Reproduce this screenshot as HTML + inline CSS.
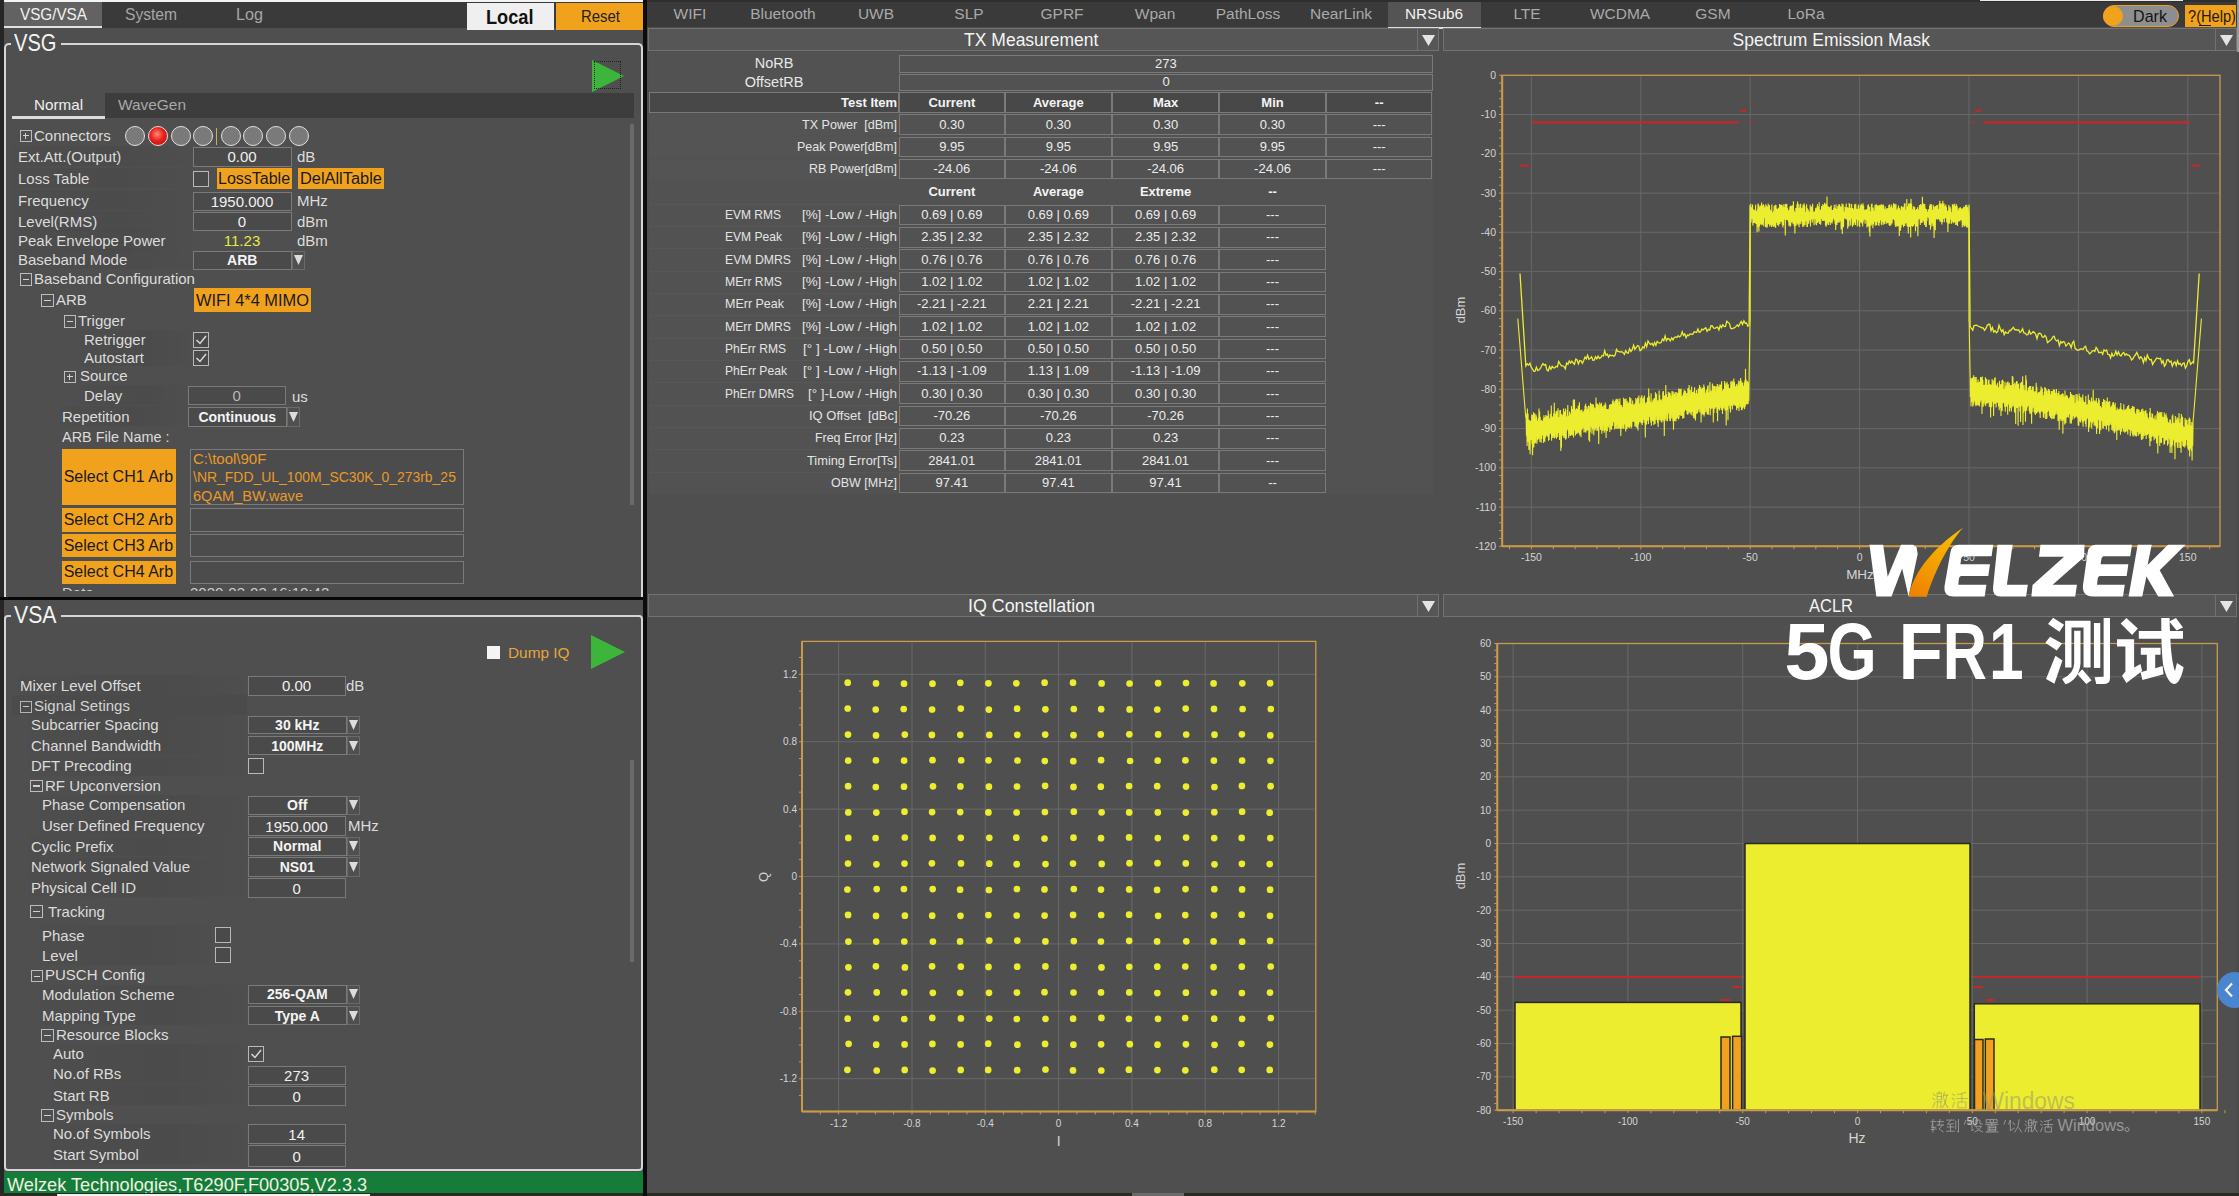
<!DOCTYPE html><html><head><meta charset="utf-8"><style>
html,body{margin:0;padding:0;}
body{width:2239px;height:1196px;position:relative;overflow:hidden;background:#4f4f4f;font-family:"Liberation Sans",sans-serif;}
div,span,svg{position:absolute;}
span{white-space:pre;}
</style></head><body>
<div style="left:0px;top:0px;width:2239px;height:1196px;background:#4f4f4f"></div>
<div style="left:0px;top:0px;width:4px;height:1196px;background:#262626"></div>
<div style="left:4px;top:0px;width:639px;height:1.5px;background:#f4f4f4"></div>
<div style="left:4px;top:1.5px;width:639px;height:26px;background:#393a39"></div>
<div style="left:4px;top:1.5px;width:98px;height:24px;background:#626262"></div>
<div style="left:4px;top:25.5px;width:98px;height:2.5px;background:#e2e2e2"></div>
<span style="left:20.0px;top:3.3px;font-size:17px;line-height:24px;color:#f2f2f2;transform:scaleX(0.897);transform-origin:0 0;">VSG/VSA</span>
<span style="left:125.0px;top:3.3px;font-size:17px;line-height:24px;color:#a6a6a6;transform:scaleX(0.918);transform-origin:0 0;">System</span>
<span style="left:235.5px;top:3.3px;font-size:17px;line-height:24px;color:#a6a6a6;transform:scaleX(0.952);transform-origin:0 0;">Log</span>
<div style="left:467px;top:2.5px;width:87px;height:27.5px;background:#efefef"></div>
<span style="left:486.2px;top:2.5px;font-size:20px;line-height:28px;color:#111;font-weight:bold;transform:scaleX(0.909);transform-origin:0 0;">Local</span>
<div style="left:556px;top:2.5px;width:86.5px;height:27.5px;background:#f0a21c"></div>
<span style="left:580.5px;top:4.5px;font-size:17px;line-height:24px;color:#222;transform:scaleX(0.878);transform-origin:0 0;">Reset</span>
<div style="left:4px;top:43px;width:638.5px;height:554px;border:2px solid #d6d6d6;border-radius:4px;box-sizing:border-box;border-bottom:none;border-radius:5px 5px 0 0;"></div>
<div style="left:11px;top:42px;width:50px;height:5px;background:#4f4f4f"></div>
<span style="left:14.0px;top:26.0px;font-size:24px;line-height:34px;color:#f4f4f4;transform:scaleX(0.838);transform-origin:0 0;">VSG</span>
<div style="left:596px;top:0px;width:0px;height:0px;"></div>
<div style="left:0px;top:596.5px;width:643.5px;height:3.5px;background:#080808"></div>
<div style="left:4px;top:615px;width:638.5px;height:556px;border:2px solid #d6d6d6;border-radius:4px;box-sizing:border-box;"></div>
<div style="left:11px;top:614px;width:50px;height:5px;background:#4f4f4f"></div>
<span style="left:14.0px;top:598.0px;font-size:24px;line-height:34px;color:#f4f4f4;transform:scaleX(0.885);transform-origin:0 0;">VSA</span>
<svg style="left:592px;top:59.5px" width="32" height="32"><polygon points="0,0 32,16.0 0,32" fill="#3db53a"/></svg>
<div style="left:594px;top:61px;width:27px;height:28px;border:1px dotted #222;box-sizing:border-box"></div>
<svg style="left:591px;top:635px" width="34" height="34"><polygon points="0,0 34,17.0 0,34" fill="#3db53a"/></svg>
<div style="left:12px;top:92.5px;width:622px;height:25.5px;background:#3d3d3d"></div>
<div style="left:12px;top:92.5px;width:93px;height:25.5px;background:#4f4f4f"></div>
<div style="left:12px;top:116px;width:93px;height:2.5px;background:#dcdcdc"></div>
<span style="left:34.0px;top:93.5px;font-size:15px;line-height:21px;color:#f0f0f0;transform:scaleX(1.014);transform-origin:0 0;">Normal</span>
<span style="left:118.0px;top:93.5px;font-size:15px;line-height:21px;color:#a8a8a8;transform:scaleX(1.028);transform-origin:0 0;">WaveGen</span>
<div style="left:630px;top:124px;width:4px;height:381px;background:#6a6a6a"></div>
<div style="left:630px;top:760px;width:4px;height:202px;background:#6a6a6a"></div>
<div style="left:19.6px;top:129.5px;width:12.5px;height:12.5px;border:1px solid #bdbdbd;box-sizing:border-box"></div>
<div style="left:22.6px;top:135.15px;width:6.5px;height:1.2px;background:#d0d0d0"></div>
<div style="left:25.25px;top:132.5px;width:1.2px;height:6.5px;background:#d0d0d0"></div>
<span style="left:34.0px;top:124.5px;font-size:15px;line-height:21px;color:#dcdcdc;">Connectors</span>
<div style="left:124.6px;top:126px;width:20px;height:20px;border-radius:50%;border:1.5px solid #e0e0e0;box-sizing:border-box;background:#7a7a7a"></div>
<div style="left:147.7px;top:126px;width:20px;height:20px;border-radius:50%;border:1.5px solid #e0e0e0;box-sizing:border-box;background:radial-gradient(circle at 45% 40%,#ff8a7a,#e8201a 45%,#b01010)"></div>
<div style="left:170.5px;top:126px;width:20px;height:20px;border-radius:50%;border:1.5px solid #e0e0e0;box-sizing:border-box;background:#7a7a7a"></div>
<div style="left:193.4px;top:126px;width:20px;height:20px;border-radius:50%;border:1.5px solid #e0e0e0;box-sizing:border-box;background:#7a7a7a"></div>
<div style="left:220.6px;top:126px;width:20px;height:20px;border-radius:50%;border:1.5px solid #e0e0e0;box-sizing:border-box;background:#7a7a7a"></div>
<div style="left:243px;top:126px;width:20px;height:20px;border-radius:50%;border:1.5px solid #e0e0e0;box-sizing:border-box;background:#7a7a7a"></div>
<div style="left:266px;top:126px;width:20px;height:20px;border-radius:50%;border:1.5px solid #e0e0e0;box-sizing:border-box;background:#7a7a7a"></div>
<div style="left:289px;top:126px;width:20px;height:20px;border-radius:50%;border:1.5px solid #e0e0e0;box-sizing:border-box;background:#7a7a7a"></div>
<div style="left:215.5px;top:128px;width:1.2px;height:17px;background:#c8b060"></div>
<div style="left:12px;top:146.0px;width:180px;height:20px;background:linear-gradient(90deg,rgba(0,0,0,0.02),rgba(0,0,0,0.05) 60%,rgba(0,0,0,0.01))"></div>
<span style="left:18.0px;top:145.5px;font-size:15px;line-height:21px;color:#dcdcdc;">Ext.Att.(Output)</span>
<div style="left:12px;top:168.0px;width:180px;height:20px;background:linear-gradient(90deg,rgba(0,0,0,0.02),rgba(0,0,0,0.05) 60%,rgba(0,0,0,0.01))"></div>
<span style="left:18.0px;top:167.5px;font-size:15px;line-height:21px;color:#dcdcdc;">Loss Table</span>
<div style="left:12px;top:190.0px;width:180px;height:20px;background:linear-gradient(90deg,rgba(0,0,0,0.02),rgba(0,0,0,0.05) 60%,rgba(0,0,0,0.01))"></div>
<span style="left:18.0px;top:189.5px;font-size:15px;line-height:21px;color:#dcdcdc;">Frequency</span>
<div style="left:12px;top:211.0px;width:180px;height:20px;background:linear-gradient(90deg,rgba(0,0,0,0.02),rgba(0,0,0,0.05) 60%,rgba(0,0,0,0.01))"></div>
<span style="left:18.0px;top:210.5px;font-size:15px;line-height:21px;color:#dcdcdc;">Level(RMS)</span>
<div style="left:12px;top:230.0px;width:180px;height:20px;background:linear-gradient(90deg,rgba(0,0,0,0.02),rgba(0,0,0,0.05) 60%,rgba(0,0,0,0.01))"></div>
<span style="left:18.0px;top:229.5px;font-size:15px;line-height:21px;color:#dcdcdc;">Peak Envelope Power</span>
<div style="left:12px;top:249.0px;width:180px;height:20px;background:linear-gradient(90deg,rgba(0,0,0,0.02),rgba(0,0,0,0.05) 60%,rgba(0,0,0,0.01))"></div>
<span style="left:18.0px;top:248.5px;font-size:15px;line-height:21px;color:#dcdcdc;">Baseband Mode</span>
<div style="left:192.5px;top:147px;width:99px;height:19.5px;border:1px solid #7a7a7a;background:#4a4a4a;box-sizing:border-box"></div>
<span style="left:227.4px;top:146.2px;font-size:15px;line-height:21px;color:#f0f0f0;">0.00</span>
<span style="left:297.0px;top:145.5px;font-size:15px;line-height:21px;color:#dcdcdc;">dB</span>
<div style="left:193px;top:171px;width:16px;height:16px;border:1.5px solid #b8b8b8;box-sizing:border-box;background:#4a4a4a"></div>
<div style="left:216.5px;top:168px;width:75px;height:21px;background:#f0a21c"></div>
<span style="left:218.0px;top:167.5px;font-size:16px;line-height:22px;color:#1a1a1a;">LossTable</span>
<div style="left:298px;top:168px;width:86px;height:21px;background:#f0a21c"></div>
<span style="left:300.0px;top:167.5px;font-size:16px;line-height:22px;color:#1a1a1a;transform:scaleX(1.023);transform-origin:0 0;">DelAllTable</span>
<div style="left:192.5px;top:191.5px;width:99px;height:19.5px;border:1px solid #7a7a7a;background:#4a4a4a;box-sizing:border-box"></div>
<span style="left:210.7px;top:190.8px;font-size:15px;line-height:21px;color:#f0f0f0;">1950.000</span>
<span style="left:297.0px;top:189.5px;font-size:15px;line-height:21px;color:#dcdcdc;">MHz</span>
<div style="left:192.5px;top:211.5px;width:99px;height:19.5px;border:1px solid #7a7a7a;background:#4a4a4a;box-sizing:border-box"></div>
<span style="left:237.8px;top:210.8px;font-size:15px;line-height:21px;color:#f0f0f0;">0</span>
<span style="left:297.0px;top:210.5px;font-size:15px;line-height:21px;color:#dcdcdc;">dBm</span>
<span style="left:223.8px;top:230.0px;font-size:15px;line-height:21px;color:#e8e840;">11.23</span>
<span style="left:297.0px;top:230.0px;font-size:15px;line-height:21px;color:#dcdcdc;">dBm</span>
<div style="left:192.5px;top:250.5px;width:99.5px;height:19px;border:1px solid #7a7a7a;background:#4a4a4a;box-sizing:border-box"></div>
<div style="left:292.0px;top:250.5px;width:13px;height:19px;border:1px solid #6a6a6a;background:#505050;box-sizing:border-box"></div>
<svg style="left:294.0px;top:254.0px" width="9" height="12"><polygon points="0,1 9,1 4.5,11" fill="#dcdcdc"/></svg>
<span style="left:227.1px;top:250.0px;font-size:14px;line-height:20px;color:#f4f4f4;font-weight:bold;">ARB</span>
<div style="left:19.6px;top:273px;width:12.5px;height:12.5px;border:1px solid #bdbdbd;box-sizing:border-box"></div>
<div style="left:22.6px;top:278.65px;width:6.5px;height:1.2px;background:#d0d0d0"></div>
<span style="left:34.0px;top:267.5px;font-size:15px;line-height:21px;color:#dcdcdc;">Baseband Configuration</span>
<div style="left:41px;top:294px;width:12.5px;height:12.5px;border:1px solid #bdbdbd;box-sizing:border-box"></div>
<div style="left:44px;top:299.65px;width:6.5px;height:1.2px;background:#d0d0d0"></div>
<span style="left:56.0px;top:288.5px;font-size:15px;line-height:21px;color:#dcdcdc;">ARB</span>
<div style="left:194px;top:288px;width:117px;height:24px;background:#f0a21c"></div>
<span style="left:196.0px;top:288.5px;font-size:17px;line-height:24px;color:#1a1a1a;transform:scaleX(0.965);transform-origin:0 0;">WIFI 4*4 MIMO</span>
<div style="left:63.5px;top:315.3px;width:12.5px;height:12.5px;border:1px solid #bdbdbd;box-sizing:border-box"></div>
<div style="left:66.5px;top:320.95px;width:6.5px;height:1.2px;background:#d0d0d0"></div>
<span style="left:78.0px;top:309.5px;font-size:15px;line-height:21px;color:#dcdcdc;">Trigger</span>
<div style="left:80px;top:330.0px;width:110px;height:18px;background:linear-gradient(90deg,rgba(0,0,0,0.02),rgba(0,0,0,0.05) 60%,rgba(0,0,0,0.01))"></div>
<span style="left:84.0px;top:328.5px;font-size:15px;line-height:21px;color:#dcdcdc;">Retrigger</span>
<div style="left:193px;top:332px;width:16px;height:16px;border:1.5px solid #b8b8b8;box-sizing:border-box;background:#4a4a4a"></div>
<svg style="left:193px;top:332px" width="16" height="16"><polyline points="3.5,8 7,11.5 13,4" fill="none" stroke="#d8d8d8" stroke-width="1.5"/></svg>
<div style="left:80px;top:348.0px;width:110px;height:18px;background:linear-gradient(90deg,rgba(0,0,0,0.02),rgba(0,0,0,0.05) 60%,rgba(0,0,0,0.01))"></div>
<span style="left:84.0px;top:346.5px;font-size:15px;line-height:21px;color:#dcdcdc;">Autostart</span>
<div style="left:193px;top:350px;width:16px;height:16px;border:1.5px solid #b8b8b8;box-sizing:border-box;background:#4a4a4a"></div>
<svg style="left:193px;top:350px" width="16" height="16"><polyline points="3.5,8 7,11.5 13,4" fill="none" stroke="#d8d8d8" stroke-width="1.5"/></svg>
<div style="left:63.5px;top:370.6px;width:12.5px;height:12.5px;border:1px solid #bdbdbd;box-sizing:border-box"></div>
<div style="left:66.5px;top:376.25px;width:6.5px;height:1.2px;background:#d0d0d0"></div>
<div style="left:69.15px;top:373.6px;width:1.2px;height:6.5px;background:#d0d0d0"></div>
<span style="left:80.0px;top:364.5px;font-size:15px;line-height:21px;color:#dcdcdc;">Source</span>
<div style="left:80px;top:385.0px;width:107px;height:20px;background:linear-gradient(90deg,rgba(0,0,0,0.02),rgba(0,0,0,0.05) 60%,rgba(0,0,0,0.01))"></div>
<span style="left:84.0px;top:384.5px;font-size:15px;line-height:21px;color:#dcdcdc;">Delay</span>
<div style="left:187.5px;top:386px;width:98.5px;height:19px;border:1px solid #7a7a7a;background:#4a4a4a;box-sizing:border-box"></div>
<span style="left:232.6px;top:385.0px;font-size:15px;line-height:21px;color:#b8b8b8;">0</span>
<span style="left:292.0px;top:385.5px;font-size:15px;line-height:21px;color:#dcdcdc;">us</span>
<div style="left:60px;top:406.0px;width:127px;height:20px;background:linear-gradient(90deg,rgba(0,0,0,0.02),rgba(0,0,0,0.05) 60%,rgba(0,0,0,0.01))"></div>
<span style="left:62.0px;top:405.5px;font-size:15px;line-height:21px;color:#dcdcdc;">Repetition</span>
<div style="left:187.5px;top:406.5px;width:99.5px;height:20.5px;border:1px solid #7a7a7a;background:#4a4a4a;box-sizing:border-box"></div>
<div style="left:287.0px;top:406.5px;width:13px;height:20.5px;border:1px solid #6a6a6a;background:#505050;box-sizing:border-box"></div>
<svg style="left:289.0px;top:410.75px" width="9" height="12"><polygon points="0,1 9,1 4.5,11" fill="#dcdcdc"/></svg>
<span style="left:198.4px;top:406.8px;font-size:14px;line-height:20px;color:#f4f4f4;font-weight:bold;">Continuous</span>
<span style="left:62.0px;top:425.5px;font-size:15px;line-height:21px;color:#dcdcdc;transform:scaleX(0.963);transform-origin:0 0;">ARB File Name :</span>
<div style="left:62px;top:448.7px;width:113.5px;height:56.3px;background:#f0a21c"></div>
<span style="left:63.7px;top:466.0px;font-size:16px;line-height:22px;color:#1a1a1a;">Select CH1 Arb</span>
<div style="left:190px;top:448.7px;width:274px;height:56.3px;border:1px solid #7a7a7a;box-sizing:border-box;background:#4c4c4c"></div>
<span style="left:193.0px;top:447.5px;font-size:15px;line-height:21px;color:#e89a28;">C:\tool\90F</span>
<span style="left:193.0px;top:466.0px;font-size:15px;line-height:21px;color:#e89a28;transform:scaleX(0.930);transform-origin:0 0;">\NR_FDD_UL_100M_SC30K_0_273rb_25</span>
<span style="left:193.0px;top:484.5px;font-size:15px;line-height:21px;color:#e89a28;transform:scaleX(0.970);transform-origin:0 0;">6QAM_BW.wave</span>
<div style="left:62px;top:508.3px;width:113.5px;height:23.499999999999943px;background:#f0a21c"></div>
<span style="left:63.7px;top:509.0px;font-size:16px;line-height:22px;color:#1a1a1a;">Select CH2 Arb</span>
<div style="left:190px;top:508.3px;width:274px;height:23.499999999999943px;border:1px solid #7a7a7a;box-sizing:border-box;background:#4c4c4c"></div>
<div style="left:62px;top:534px;width:113.5px;height:23px;background:#f0a21c"></div>
<span style="left:63.7px;top:534.5px;font-size:16px;line-height:22px;color:#1a1a1a;">Select CH3 Arb</span>
<div style="left:190px;top:534px;width:274px;height:23px;border:1px solid #7a7a7a;box-sizing:border-box;background:#4c4c4c"></div>
<div style="left:62px;top:561px;width:113.5px;height:22.5px;background:#f0a21c"></div>
<span style="left:63.7px;top:561.2px;font-size:16px;line-height:22px;color:#1a1a1a;">Select CH4 Arb</span>
<div style="left:190px;top:561px;width:274px;height:22.5px;border:1px solid #7a7a7a;box-sizing:border-box;background:#4c4c4c"></div>
<div style="left:60px;top:585px;width:400px;height:6px;overflow:hidden"><span style="left:2px;top:-1px;font-size:15px;line-height:18px;color:#d0d0d0">Date</span><span style="left:130px;top:-1px;font-size:15px;line-height:18px;color:#d0d0d0">2020-03-03 16:10:42</span></div>
<span style="left:507.8px;top:641.5px;font-size:15px;line-height:21px;color:#e8a53a;transform:scaleX(1.024);transform-origin:0 0;">Dump IQ</span>
<div style="left:487px;top:645.5px;width:13px;height:13px;background:#f4f4f4"></div>
<div style="left:18px;top:675.4px;width:228px;height:20px;background:linear-gradient(90deg,rgba(0,0,0,0.02),rgba(0,0,0,0.05) 60%,rgba(0,0,0,0.01))"></div>
<span style="left:20.0px;top:674.9px;font-size:15px;line-height:21px;color:#dcdcdc;">Mixer Level Offset</span>
<div style="left:247.5px;top:675.6px;width:98.2px;height:20.4px;border:1px solid #7a7a7a;background:#4a4a4a;box-sizing:border-box"></div>
<span style="left:282.0px;top:675.3px;font-size:15px;line-height:21px;color:#f0f0f0;">0.00</span>
<span style="left:346.0px;top:675.0px;font-size:15px;line-height:21px;color:#dcdcdc;">dB</span>
<div style="left:19.6px;top:700.6px;width:12.5px;height:12.5px;border:1px solid #bdbdbd;box-sizing:border-box"></div>
<div style="left:22.6px;top:706.25px;width:6.5px;height:1.2px;background:#d0d0d0"></div>
<span style="left:34.0px;top:694.5px;font-size:15px;line-height:21px;color:#dcdcdc;">Signal Setings</span>
<div style="left:12px;top:695px;width:235px;height:20px;background:rgba(0,0,0,0.04)"></div>
<div style="left:29px;top:714.7px;width:217px;height:20px;background:linear-gradient(90deg,rgba(0,0,0,0.02),rgba(0,0,0,0.05) 60%,rgba(0,0,0,0.01))"></div>
<span style="left:31.0px;top:714.2px;font-size:15px;line-height:21px;color:#dcdcdc;">Subcarrier Spacing</span>
<div style="left:247.5px;top:715.8px;width:99.5px;height:18px;border:1px solid #7a7a7a;background:#4a4a4a;box-sizing:border-box"></div>
<div style="left:347.0px;top:715.8px;width:13px;height:18px;border:1px solid #6a6a6a;background:#505050;box-sizing:border-box"></div>
<svg style="left:349.0px;top:718.8px" width="9" height="12"><polygon points="0,1 9,1 4.5,11" fill="#dcdcdc"/></svg>
<span style="left:275.1px;top:714.8px;font-size:14px;line-height:20px;color:#f4f4f4;font-weight:bold;">30 kHz</span>
<div style="left:29px;top:735.0px;width:217px;height:20px;background:linear-gradient(90deg,rgba(0,0,0,0.02),rgba(0,0,0,0.05) 60%,rgba(0,0,0,0.01))"></div>
<span style="left:31.0px;top:734.5px;font-size:15px;line-height:21px;color:#dcdcdc;">Channel Bandwidth</span>
<div style="left:247.5px;top:736px;width:99.5px;height:19px;border:1px solid #7a7a7a;background:#4a4a4a;box-sizing:border-box"></div>
<div style="left:347.0px;top:736px;width:13px;height:19px;border:1px solid #6a6a6a;background:#505050;box-sizing:border-box"></div>
<svg style="left:349.0px;top:739.5px" width="9" height="12"><polygon points="0,1 9,1 4.5,11" fill="#dcdcdc"/></svg>
<span style="left:271.2px;top:735.5px;font-size:14px;line-height:20px;color:#f4f4f4;font-weight:bold;">100MHz</span>
<div style="left:29px;top:755.7px;width:217px;height:20px;background:linear-gradient(90deg,rgba(0,0,0,0.02),rgba(0,0,0,0.05) 60%,rgba(0,0,0,0.01))"></div>
<span style="left:31.0px;top:755.2px;font-size:15px;line-height:21px;color:#dcdcdc;">DFT Precoding</span>
<div style="left:247.5px;top:758px;width:16px;height:16px;border:1.5px solid #b8b8b8;box-sizing:border-box;background:#4a4a4a"></div>
<div style="left:30.4px;top:779.8px;width:12.5px;height:12.5px;border:1px solid #bdbdbd;box-sizing:border-box"></div>
<div style="left:33.4px;top:785.4499999999999px;width:6.5px;height:1.2px;background:#d0d0d0"></div>
<span style="left:45.0px;top:774.5px;font-size:15px;line-height:21px;color:#dcdcdc;">RF Upconversion</span>
<div style="left:40px;top:794.8px;width:206px;height:20px;background:linear-gradient(90deg,rgba(0,0,0,0.02),rgba(0,0,0,0.05) 60%,rgba(0,0,0,0.01))"></div>
<span style="left:42.0px;top:794.3px;font-size:15px;line-height:21px;color:#dcdcdc;">Phase Compensation</span>
<div style="left:247.5px;top:796px;width:99.5px;height:18.7px;border:1px solid #7a7a7a;background:#4a4a4a;box-sizing:border-box"></div>
<div style="left:347.0px;top:796px;width:13px;height:18.7px;border:1px solid #6a6a6a;background:#505050;box-sizing:border-box"></div>
<svg style="left:349.0px;top:799.35px" width="9" height="12"><polygon points="0,1 9,1 4.5,11" fill="#dcdcdc"/></svg>
<span style="left:287.1px;top:795.4px;font-size:14px;line-height:20px;color:#f4f4f4;font-weight:bold;">Off</span>
<div style="left:40px;top:815.4px;width:206px;height:20px;background:linear-gradient(90deg,rgba(0,0,0,0.02),rgba(0,0,0,0.05) 60%,rgba(0,0,0,0.01))"></div>
<span style="left:42.0px;top:814.9px;font-size:15px;line-height:21px;color:#dcdcdc;">User Defined Frequency</span>
<div style="left:247.5px;top:816px;width:98.2px;height:20px;border:1px solid #7a7a7a;background:#4a4a4a;box-sizing:border-box"></div>
<span style="left:265.3px;top:815.5px;font-size:15px;line-height:21px;color:#f0f0f0;">1950.000</span>
<span style="left:348.0px;top:815.0px;font-size:15px;line-height:21px;color:#dcdcdc;">MHz</span>
<div style="left:29px;top:836.0px;width:217px;height:20px;background:linear-gradient(90deg,rgba(0,0,0,0.02),rgba(0,0,0,0.05) 60%,rgba(0,0,0,0.01))"></div>
<span style="left:31.0px;top:835.5px;font-size:15px;line-height:21px;color:#dcdcdc;">Cyclic Prefix</span>
<div style="left:247.5px;top:837px;width:99.5px;height:18.5px;border:1px solid #7a7a7a;background:#4a4a4a;box-sizing:border-box"></div>
<div style="left:347.0px;top:837px;width:13px;height:18.5px;border:1px solid #6a6a6a;background:#505050;box-sizing:border-box"></div>
<svg style="left:349.0px;top:840.25px" width="9" height="12"><polygon points="0,1 9,1 4.5,11" fill="#dcdcdc"/></svg>
<span style="left:273.1px;top:836.2px;font-size:14px;line-height:20px;color:#f4f4f4;font-weight:bold;">Normal</span>
<div style="left:29px;top:856.5px;width:217px;height:20px;background:linear-gradient(90deg,rgba(0,0,0,0.02),rgba(0,0,0,0.05) 60%,rgba(0,0,0,0.01))"></div>
<span style="left:31.0px;top:856.0px;font-size:15px;line-height:21px;color:#dcdcdc;">Network Signaled Value</span>
<div style="left:247.5px;top:857px;width:99.5px;height:20px;border:1px solid #7a7a7a;background:#4a4a4a;box-sizing:border-box"></div>
<div style="left:347.0px;top:857px;width:13px;height:20px;border:1px solid #6a6a6a;background:#505050;box-sizing:border-box"></div>
<svg style="left:349.0px;top:861.0px" width="9" height="12"><polygon points="0,1 9,1 4.5,11" fill="#dcdcdc"/></svg>
<span style="left:279.7px;top:857.0px;font-size:14px;line-height:20px;color:#f4f4f4;font-weight:bold;">NS01</span>
<div style="left:29px;top:877.0px;width:217px;height:20px;background:linear-gradient(90deg,rgba(0,0,0,0.02),rgba(0,0,0,0.05) 60%,rgba(0,0,0,0.01))"></div>
<span style="left:31.0px;top:876.5px;font-size:15px;line-height:21px;color:#dcdcdc;">Physical Cell ID</span>
<div style="left:247.5px;top:878px;width:98.2px;height:20px;border:1px solid #7a7a7a;background:#4a4a4a;box-sizing:border-box"></div>
<span style="left:292.4px;top:877.5px;font-size:15px;line-height:21px;color:#f0f0f0;">0</span>
<div style="left:30.4px;top:905px;width:12.5px;height:12.5px;border:1px solid #bdbdbd;box-sizing:border-box"></div>
<div style="left:33.4px;top:910.65px;width:6.5px;height:1.2px;background:#d0d0d0"></div>
<span style="left:48.0px;top:900.5px;font-size:15px;line-height:21px;color:#dcdcdc;">Tracking</span>
<div style="left:40px;top:925.0px;width:172px;height:20px;background:linear-gradient(90deg,rgba(0,0,0,0.02),rgba(0,0,0,0.05) 60%,rgba(0,0,0,0.01))"></div>
<span style="left:42.0px;top:924.5px;font-size:15px;line-height:21px;color:#dcdcdc;">Phase</span>
<div style="left:215px;top:927px;width:16px;height:16px;border:1.5px solid #b8b8b8;box-sizing:border-box;background:#4a4a4a"></div>
<div style="left:40px;top:945.0px;width:172px;height:20px;background:linear-gradient(90deg,rgba(0,0,0,0.02),rgba(0,0,0,0.05) 60%,rgba(0,0,0,0.01))"></div>
<span style="left:42.0px;top:944.5px;font-size:15px;line-height:21px;color:#dcdcdc;">Level</span>
<div style="left:215px;top:947px;width:16px;height:16px;border:1.5px solid #b8b8b8;box-sizing:border-box;background:#4a4a4a"></div>
<div style="left:30.6px;top:969.9px;width:12.5px;height:12.5px;border:1px solid #bdbdbd;box-sizing:border-box"></div>
<div style="left:33.6px;top:975.55px;width:6.5px;height:1.2px;background:#d0d0d0"></div>
<span style="left:45.0px;top:964.3px;font-size:15px;line-height:21px;color:#dcdcdc;">PUSCH Config</span>
<div style="left:40px;top:984.5px;width:206px;height:20px;background:linear-gradient(90deg,rgba(0,0,0,0.02),rgba(0,0,0,0.05) 60%,rgba(0,0,0,0.01))"></div>
<span style="left:42.0px;top:984.0px;font-size:15px;line-height:21px;color:#dcdcdc;">Modulation Scheme</span>
<div style="left:247.5px;top:985px;width:99.5px;height:18.8px;border:1px solid #7a7a7a;background:#4a4a4a;box-sizing:border-box"></div>
<div style="left:347.0px;top:985px;width:13px;height:18.8px;border:1px solid #6a6a6a;background:#505050;box-sizing:border-box"></div>
<svg style="left:349.0px;top:988.4px" width="9" height="12"><polygon points="0,1 9,1 4.5,11" fill="#dcdcdc"/></svg>
<span style="left:266.9px;top:984.4px;font-size:14px;line-height:20px;color:#f4f4f4;font-weight:bold;">256-QAM</span>
<div style="left:40px;top:1005.0px;width:206px;height:20px;background:linear-gradient(90deg,rgba(0,0,0,0.02),rgba(0,0,0,0.05) 60%,rgba(0,0,0,0.01))"></div>
<span style="left:42.0px;top:1004.5px;font-size:15px;line-height:21px;color:#dcdcdc;">Mapping Type</span>
<div style="left:247.5px;top:1006px;width:99.5px;height:19px;border:1px solid #7a7a7a;background:#4a4a4a;box-sizing:border-box"></div>
<div style="left:347.0px;top:1006px;width:13px;height:19px;border:1px solid #6a6a6a;background:#505050;box-sizing:border-box"></div>
<svg style="left:349.0px;top:1009.5px" width="9" height="12"><polygon points="0,1 9,1 4.5,11" fill="#dcdcdc"/></svg>
<span style="left:274.7px;top:1005.5px;font-size:14px;line-height:20px;color:#f4f4f4;font-weight:bold;">Type A</span>
<div style="left:41.4px;top:1029px;width:12.5px;height:12.5px;border:1px solid #bdbdbd;box-sizing:border-box"></div>
<div style="left:44.4px;top:1034.65px;width:6.5px;height:1.2px;background:#d0d0d0"></div>
<span style="left:56.0px;top:1023.5px;font-size:15px;line-height:21px;color:#dcdcdc;">Resource Blocks</span>
<div style="left:51px;top:1043.7px;width:195px;height:20px;background:linear-gradient(90deg,rgba(0,0,0,0.02),rgba(0,0,0,0.05) 60%,rgba(0,0,0,0.01))"></div>
<span style="left:53.0px;top:1043.2px;font-size:15px;line-height:21px;color:#dcdcdc;">Auto</span>
<div style="left:248px;top:1045.8px;width:16px;height:16px;border:1.5px solid #b8b8b8;box-sizing:border-box;background:#4a4a4a"></div>
<svg style="left:248px;top:1045.8px" width="16" height="16"><polyline points="3.5,8 7,11.5 13,4" fill="none" stroke="#d8d8d8" stroke-width="1.5"/></svg>
<div style="left:51px;top:1063.5px;width:195px;height:20px;background:linear-gradient(90deg,rgba(0,0,0,0.02),rgba(0,0,0,0.05) 60%,rgba(0,0,0,0.01))"></div>
<span style="left:53.0px;top:1063.0px;font-size:15px;line-height:21px;color:#dcdcdc;">No.of RBs</span>
<div style="left:247.5px;top:1065.6px;width:98.2px;height:19.7px;border:1px solid #7a7a7a;background:#4a4a4a;box-sizing:border-box"></div>
<span style="left:284.1px;top:1064.9px;font-size:15px;line-height:21px;color:#f0f0f0;">273</span>
<div style="left:51px;top:1085.0px;width:195px;height:20px;background:linear-gradient(90deg,rgba(0,0,0,0.02),rgba(0,0,0,0.05) 60%,rgba(0,0,0,0.01))"></div>
<span style="left:53.0px;top:1084.5px;font-size:15px;line-height:21px;color:#dcdcdc;">Start RB</span>
<div style="left:247.5px;top:1086px;width:98.2px;height:20px;border:1px solid #7a7a7a;background:#4a4a4a;box-sizing:border-box"></div>
<span style="left:292.4px;top:1085.5px;font-size:15px;line-height:21px;color:#f0f0f0;">0</span>
<div style="left:41.4px;top:1109px;width:12.5px;height:12.5px;border:1px solid #bdbdbd;box-sizing:border-box"></div>
<div style="left:44.4px;top:1114.65px;width:6.5px;height:1.2px;background:#d0d0d0"></div>
<span style="left:56.0px;top:1103.5px;font-size:15px;line-height:21px;color:#dcdcdc;">Symbols</span>
<div style="left:51px;top:1123.6px;width:195px;height:20px;background:linear-gradient(90deg,rgba(0,0,0,0.02),rgba(0,0,0,0.05) 60%,rgba(0,0,0,0.01))"></div>
<span style="left:53.0px;top:1123.1px;font-size:15px;line-height:21px;color:#dcdcdc;">No.of Symbols</span>
<div style="left:247.5px;top:1123.8px;width:98.2px;height:20.7px;border:1px solid #7a7a7a;background:#4a4a4a;box-sizing:border-box"></div>
<span style="left:288.3px;top:1123.6px;font-size:15px;line-height:21px;color:#f0f0f0;">14</span>
<div style="left:51px;top:1144.4px;width:195px;height:20px;background:linear-gradient(90deg,rgba(0,0,0,0.02),rgba(0,0,0,0.05) 60%,rgba(0,0,0,0.01))"></div>
<span style="left:53.0px;top:1143.9px;font-size:15px;line-height:21px;color:#dcdcdc;">Start Symbol</span>
<div style="left:247.5px;top:1145px;width:98.2px;height:22px;border:1px solid #7a7a7a;background:#4a4a4a;box-sizing:border-box"></div>
<span style="left:292.4px;top:1145.5px;font-size:15px;line-height:21px;color:#f0f0f0;">0</span>
<div style="left:4px;top:1171.8px;width:638.5px;height:21.5px;background:#157d3a"></div>
<span style="left:7.0px;top:1170.5px;font-size:19px;line-height:27px;color:#f0f0e0;transform:scaleX(0.957);transform-origin:0 0;">Welzek Technologies,T6290F,F00305,V2.3.3</span>
<div style="left:0px;top:1193px;width:2239px;height:3px;background:#2a2a24"></div>
<div style="left:57px;top:1193.5px;width:313px;height:2.5px;background:#f0f0f0"></div>
<div style="left:643.4px;top:0px;width:3.5px;height:1196px;background:#0c0c0c"></div>

<div style="left:647px;top:0px;width:1592px;height:1.5px;background:#2e2e2e"></div>
<div style="left:647px;top:1.5px;width:1592px;height:25px;background:#393a39"></div>
<span style="left:673.6px;top:3.0px;font-size:15.5px;line-height:22px;color:#a9a9a9;">WIFI</span>
<span style="left:750.2px;top:3.0px;font-size:15.5px;line-height:22px;color:#a9a9a9;">Bluetooth</span>
<span style="left:857.9px;top:3.0px;font-size:15.5px;line-height:22px;color:#a9a9a9;">UWB</span>
<span style="left:954.3px;top:3.0px;font-size:15.5px;line-height:22px;color:#a9a9a9;">SLP</span>
<span style="left:1040.5px;top:3.0px;font-size:15.5px;line-height:22px;color:#a9a9a9;">GPRF</span>
<span style="left:1134.8px;top:3.0px;font-size:15.5px;line-height:22px;color:#a9a9a9;">Wpan</span>
<span style="left:1215.7px;top:3.0px;font-size:15.5px;line-height:22px;color:#a9a9a9;">PathLoss</span>
<span style="left:1310.0px;top:3.0px;font-size:15.5px;line-height:22px;color:#a9a9a9;">NearLink</span>
<div style="left:1387.5px;top:1.5px;width:93px;height:25px;background:#545454"></div>
<div style="left:1387.5px;top:26.5px;width:93px;height:2px;background:#dedede"></div>
<span style="left:1405.0px;top:3.0px;font-size:15.5px;line-height:22px;color:#f2f2f2;transform:scaleX(0.990);transform-origin:0 0;">NRSub6</span>
<span style="left:1513.4px;top:3.0px;font-size:15.5px;line-height:22px;color:#a9a9a9;">LTE</span>
<span style="left:1589.9px;top:3.0px;font-size:15.5px;line-height:22px;color:#a9a9a9;">WCDMA</span>
<span style="left:1695.3px;top:3.0px;font-size:15.5px;line-height:22px;color:#a9a9a9;">GSM</span>
<span style="left:1787.5px;top:3.0px;font-size:15.5px;line-height:22px;color:#a9a9a9;">LoRa</span>
<div style="left:2102.5px;top:4.8px;width:76.5px;height:22px;border-radius:11px;border:1.5px solid #e8a020;background:#8e8e8e;box-sizing:border-box"></div>
<div style="left:2103px;top:6px;width:20px;height:20px;border-radius:50%;background:#f0a21c"></div>
<span style="left:2133.0px;top:4.5px;font-size:17px;line-height:24px;color:#151515;transform:scaleX(0.947);transform-origin:0 0;">Dark</span>
<div style="left:2184.7px;top:4.8px;width:51.5px;height:22.4px;background:#f0a21c"></div>
<span style="left:2188.0px;top:4.5px;font-size:17px;line-height:24px;color:#221a10;transform:scaleX(0.861);transform-origin:0 0;">?(Help)</span>
<div style="left:2199px;top:24.5px;width:12px;height:1.2px;background:#221a10"></div>
<div style="left:1980px;top:0px;width:203px;height:1px;background:#e8e8e8"></div>
<div style="left:1132px;top:1193px;width:52px;height:3px;background:#6a6a6a"></div>
<div style="left:2236.5px;top:0px;width:2.5px;height:52px;background:#9a9a9a"></div>
<div style="left:2236.5px;top:52px;width:2.5px;height:1141px;background:#4a4a4a"></div>
<div style="left:648px;top:28px;width:790.5px;height:23px;border:1.5px solid #727272;background:#555655;box-sizing:border-box"></div>
<div style="left:1416.5px;top:29px;width:1px;height:21px;background:#717171"></div>
<svg style="left:1421.5px;top:34px" width="13" height="12"><polygon points="0,1 13,1 6.5,12" fill="#e4e4e4"/></svg>
<span style="left:964.1px;top:27.5px;font-size:17.5px;line-height:24px;color:#f4f4f4;">TX Measurement</span>
<div style="left:1443px;top:28px;width:794px;height:23px;border:1.5px solid #727272;background:#555655;box-sizing:border-box"></div>
<div style="left:2215px;top:29px;width:1px;height:21px;background:#717171"></div>
<svg style="left:2220px;top:34px" width="13" height="12"><polygon points="0,1 13,1 6.5,12" fill="#e4e4e4"/></svg>
<span style="left:1732.5px;top:27.5px;font-size:17.5px;line-height:24px;color:#f4f4f4;">Spectrum Emission Mask</span>
<div style="left:648px;top:594.3px;width:790.5px;height:22.700000000000045px;border:1.5px solid #727272;background:#555655;box-sizing:border-box"></div>
<div style="left:1416.5px;top:595.3px;width:1px;height:20.700000000000045px;background:#717171"></div>
<svg style="left:1421.5px;top:600.3px" width="13" height="12"><polygon points="0,1 13,1 6.5,12" fill="#e4e4e4"/></svg>
<span style="left:967.5px;top:593.6px;font-size:17.5px;line-height:24px;color:#f4f4f4;transform:scaleX(1.020);transform-origin:0 0;">IQ Constellation</span>
<div style="left:1443px;top:594.3px;width:794px;height:22.700000000000045px;border:1.5px solid #727272;background:#555655;box-sizing:border-box"></div>
<div style="left:2215px;top:595.3px;width:1px;height:20.700000000000045px;background:#717171"></div>
<svg style="left:2220px;top:600.3px" width="13" height="12"><polygon points="0,1 13,1 6.5,12" fill="#e4e4e4"/></svg>
<span style="left:1808.5px;top:593.6px;font-size:17.5px;line-height:24px;color:#f4f4f4;transform:scaleX(0.942);transform-origin:0 0;">ACLR</span>
<div style="left:649px;top:52px;width:784px;height:442px;background:#525252"></div>
<span style="left:754.8px;top:53.0px;font-size:14.5px;line-height:20px;color:#e8e8e8;">NoRB</span>
<span style="left:744.8px;top:71.5px;font-size:14.5px;line-height:20px;color:#e8e8e8;">OffsetRB</span>
<div style="left:899px;top:55px;width:533.5px;height:17.5px;border:1.3px solid #7a7a7a;box-sizing:border-box"></div>
<div style="left:899px;top:73.5px;width:533.5px;height:17.5px;border:1.3px solid #7a7a7a;box-sizing:border-box"></div>
<span style="left:1155.1px;top:54.5px;font-size:13px;line-height:18px;color:#ececec;">273</span>
<span style="left:1162.4px;top:73.0px;font-size:13px;line-height:18px;color:#ececec;">0</span>
<div style="left:649px;top:92.4px;width:250px;height:20.599999999999994px;border:1.3px solid #7a7a7a;background:#484848;box-sizing:border-box"></div>
<span style="left:841.0px;top:94.0px;font-size:13px;line-height:18px;color:#f4f4f4;font-weight:bold;">Test Item</span>
<div style="left:899px;top:92.4px;width:105.70000000000005px;height:20.599999999999994px;border:1.3px solid #7a7a7a;background:#484848;box-sizing:border-box"></div>
<span style="left:928.4px;top:93.6px;font-size:13px;line-height:18px;color:#f4f4f4;font-weight:bold;">Current</span>
<div style="left:1004.7px;top:92.4px;width:107.29999999999995px;height:20.599999999999994px;border:1.3px solid #7a7a7a;background:#484848;box-sizing:border-box"></div>
<span style="left:1032.9px;top:93.6px;font-size:13px;line-height:18px;color:#f4f4f4;font-weight:bold;">Average</span>
<div style="left:1112px;top:92.4px;width:107.20000000000005px;height:20.599999999999994px;border:1.3px solid #7a7a7a;background:#484848;box-sizing:border-box"></div>
<span style="left:1153.0px;top:93.6px;font-size:13px;line-height:18px;color:#f4f4f4;font-weight:bold;">Max</span>
<div style="left:1219.2px;top:92.4px;width:106.59999999999991px;height:20.599999999999994px;border:1.3px solid #7a7a7a;background:#484848;box-sizing:border-box"></div>
<span style="left:1261.3px;top:93.6px;font-size:13px;line-height:18px;color:#f4f4f4;font-weight:bold;">Min</span>
<div style="left:1325.8px;top:92.4px;width:106.70000000000005px;height:20.599999999999994px;border:1.3px solid #7a7a7a;background:#484848;box-sizing:border-box"></div>
<span style="left:1374.8px;top:93.6px;font-size:13px;line-height:18px;color:#f4f4f4;font-weight:bold;">--</span>
<div style="left:650px;top:114px;width:249px;height:21px;background:rgba(255,255,255,0.015)"></div>
<span style="left:802.0px;top:115.5px;font-size:13px;line-height:18px;color:#e4e4e4;transform:scaleX(0.967);transform-origin:0 0;">TX Power  [dBm]</span>
<div style="left:899px;top:114px;width:105.70000000000005px;height:21px;border:1.3px solid #7a7a7a;box-sizing:border-box"></div>
<span style="left:939.2px;top:115.5px;font-size:13px;line-height:18px;color:#ececec;">0.30</span>
<div style="left:1004.7px;top:114px;width:107.29999999999995px;height:21px;border:1.3px solid #7a7a7a;box-sizing:border-box"></div>
<span style="left:1045.7px;top:115.5px;font-size:13px;line-height:18px;color:#ececec;">0.30</span>
<div style="left:1112px;top:114px;width:107.20000000000005px;height:21px;border:1.3px solid #7a7a7a;box-sizing:border-box"></div>
<span style="left:1152.9px;top:115.5px;font-size:13px;line-height:18px;color:#ececec;">0.30</span>
<div style="left:1219.2px;top:114px;width:106.59999999999991px;height:21px;border:1.3px solid #7a7a7a;box-sizing:border-box"></div>
<span style="left:1259.8px;top:115.5px;font-size:13px;line-height:18px;color:#ececec;">0.30</span>
<div style="left:1325.8px;top:114px;width:106.70000000000005px;height:21px;border:1.3px solid #7a7a7a;box-sizing:border-box"></div>
<span style="left:1372.7px;top:115.5px;font-size:13px;line-height:18px;color:#ececec;">---</span>
<div style="left:650px;top:136.5px;width:249px;height:20.5px;background:rgba(255,255,255,0.015)"></div>
<span style="left:797.0px;top:137.8px;font-size:13px;line-height:18px;color:#e4e4e4;transform:scaleX(0.961);transform-origin:0 0;">Peak Power[dBm]</span>
<div style="left:899px;top:136.5px;width:105.70000000000005px;height:20.5px;border:1.3px solid #7a7a7a;box-sizing:border-box"></div>
<span style="left:939.2px;top:137.8px;font-size:13px;line-height:18px;color:#ececec;">9.95</span>
<div style="left:1004.7px;top:136.5px;width:107.29999999999995px;height:20.5px;border:1.3px solid #7a7a7a;box-sizing:border-box"></div>
<span style="left:1045.7px;top:137.8px;font-size:13px;line-height:18px;color:#ececec;">9.95</span>
<div style="left:1112px;top:136.5px;width:107.20000000000005px;height:20.5px;border:1.3px solid #7a7a7a;box-sizing:border-box"></div>
<span style="left:1152.9px;top:137.8px;font-size:13px;line-height:18px;color:#ececec;">9.95</span>
<div style="left:1219.2px;top:136.5px;width:106.59999999999991px;height:20.5px;border:1.3px solid #7a7a7a;box-sizing:border-box"></div>
<span style="left:1259.8px;top:137.8px;font-size:13px;line-height:18px;color:#ececec;">9.95</span>
<div style="left:1325.8px;top:136.5px;width:106.70000000000005px;height:20.5px;border:1.3px solid #7a7a7a;box-sizing:border-box"></div>
<span style="left:1372.7px;top:137.8px;font-size:13px;line-height:18px;color:#ececec;">---</span>
<div style="left:650px;top:158.6px;width:249px;height:20.400000000000006px;background:rgba(255,255,255,0.015)"></div>
<span style="left:809.0px;top:159.8px;font-size:13px;line-height:18px;color:#e4e4e4;transform:scaleX(0.952);transform-origin:0 0;">RB Power[dBm]</span>
<div style="left:899px;top:158.6px;width:105.70000000000005px;height:20.400000000000006px;border:1.3px solid #7a7a7a;box-sizing:border-box"></div>
<span style="left:933.4px;top:159.8px;font-size:13px;line-height:18px;color:#ececec;">-24.06</span>
<div style="left:1004.7px;top:158.6px;width:107.29999999999995px;height:20.400000000000006px;border:1.3px solid #7a7a7a;box-sizing:border-box"></div>
<span style="left:1039.9px;top:159.8px;font-size:13px;line-height:18px;color:#ececec;">-24.06</span>
<div style="left:1112px;top:158.6px;width:107.20000000000005px;height:20.400000000000006px;border:1.3px solid #7a7a7a;box-sizing:border-box"></div>
<span style="left:1147.2px;top:159.8px;font-size:13px;line-height:18px;color:#ececec;">-24.06</span>
<div style="left:1219.2px;top:158.6px;width:106.59999999999991px;height:20.400000000000006px;border:1.3px solid #7a7a7a;box-sizing:border-box"></div>
<span style="left:1254.1px;top:159.8px;font-size:13px;line-height:18px;color:#ececec;">-24.06</span>
<div style="left:1325.8px;top:158.6px;width:106.70000000000005px;height:20.400000000000006px;border:1.3px solid #7a7a7a;box-sizing:border-box"></div>
<span style="left:1372.7px;top:159.8px;font-size:13px;line-height:18px;color:#ececec;">---</span>
<span style="left:928.4px;top:182.5px;font-size:13px;line-height:18px;color:#f4f4f4;font-weight:bold;">Current</span>
<span style="left:1032.9px;top:182.5px;font-size:13px;line-height:18px;color:#f4f4f4;font-weight:bold;">Average</span>
<span style="left:1139.9px;top:182.5px;font-size:13px;line-height:18px;color:#f4f4f4;font-weight:bold;">Extreme</span>
<span style="left:1268.2px;top:182.5px;font-size:13px;line-height:18px;color:#f4f4f4;font-weight:bold;">--</span>
<div style="left:650px;top:203.7px;width:249px;height:1px;background:rgba(255,255,255,0.03)"></div>
<span style="left:725.0px;top:205.9px;font-size:13px;line-height:18px;color:#e4e4e4;transform:scaleX(0.923);transform-origin:0 0;">EVM RMS</span>
<span style="left:802.0px;top:205.9px;font-size:13px;line-height:18px;color:#e4e4e4;transform:scaleX(1.027);transform-origin:0 0;">[%] -Low / -High</span>
<div style="left:899px;top:204.7px;width:105.70000000000005px;height:20.5px;border:1.3px solid #7a7a7a;box-sizing:border-box"></div>
<span style="left:921.2px;top:205.9px;font-size:13px;line-height:18px;color:#ececec;">0.69 | 0.69</span>
<div style="left:1004.7px;top:204.7px;width:107.29999999999995px;height:20.5px;border:1.3px solid #7a7a7a;box-sizing:border-box"></div>
<span style="left:1027.7px;top:205.9px;font-size:13px;line-height:18px;color:#ececec;">0.69 | 0.69</span>
<div style="left:1112px;top:204.7px;width:107.20000000000005px;height:20.5px;border:1.3px solid #7a7a7a;box-sizing:border-box"></div>
<span style="left:1135.0px;top:205.9px;font-size:13px;line-height:18px;color:#ececec;">0.69 | 0.69</span>
<div style="left:1219.2px;top:204.7px;width:106.59999999999991px;height:20.5px;border:1.3px solid #7a7a7a;box-sizing:border-box"></div>
<span style="left:1266.0px;top:205.9px;font-size:13px;line-height:18px;color:#ececec;">---</span>
<div style="left:650px;top:226.04px;width:249px;height:1px;background:rgba(255,255,255,0.03)"></div>
<span style="left:725.0px;top:228.3px;font-size:13px;line-height:18px;color:#e4e4e4;transform:scaleX(0.928);transform-origin:0 0;">EVM Peak</span>
<span style="left:802.0px;top:228.3px;font-size:13px;line-height:18px;color:#e4e4e4;transform:scaleX(1.027);transform-origin:0 0;">[%] -Low / -High</span>
<div style="left:899px;top:227.04px;width:105.70000000000005px;height:20.5px;border:1.3px solid #7a7a7a;box-sizing:border-box"></div>
<span style="left:921.2px;top:228.3px;font-size:13px;line-height:18px;color:#ececec;">2.35 | 2.32</span>
<div style="left:1004.7px;top:227.04px;width:107.29999999999995px;height:20.5px;border:1.3px solid #7a7a7a;box-sizing:border-box"></div>
<span style="left:1027.7px;top:228.3px;font-size:13px;line-height:18px;color:#ececec;">2.35 | 2.32</span>
<div style="left:1112px;top:227.04px;width:107.20000000000005px;height:20.5px;border:1.3px solid #7a7a7a;box-sizing:border-box"></div>
<span style="left:1135.0px;top:228.3px;font-size:13px;line-height:18px;color:#ececec;">2.35 | 2.32</span>
<div style="left:1219.2px;top:227.04px;width:106.59999999999991px;height:20.5px;border:1.3px solid #7a7a7a;box-sizing:border-box"></div>
<span style="left:1266.0px;top:228.3px;font-size:13px;line-height:18px;color:#ececec;">---</span>
<div style="left:650px;top:248.38px;width:249px;height:1px;background:rgba(255,255,255,0.03)"></div>
<span style="left:725.0px;top:250.6px;font-size:13px;line-height:18px;color:#e4e4e4;transform:scaleX(0.942);transform-origin:0 0;">EVM DMRS</span>
<span style="left:802.0px;top:250.6px;font-size:13px;line-height:18px;color:#e4e4e4;transform:scaleX(1.027);transform-origin:0 0;">[%] -Low / -High</span>
<div style="left:899px;top:249.38px;width:105.70000000000005px;height:20.5px;border:1.3px solid #7a7a7a;box-sizing:border-box"></div>
<span style="left:921.2px;top:250.6px;font-size:13px;line-height:18px;color:#ececec;">0.76 | 0.76</span>
<div style="left:1004.7px;top:249.38px;width:107.29999999999995px;height:20.5px;border:1.3px solid #7a7a7a;box-sizing:border-box"></div>
<span style="left:1027.7px;top:250.6px;font-size:13px;line-height:18px;color:#ececec;">0.76 | 0.76</span>
<div style="left:1112px;top:249.38px;width:107.20000000000005px;height:20.5px;border:1.3px solid #7a7a7a;box-sizing:border-box"></div>
<span style="left:1135.0px;top:250.6px;font-size:13px;line-height:18px;color:#ececec;">0.76 | 0.76</span>
<div style="left:1219.2px;top:249.38px;width:106.59999999999991px;height:20.5px;border:1.3px solid #7a7a7a;box-sizing:border-box"></div>
<span style="left:1266.0px;top:250.6px;font-size:13px;line-height:18px;color:#ececec;">---</span>
<div style="left:650px;top:270.71999999999997px;width:249px;height:1px;background:rgba(255,255,255,0.03)"></div>
<span style="left:725.0px;top:273.0px;font-size:13px;line-height:18px;color:#e4e4e4;transform:scaleX(0.940);transform-origin:0 0;">MErr RMS</span>
<span style="left:802.0px;top:273.0px;font-size:13px;line-height:18px;color:#e4e4e4;transform:scaleX(1.027);transform-origin:0 0;">[%] -Low / -High</span>
<div style="left:899px;top:271.71999999999997px;width:105.70000000000005px;height:20.5px;border:1.3px solid #7a7a7a;box-sizing:border-box"></div>
<span style="left:921.2px;top:273.0px;font-size:13px;line-height:18px;color:#ececec;">1.02 | 1.02</span>
<div style="left:1004.7px;top:271.71999999999997px;width:107.29999999999995px;height:20.5px;border:1.3px solid #7a7a7a;box-sizing:border-box"></div>
<span style="left:1027.7px;top:273.0px;font-size:13px;line-height:18px;color:#ececec;">1.02 | 1.02</span>
<div style="left:1112px;top:271.71999999999997px;width:107.20000000000005px;height:20.5px;border:1.3px solid #7a7a7a;box-sizing:border-box"></div>
<span style="left:1135.0px;top:273.0px;font-size:13px;line-height:18px;color:#ececec;">1.02 | 1.02</span>
<div style="left:1219.2px;top:271.71999999999997px;width:106.59999999999991px;height:20.5px;border:1.3px solid #7a7a7a;box-sizing:border-box"></div>
<span style="left:1266.0px;top:273.0px;font-size:13px;line-height:18px;color:#ececec;">---</span>
<div style="left:650px;top:293.06px;width:249px;height:1px;background:rgba(255,255,255,0.03)"></div>
<span style="left:725.0px;top:295.3px;font-size:13px;line-height:18px;color:#e4e4e4;transform:scaleX(0.961);transform-origin:0 0;">MErr Peak</span>
<span style="left:802.0px;top:295.3px;font-size:13px;line-height:18px;color:#e4e4e4;transform:scaleX(1.027);transform-origin:0 0;">[%] -Low / -High</span>
<div style="left:899px;top:294.06px;width:105.70000000000005px;height:20.5px;border:1.3px solid #7a7a7a;box-sizing:border-box"></div>
<span style="left:916.9px;top:295.3px;font-size:13px;line-height:18px;color:#ececec;">-2.21 | -2.21</span>
<div style="left:1004.7px;top:294.06px;width:107.29999999999995px;height:20.5px;border:1.3px solid #7a7a7a;box-sizing:border-box"></div>
<span style="left:1027.7px;top:295.3px;font-size:13px;line-height:18px;color:#ececec;">2.21 | 2.21</span>
<div style="left:1112px;top:294.06px;width:107.20000000000005px;height:20.5px;border:1.3px solid #7a7a7a;box-sizing:border-box"></div>
<span style="left:1130.7px;top:295.3px;font-size:13px;line-height:18px;color:#ececec;">-2.21 | -2.21</span>
<div style="left:1219.2px;top:294.06px;width:106.59999999999991px;height:20.5px;border:1.3px solid #7a7a7a;box-sizing:border-box"></div>
<span style="left:1266.0px;top:295.3px;font-size:13px;line-height:18px;color:#ececec;">---</span>
<div style="left:650px;top:315.4px;width:249px;height:1px;background:rgba(255,255,255,0.03)"></div>
<span style="left:725.0px;top:317.6px;font-size:13px;line-height:18px;color:#e4e4e4;transform:scaleX(0.942);transform-origin:0 0;">MErr DMRS</span>
<span style="left:802.0px;top:317.6px;font-size:13px;line-height:18px;color:#e4e4e4;transform:scaleX(1.027);transform-origin:0 0;">[%] -Low / -High</span>
<div style="left:899px;top:316.4px;width:105.70000000000005px;height:20.5px;border:1.3px solid #7a7a7a;box-sizing:border-box"></div>
<span style="left:921.2px;top:317.6px;font-size:13px;line-height:18px;color:#ececec;">1.02 | 1.02</span>
<div style="left:1004.7px;top:316.4px;width:107.29999999999995px;height:20.5px;border:1.3px solid #7a7a7a;box-sizing:border-box"></div>
<span style="left:1027.7px;top:317.6px;font-size:13px;line-height:18px;color:#ececec;">1.02 | 1.02</span>
<div style="left:1112px;top:316.4px;width:107.20000000000005px;height:20.5px;border:1.3px solid #7a7a7a;box-sizing:border-box"></div>
<span style="left:1135.0px;top:317.6px;font-size:13px;line-height:18px;color:#ececec;">1.02 | 1.02</span>
<div style="left:1219.2px;top:316.4px;width:106.59999999999991px;height:20.5px;border:1.3px solid #7a7a7a;box-sizing:border-box"></div>
<span style="left:1266.0px;top:317.6px;font-size:13px;line-height:18px;color:#ececec;">---</span>
<div style="left:650px;top:337.74px;width:249px;height:1px;background:rgba(255,255,255,0.03)"></div>
<span style="left:725.0px;top:340.0px;font-size:13px;line-height:18px;color:#e4e4e4;transform:scaleX(0.928);transform-origin:0 0;">PhErr RMS</span>
<span style="left:803.0px;top:340.0px;font-size:13px;line-height:18px;color:#e4e4e4;transform:scaleX(1.048);transform-origin:0 0;">[° ] -Low / -High</span>
<div style="left:899px;top:338.74px;width:105.70000000000005px;height:20.5px;border:1.3px solid #7a7a7a;box-sizing:border-box"></div>
<span style="left:921.2px;top:340.0px;font-size:13px;line-height:18px;color:#ececec;">0.50 | 0.50</span>
<div style="left:1004.7px;top:338.74px;width:107.29999999999995px;height:20.5px;border:1.3px solid #7a7a7a;box-sizing:border-box"></div>
<span style="left:1027.7px;top:340.0px;font-size:13px;line-height:18px;color:#ececec;">0.50 | 0.50</span>
<div style="left:1112px;top:338.74px;width:107.20000000000005px;height:20.5px;border:1.3px solid #7a7a7a;box-sizing:border-box"></div>
<span style="left:1135.0px;top:340.0px;font-size:13px;line-height:18px;color:#ececec;">0.50 | 0.50</span>
<div style="left:1219.2px;top:338.74px;width:106.59999999999991px;height:20.5px;border:1.3px solid #7a7a7a;box-sizing:border-box"></div>
<span style="left:1266.0px;top:340.0px;font-size:13px;line-height:18px;color:#ececec;">---</span>
<div style="left:650px;top:360.08px;width:249px;height:1px;background:rgba(255,255,255,0.03)"></div>
<span style="left:725.0px;top:362.3px;font-size:13px;line-height:18px;color:#e4e4e4;transform:scaleX(0.933);transform-origin:0 0;">PhErr Peak</span>
<span style="left:803.0px;top:362.3px;font-size:13px;line-height:18px;color:#e4e4e4;transform:scaleX(1.048);transform-origin:0 0;">[° ] -Low / -High</span>
<div style="left:899px;top:361.08px;width:105.70000000000005px;height:20.5px;border:1.3px solid #7a7a7a;box-sizing:border-box"></div>
<span style="left:916.9px;top:362.3px;font-size:13px;line-height:18px;color:#ececec;">-1.13 | -1.09</span>
<div style="left:1004.7px;top:361.08px;width:107.29999999999995px;height:20.5px;border:1.3px solid #7a7a7a;box-sizing:border-box"></div>
<span style="left:1027.7px;top:362.3px;font-size:13px;line-height:18px;color:#ececec;">1.13 | 1.09</span>
<div style="left:1112px;top:361.08px;width:107.20000000000005px;height:20.5px;border:1.3px solid #7a7a7a;box-sizing:border-box"></div>
<span style="left:1130.7px;top:362.3px;font-size:13px;line-height:18px;color:#ececec;">-1.13 | -1.09</span>
<div style="left:1219.2px;top:361.08px;width:106.59999999999991px;height:20.5px;border:1.3px solid #7a7a7a;box-sizing:border-box"></div>
<span style="left:1266.0px;top:362.3px;font-size:13px;line-height:18px;color:#ececec;">---</span>
<div style="left:650px;top:382.41999999999996px;width:249px;height:1px;background:rgba(255,255,255,0.03)"></div>
<span style="left:725.0px;top:384.7px;font-size:13px;line-height:18px;color:#e4e4e4;transform:scaleX(0.918);transform-origin:0 0;">PhErr DMRS</span>
<span style="left:808.0px;top:384.7px;font-size:13px;line-height:18px;color:#e4e4e4;transform:scaleX(1.033);transform-origin:0 0;">[° ]-Low / -High</span>
<div style="left:899px;top:383.41999999999996px;width:105.70000000000005px;height:20.5px;border:1.3px solid #7a7a7a;box-sizing:border-box"></div>
<span style="left:921.2px;top:384.7px;font-size:13px;line-height:18px;color:#ececec;">0.30 | 0.30</span>
<div style="left:1004.7px;top:383.41999999999996px;width:107.29999999999995px;height:20.5px;border:1.3px solid #7a7a7a;box-sizing:border-box"></div>
<span style="left:1027.7px;top:384.7px;font-size:13px;line-height:18px;color:#ececec;">0.30 | 0.30</span>
<div style="left:1112px;top:383.41999999999996px;width:107.20000000000005px;height:20.5px;border:1.3px solid #7a7a7a;box-sizing:border-box"></div>
<span style="left:1135.0px;top:384.7px;font-size:13px;line-height:18px;color:#ececec;">0.30 | 0.30</span>
<div style="left:1219.2px;top:383.41999999999996px;width:106.59999999999991px;height:20.5px;border:1.3px solid #7a7a7a;box-sizing:border-box"></div>
<span style="left:1266.0px;top:384.7px;font-size:13px;line-height:18px;color:#ececec;">---</span>
<div style="left:650px;top:404.76px;width:249px;height:1px;background:rgba(255,255,255,0.03)"></div>
<span style="left:809.0px;top:407.0px;font-size:13px;line-height:18px;color:#e4e4e4;">IQ Offset  [dBc]</span>
<div style="left:899px;top:405.76px;width:105.70000000000005px;height:20.5px;border:1.3px solid #7a7a7a;box-sizing:border-box"></div>
<span style="left:933.4px;top:407.0px;font-size:13px;line-height:18px;color:#ececec;">-70.26</span>
<div style="left:1004.7px;top:405.76px;width:107.29999999999995px;height:20.5px;border:1.3px solid #7a7a7a;box-sizing:border-box"></div>
<span style="left:1039.9px;top:407.0px;font-size:13px;line-height:18px;color:#ececec;">-70.26</span>
<div style="left:1112px;top:405.76px;width:107.20000000000005px;height:20.5px;border:1.3px solid #7a7a7a;box-sizing:border-box"></div>
<span style="left:1147.2px;top:407.0px;font-size:13px;line-height:18px;color:#ececec;">-70.26</span>
<div style="left:1219.2px;top:405.76px;width:106.59999999999991px;height:20.5px;border:1.3px solid #7a7a7a;box-sizing:border-box"></div>
<span style="left:1266.0px;top:407.0px;font-size:13px;line-height:18px;color:#ececec;">---</span>
<div style="left:650px;top:427.1px;width:249px;height:1px;background:rgba(255,255,255,0.03)"></div>
<span style="left:815.0px;top:429.4px;font-size:13px;line-height:18px;color:#e4e4e4;transform:scaleX(0.954);transform-origin:0 0;">Freq Error [Hz]</span>
<div style="left:899px;top:428.1px;width:105.70000000000005px;height:20.5px;border:1.3px solid #7a7a7a;box-sizing:border-box"></div>
<span style="left:939.2px;top:429.4px;font-size:13px;line-height:18px;color:#ececec;">0.23</span>
<div style="left:1004.7px;top:428.1px;width:107.29999999999995px;height:20.5px;border:1.3px solid #7a7a7a;box-sizing:border-box"></div>
<span style="left:1045.7px;top:429.4px;font-size:13px;line-height:18px;color:#ececec;">0.23</span>
<div style="left:1112px;top:428.1px;width:107.20000000000005px;height:20.5px;border:1.3px solid #7a7a7a;box-sizing:border-box"></div>
<span style="left:1152.9px;top:429.4px;font-size:13px;line-height:18px;color:#ececec;">0.23</span>
<div style="left:1219.2px;top:428.1px;width:106.59999999999991px;height:20.5px;border:1.3px solid #7a7a7a;box-sizing:border-box"></div>
<span style="left:1266.0px;top:429.4px;font-size:13px;line-height:18px;color:#ececec;">---</span>
<div style="left:650px;top:449.44px;width:249px;height:1px;background:rgba(255,255,255,0.03)"></div>
<span style="left:807.0px;top:451.7px;font-size:13px;line-height:18px;color:#e4e4e4;transform:scaleX(0.986);transform-origin:0 0;">Timing Error[Ts]</span>
<div style="left:899px;top:450.44px;width:105.70000000000005px;height:20.5px;border:1.3px solid #7a7a7a;box-sizing:border-box"></div>
<span style="left:928.3px;top:451.7px;font-size:13px;line-height:18px;color:#ececec;">2841.01</span>
<div style="left:1004.7px;top:450.44px;width:107.29999999999995px;height:20.5px;border:1.3px solid #7a7a7a;box-sizing:border-box"></div>
<span style="left:1034.8px;top:451.7px;font-size:13px;line-height:18px;color:#ececec;">2841.01</span>
<div style="left:1112px;top:450.44px;width:107.20000000000005px;height:20.5px;border:1.3px solid #7a7a7a;box-sizing:border-box"></div>
<span style="left:1142.1px;top:451.7px;font-size:13px;line-height:18px;color:#ececec;">2841.01</span>
<div style="left:1219.2px;top:450.44px;width:106.59999999999991px;height:20.5px;border:1.3px solid #7a7a7a;box-sizing:border-box"></div>
<span style="left:1266.0px;top:451.7px;font-size:13px;line-height:18px;color:#ececec;">---</span>
<div style="left:650px;top:471.78px;width:249px;height:1px;background:rgba(255,255,255,0.03)"></div>
<span style="left:831.0px;top:474.0px;font-size:13px;line-height:18px;color:#e4e4e4;transform:scaleX(0.962);transform-origin:0 0;">OBW [MHz]</span>
<div style="left:899px;top:472.78px;width:105.70000000000005px;height:20.5px;border:1.3px solid #7a7a7a;box-sizing:border-box"></div>
<span style="left:935.6px;top:474.0px;font-size:13px;line-height:18px;color:#ececec;">97.41</span>
<div style="left:1004.7px;top:472.78px;width:107.29999999999995px;height:20.5px;border:1.3px solid #7a7a7a;box-sizing:border-box"></div>
<span style="left:1042.1px;top:474.0px;font-size:13px;line-height:18px;color:#ececec;">97.41</span>
<div style="left:1112px;top:472.78px;width:107.20000000000005px;height:20.5px;border:1.3px solid #7a7a7a;box-sizing:border-box"></div>
<span style="left:1149.3px;top:474.0px;font-size:13px;line-height:18px;color:#ececec;">97.41</span>
<div style="left:1219.2px;top:472.78px;width:106.59999999999991px;height:20.5px;border:1.3px solid #7a7a7a;box-sizing:border-box"></div>
<span style="left:1268.2px;top:474.0px;font-size:13px;line-height:18px;color:#ececec;">--</span>
<svg style="left:0;top:0" width="2239" height="1196">
<line x1="1502.2" y1="507.1" x2="2220.0" y2="507.1" stroke="#686868" stroke-width="1" />
<line x1="1502.2" y1="467.8" x2="2220.0" y2="467.8" stroke="#686868" stroke-width="1" />
<line x1="1502.2" y1="428.6" x2="2220.0" y2="428.6" stroke="#686868" stroke-width="1" />
<line x1="1502.2" y1="389.3" x2="2220.0" y2="389.3" stroke="#686868" stroke-width="1" />
<line x1="1502.2" y1="350.1" x2="2220.0" y2="350.1" stroke="#686868" stroke-width="1" />
<line x1="1502.2" y1="310.8" x2="2220.0" y2="310.8" stroke="#686868" stroke-width="1" />
<line x1="1502.2" y1="271.6" x2="2220.0" y2="271.6" stroke="#686868" stroke-width="1" />
<line x1="1502.2" y1="232.3" x2="2220.0" y2="232.3" stroke="#686868" stroke-width="1" />
<line x1="1502.2" y1="193.1" x2="2220.0" y2="193.1" stroke="#686868" stroke-width="1" />
<line x1="1502.2" y1="153.8" x2="2220.0" y2="153.8" stroke="#686868" stroke-width="1" />
<line x1="1502.2" y1="114.5" x2="2220.0" y2="114.5" stroke="#686868" stroke-width="1" />
<line x1="1531.4" y1="75.3" x2="1531.4" y2="546.3" stroke="#686868" stroke-width="1" />
<line x1="1640.8" y1="75.3" x2="1640.8" y2="546.3" stroke="#686868" stroke-width="1" />
<line x1="1750.2" y1="75.3" x2="1750.2" y2="546.3" stroke="#686868" stroke-width="1" />
<line x1="1859.6" y1="75.3" x2="1859.6" y2="546.3" stroke="#686868" stroke-width="1" />
<line x1="1969.0" y1="75.3" x2="1969.0" y2="546.3" stroke="#686868" stroke-width="1" />
<line x1="2078.4" y1="75.3" x2="2078.4" y2="546.3" stroke="#686868" stroke-width="1" />
<line x1="2187.8" y1="75.3" x2="2187.8" y2="546.3" stroke="#686868" stroke-width="1" />
<rect x="1502.2" y="75.3" width="717.8" height="470.99999999999994" fill="none" stroke="#c99a4a" stroke-width="1.3"/>
<line x1="1502.2" y1="75.3" x2="1502.2" y2="546.3" stroke="#c99a4a" stroke-width="2"/>
<line x1="1502.2" y1="546.3" x2="2220" y2="546.3" stroke="#c99a4a" stroke-width="2"/>
<line x1="1499.2" y1="75.3" x2="1502.2" y2="75.3" stroke="#c99a4a" stroke-width="1" />
<line x1="1499.2" y1="83.1" x2="1502.2" y2="83.1" stroke="#c99a4a" stroke-width="1" />
<line x1="1499.2" y1="91.0" x2="1502.2" y2="91.0" stroke="#c99a4a" stroke-width="1" />
<line x1="1499.2" y1="98.8" x2="1502.2" y2="98.8" stroke="#c99a4a" stroke-width="1" />
<line x1="1499.2" y1="106.7" x2="1502.2" y2="106.7" stroke="#c99a4a" stroke-width="1" />
<line x1="1499.2" y1="114.5" x2="1502.2" y2="114.5" stroke="#c99a4a" stroke-width="1" />
<line x1="1499.2" y1="122.4" x2="1502.2" y2="122.4" stroke="#c99a4a" stroke-width="1" />
<line x1="1499.2" y1="130.2" x2="1502.2" y2="130.2" stroke="#c99a4a" stroke-width="1" />
<line x1="1499.2" y1="138.1" x2="1502.2" y2="138.1" stroke="#c99a4a" stroke-width="1" />
<line x1="1499.2" y1="145.9" x2="1502.2" y2="145.9" stroke="#c99a4a" stroke-width="1" />
<line x1="1499.2" y1="153.8" x2="1502.2" y2="153.8" stroke="#c99a4a" stroke-width="1" />
<line x1="1499.2" y1="161.6" x2="1502.2" y2="161.6" stroke="#c99a4a" stroke-width="1" />
<line x1="1499.2" y1="169.5" x2="1502.2" y2="169.5" stroke="#c99a4a" stroke-width="1" />
<line x1="1499.2" y1="177.3" x2="1502.2" y2="177.3" stroke="#c99a4a" stroke-width="1" />
<line x1="1499.2" y1="185.2" x2="1502.2" y2="185.2" stroke="#c99a4a" stroke-width="1" />
<line x1="1499.2" y1="193.1" x2="1502.2" y2="193.1" stroke="#c99a4a" stroke-width="1" />
<line x1="1499.2" y1="200.9" x2="1502.2" y2="200.9" stroke="#c99a4a" stroke-width="1" />
<line x1="1499.2" y1="208.8" x2="1502.2" y2="208.8" stroke="#c99a4a" stroke-width="1" />
<line x1="1499.2" y1="216.6" x2="1502.2" y2="216.6" stroke="#c99a4a" stroke-width="1" />
<line x1="1499.2" y1="224.4" x2="1502.2" y2="224.4" stroke="#c99a4a" stroke-width="1" />
<line x1="1499.2" y1="232.3" x2="1502.2" y2="232.3" stroke="#c99a4a" stroke-width="1" />
<line x1="1499.2" y1="240.1" x2="1502.2" y2="240.1" stroke="#c99a4a" stroke-width="1" />
<line x1="1499.2" y1="248.0" x2="1502.2" y2="248.0" stroke="#c99a4a" stroke-width="1" />
<line x1="1499.2" y1="255.8" x2="1502.2" y2="255.8" stroke="#c99a4a" stroke-width="1" />
<line x1="1499.2" y1="263.7" x2="1502.2" y2="263.7" stroke="#c99a4a" stroke-width="1" />
<line x1="1499.2" y1="271.6" x2="1502.2" y2="271.6" stroke="#c99a4a" stroke-width="1" />
<line x1="1499.2" y1="279.4" x2="1502.2" y2="279.4" stroke="#c99a4a" stroke-width="1" />
<line x1="1499.2" y1="287.2" x2="1502.2" y2="287.2" stroke="#c99a4a" stroke-width="1" />
<line x1="1499.2" y1="295.1" x2="1502.2" y2="295.1" stroke="#c99a4a" stroke-width="1" />
<line x1="1499.2" y1="302.9" x2="1502.2" y2="302.9" stroke="#c99a4a" stroke-width="1" />
<line x1="1499.2" y1="310.8" x2="1502.2" y2="310.8" stroke="#c99a4a" stroke-width="1" />
<line x1="1499.2" y1="318.6" x2="1502.2" y2="318.6" stroke="#c99a4a" stroke-width="1" />
<line x1="1499.2" y1="326.5" x2="1502.2" y2="326.5" stroke="#c99a4a" stroke-width="1" />
<line x1="1499.2" y1="334.4" x2="1502.2" y2="334.4" stroke="#c99a4a" stroke-width="1" />
<line x1="1499.2" y1="342.2" x2="1502.2" y2="342.2" stroke="#c99a4a" stroke-width="1" />
<line x1="1499.2" y1="350.1" x2="1502.2" y2="350.1" stroke="#c99a4a" stroke-width="1" />
<line x1="1499.2" y1="357.9" x2="1502.2" y2="357.9" stroke="#c99a4a" stroke-width="1" />
<line x1="1499.2" y1="365.8" x2="1502.2" y2="365.8" stroke="#c99a4a" stroke-width="1" />
<line x1="1499.2" y1="373.6" x2="1502.2" y2="373.6" stroke="#c99a4a" stroke-width="1" />
<line x1="1499.2" y1="381.4" x2="1502.2" y2="381.4" stroke="#c99a4a" stroke-width="1" />
<line x1="1499.2" y1="389.3" x2="1502.2" y2="389.3" stroke="#c99a4a" stroke-width="1" />
<line x1="1499.2" y1="397.1" x2="1502.2" y2="397.1" stroke="#c99a4a" stroke-width="1" />
<line x1="1499.2" y1="405.0" x2="1502.2" y2="405.0" stroke="#c99a4a" stroke-width="1" />
<line x1="1499.2" y1="412.9" x2="1502.2" y2="412.9" stroke="#c99a4a" stroke-width="1" />
<line x1="1499.2" y1="420.7" x2="1502.2" y2="420.7" stroke="#c99a4a" stroke-width="1" />
<line x1="1499.2" y1="428.6" x2="1502.2" y2="428.6" stroke="#c99a4a" stroke-width="1" />
<line x1="1499.2" y1="436.4" x2="1502.2" y2="436.4" stroke="#c99a4a" stroke-width="1" />
<line x1="1499.2" y1="444.2" x2="1502.2" y2="444.2" stroke="#c99a4a" stroke-width="1" />
<line x1="1499.2" y1="452.1" x2="1502.2" y2="452.1" stroke="#c99a4a" stroke-width="1" />
<line x1="1499.2" y1="459.9" x2="1502.2" y2="459.9" stroke="#c99a4a" stroke-width="1" />
<line x1="1499.2" y1="467.8" x2="1502.2" y2="467.8" stroke="#c99a4a" stroke-width="1" />
<line x1="1499.2" y1="475.6" x2="1502.2" y2="475.6" stroke="#c99a4a" stroke-width="1" />
<line x1="1499.2" y1="483.5" x2="1502.2" y2="483.5" stroke="#c99a4a" stroke-width="1" />
<line x1="1499.2" y1="491.3" x2="1502.2" y2="491.3" stroke="#c99a4a" stroke-width="1" />
<line x1="1499.2" y1="499.2" x2="1502.2" y2="499.2" stroke="#c99a4a" stroke-width="1" />
<line x1="1499.2" y1="507.1" x2="1502.2" y2="507.1" stroke="#c99a4a" stroke-width="1" />
<line x1="1499.2" y1="514.9" x2="1502.2" y2="514.9" stroke="#c99a4a" stroke-width="1" />
<line x1="1499.2" y1="522.8" x2="1502.2" y2="522.8" stroke="#c99a4a" stroke-width="1" />
<line x1="1499.2" y1="530.6" x2="1502.2" y2="530.6" stroke="#c99a4a" stroke-width="1" />
<line x1="1499.2" y1="538.4" x2="1502.2" y2="538.4" stroke="#c99a4a" stroke-width="1" />
<line x1="1499.2" y1="546.3" x2="1502.2" y2="546.3" stroke="#c99a4a" stroke-width="1" />
<line x1="1509.5" y1="546.3" x2="1509.5" y2="549.3" stroke="#c99a4a" stroke-width="1" />
<line x1="1531.4" y1="546.3" x2="1531.4" y2="549.3" stroke="#c99a4a" stroke-width="1" />
<line x1="1553.3" y1="546.3" x2="1553.3" y2="549.3" stroke="#c99a4a" stroke-width="1" />
<line x1="1575.2" y1="546.3" x2="1575.2" y2="549.3" stroke="#c99a4a" stroke-width="1" />
<line x1="1597.0" y1="546.3" x2="1597.0" y2="549.3" stroke="#c99a4a" stroke-width="1" />
<line x1="1618.9" y1="546.3" x2="1618.9" y2="549.3" stroke="#c99a4a" stroke-width="1" />
<line x1="1640.8" y1="546.3" x2="1640.8" y2="549.3" stroke="#c99a4a" stroke-width="1" />
<line x1="1662.7" y1="546.3" x2="1662.7" y2="549.3" stroke="#c99a4a" stroke-width="1" />
<line x1="1684.6" y1="546.3" x2="1684.6" y2="549.3" stroke="#c99a4a" stroke-width="1" />
<line x1="1706.4" y1="546.3" x2="1706.4" y2="549.3" stroke="#c99a4a" stroke-width="1" />
<line x1="1728.3" y1="546.3" x2="1728.3" y2="549.3" stroke="#c99a4a" stroke-width="1" />
<line x1="1750.2" y1="546.3" x2="1750.2" y2="549.3" stroke="#c99a4a" stroke-width="1" />
<line x1="1772.1" y1="546.3" x2="1772.1" y2="549.3" stroke="#c99a4a" stroke-width="1" />
<line x1="1794.0" y1="546.3" x2="1794.0" y2="549.3" stroke="#c99a4a" stroke-width="1" />
<line x1="1815.8" y1="546.3" x2="1815.8" y2="549.3" stroke="#c99a4a" stroke-width="1" />
<line x1="1837.7" y1="546.3" x2="1837.7" y2="549.3" stroke="#c99a4a" stroke-width="1" />
<line x1="1859.6" y1="546.3" x2="1859.6" y2="549.3" stroke="#c99a4a" stroke-width="1" />
<line x1="1881.5" y1="546.3" x2="1881.5" y2="549.3" stroke="#c99a4a" stroke-width="1" />
<line x1="1903.4" y1="546.3" x2="1903.4" y2="549.3" stroke="#c99a4a" stroke-width="1" />
<line x1="1925.2" y1="546.3" x2="1925.2" y2="549.3" stroke="#c99a4a" stroke-width="1" />
<line x1="1947.1" y1="546.3" x2="1947.1" y2="549.3" stroke="#c99a4a" stroke-width="1" />
<line x1="1969.0" y1="546.3" x2="1969.0" y2="549.3" stroke="#c99a4a" stroke-width="1" />
<line x1="1990.9" y1="546.3" x2="1990.9" y2="549.3" stroke="#c99a4a" stroke-width="1" />
<line x1="2012.8" y1="546.3" x2="2012.8" y2="549.3" stroke="#c99a4a" stroke-width="1" />
<line x1="2034.6" y1="546.3" x2="2034.6" y2="549.3" stroke="#c99a4a" stroke-width="1" />
<line x1="2056.5" y1="546.3" x2="2056.5" y2="549.3" stroke="#c99a4a" stroke-width="1" />
<line x1="2078.4" y1="546.3" x2="2078.4" y2="549.3" stroke="#c99a4a" stroke-width="1" />
<line x1="2100.3" y1="546.3" x2="2100.3" y2="549.3" stroke="#c99a4a" stroke-width="1" />
<line x1="2122.2" y1="546.3" x2="2122.2" y2="549.3" stroke="#c99a4a" stroke-width="1" />
<line x1="2144.0" y1="546.3" x2="2144.0" y2="549.3" stroke="#c99a4a" stroke-width="1" />
<line x1="2165.9" y1="546.3" x2="2165.9" y2="549.3" stroke="#c99a4a" stroke-width="1" />
<line x1="2187.8" y1="546.3" x2="2187.8" y2="549.3" stroke="#c99a4a" stroke-width="1" />
<line x1="2209.7" y1="546.3" x2="2209.7" y2="549.3" stroke="#c99a4a" stroke-width="1" />
<text x="1496.0" y="78.8" font-size="10.5" fill="#d4d4d4" text-anchor="end" >0</text>
<text x="1496.0" y="118.0" font-size="10.5" fill="#d4d4d4" text-anchor="end" >-10</text>
<text x="1496.0" y="157.3" font-size="10.5" fill="#d4d4d4" text-anchor="end" >-20</text>
<text x="1496.0" y="196.6" font-size="10.5" fill="#d4d4d4" text-anchor="end" >-30</text>
<text x="1496.0" y="235.8" font-size="10.5" fill="#d4d4d4" text-anchor="end" >-40</text>
<text x="1496.0" y="275.1" font-size="10.5" fill="#d4d4d4" text-anchor="end" >-50</text>
<text x="1496.0" y="314.3" font-size="10.5" fill="#d4d4d4" text-anchor="end" >-60</text>
<text x="1496.0" y="353.6" font-size="10.5" fill="#d4d4d4" text-anchor="end" >-70</text>
<text x="1496.0" y="392.8" font-size="10.5" fill="#d4d4d4" text-anchor="end" >-80</text>
<text x="1496.0" y="432.1" font-size="10.5" fill="#d4d4d4" text-anchor="end" >-90</text>
<text x="1496.0" y="471.3" font-size="10.5" fill="#d4d4d4" text-anchor="end" >-100</text>
<text x="1496.0" y="510.6" font-size="10.5" fill="#d4d4d4" text-anchor="end" >-110</text>
<text x="1496.0" y="549.8" font-size="10.5" fill="#d4d4d4" text-anchor="end" >-120</text>
<text x="1531.4" y="561.0" font-size="10.5" fill="#d4d4d4" text-anchor="middle" >-150</text>
<text x="1640.8" y="561.0" font-size="10.5" fill="#d4d4d4" text-anchor="middle" >-100</text>
<text x="1750.2" y="561.0" font-size="10.5" fill="#d4d4d4" text-anchor="middle" >-50</text>
<text x="1859.6" y="561.0" font-size="10.5" fill="#d4d4d4" text-anchor="middle" >0</text>
<text x="1969.0" y="561.0" font-size="10.5" fill="#d4d4d4" text-anchor="middle" >50</text>
<text x="2078.4" y="561.0" font-size="10.5" fill="#d4d4d4" text-anchor="middle" >100</text>
<text x="2187.8" y="561.0" font-size="10.5" fill="#d4d4d4" text-anchor="middle" >150</text>
<text x="1860.0" y="579.0" font-size="13.5" fill="#d4d4d4" text-anchor="middle" >MHz</text>
<text x="0" y="0" font-size="13" fill="#d4d4d4" text-anchor="middle" transform="translate(1465,310) rotate(-90)">dBm</text>
<line x1="1531.4" y1="122.4" x2="1738.2" y2="122.4" stroke="#c42828" stroke-width="2.2" />
<line x1="1740.4" y1="110.6" x2="1746.3" y2="110.6" stroke="#c42828" stroke-width="2.2" />
<line x1="1749.5" y1="122.4" x2="1751.3" y2="122.4" stroke="#c42828" stroke-width="2.2" />
<line x1="1519.8" y1="165.6" x2="1529.2" y2="165.6" stroke="#c42828" stroke-width="2.2" />
<line x1="1972.3" y1="122.4" x2="1974.5" y2="122.4" stroke="#c42828" stroke-width="2.2" />
<line x1="1975.1" y1="110.6" x2="1981.0" y2="110.6" stroke="#c42828" stroke-width="2.2" />
<line x1="1983.2" y1="122.4" x2="2190.0" y2="122.4" stroke="#c42828" stroke-width="2.2" />
<line x1="2191.1" y1="165.6" x2="2199.8" y2="165.6" stroke="#c42828" stroke-width="2.2" />
<path d="M1750.2,322.6 L1750.2,206.3 L1750.5,217.4 L1750.8,203.8 L1751.1,222.4 L1751.4,207.3 L1751.7,219.1 L1752.0,208.7 L1752.3,217.1 L1752.6,204.6 L1752.9,225.6 L1753.2,209.3 L1753.5,219.7 L1753.8,209.7 L1754.1,223.0 L1754.4,210.7 L1754.7,222.9 L1755.0,210.1 L1755.3,217.9 L1755.6,204.7 L1755.9,223.9 L1756.2,211.5 L1756.5,223.1 L1756.8,211.2 L1757.1,232.2 L1757.4,209.4 L1757.7,219.7 L1758.0,203.5 L1758.3,226.9 L1758.6,204.5 L1758.9,231.5 L1759.2,208.4 L1759.5,226.1 L1759.8,206.6 L1760.1,218.3 L1760.4,205.5 L1760.7,224.4 L1761.0,206.7 L1761.3,224.2 L1761.6,202.6 L1761.9,225.2 L1762.2,207.0 L1762.5,224.4 L1762.8,205.2 L1763.1,219.0 L1763.4,204.2 L1763.7,226.2 L1764.0,205.6 L1764.3,218.0 L1764.6,207.6 L1764.9,217.7 L1765.2,211.1 L1765.5,227.1 L1765.8,204.2 L1766.1,227.4 L1766.4,205.7 L1766.7,225.1 L1767.0,206.4 L1767.3,227.4 L1767.6,211.0 L1767.9,222.3 L1768.2,203.5 L1768.5,224.2 L1768.8,212.1 L1769.1,220.6 L1769.4,205.1 L1769.7,226.5 L1770.0,209.4 L1770.3,223.9 L1770.6,210.3 L1770.9,225.3 L1771.2,212.4 L1771.5,227.0 L1771.8,204.5 L1772.1,225.5 L1772.4,212.5 L1772.7,222.6 L1773.0,212.4 L1773.3,226.9 L1773.6,211.0 L1773.9,219.8 L1774.2,205.7 L1774.5,226.6 L1774.8,208.8 L1775.1,226.7 L1775.4,204.7 L1775.7,228.0 L1776.0,204.9 L1776.3,222.7 L1776.6,208.5 L1776.9,222.8 L1777.2,210.5 L1777.5,225.0 L1777.8,209.0 L1778.1,224.2 L1778.4,207.8 L1778.7,226.2 L1779.0,208.5 L1779.3,218.1 L1779.6,203.9 L1779.9,224.0 L1780.2,204.7 L1780.5,218.2 L1780.8,205.3 L1781.1,222.0 L1781.4,204.8 L1781.7,220.3 L1782.0,205.7 L1782.3,225.3 L1782.6,209.1 L1782.9,227.4 L1783.2,204.2 L1783.5,225.2 L1783.8,207.2 L1784.1,219.4 L1784.4,208.6 L1784.7,217.2 L1785.0,203.9 L1785.3,235.5 L1785.6,203.9 L1785.9,220.3 L1786.2,205.8 L1786.5,219.2 L1786.8,203.7 L1787.1,220.0 L1787.4,208.0 L1787.7,216.8 L1788.0,210.2 L1788.3,221.8 L1788.6,211.0 L1788.9,225.8 L1789.2,209.7 L1789.5,225.7 L1789.8,207.1 L1790.1,226.8 L1790.4,205.7 L1790.7,225.8 L1791.0,205.9 L1791.3,221.6 L1791.6,205.7 L1791.9,222.6 L1792.2,206.2 L1792.5,220.8 L1792.8,205.1 L1793.1,224.2 L1793.4,201.3 L1793.7,219.2 L1794.0,210.3 L1794.3,226.3 L1794.6,212.5 L1794.9,233.5 L1795.2,211.7 L1795.5,225.5 L1795.8,208.0 L1796.1,225.7 L1796.4,209.7 L1796.7,216.9 L1797.0,204.2 L1797.3,223.5 L1797.6,201.6 L1797.9,224.8 L1798.2,203.7 L1798.5,222.5 L1798.8,210.1 L1799.1,227.3 L1799.4,207.8 L1799.7,223.4 L1800.0,204.6 L1800.3,219.9 L1800.6,203.8 L1800.9,224.2 L1801.2,208.1 L1801.5,217.9 L1801.8,212.5 L1802.1,221.6 L1802.4,207.5 L1802.7,227.0 L1803.0,204.6 L1803.3,218.1 L1803.6,211.6 L1803.9,226.5 L1804.2,203.3 L1804.5,219.9 L1804.8,206.2 L1805.1,224.9 L1805.4,212.0 L1805.7,219.8 L1806.0,212.7 L1806.3,221.3 L1806.6,204.2 L1806.9,226.9 L1807.2,208.1 L1807.5,227.1 L1807.8,209.2 L1808.1,222.6 L1808.4,210.2 L1808.7,223.7 L1809.0,212.0 L1809.3,220.4 L1809.6,212.5 L1809.9,219.9 L1810.2,204.8 L1810.5,226.6 L1810.8,211.8 L1811.1,218.1 L1811.4,206.5 L1811.7,219.4 L1812.0,210.3 L1812.3,222.4 L1812.6,203.8 L1812.9,218.0 L1813.2,211.4 L1813.5,219.3 L1813.8,212.2 L1814.1,225.2 L1814.4,211.7 L1814.7,216.6 L1815.0,211.0 L1815.3,219.3 L1815.6,208.2 L1815.9,224.5 L1816.2,207.6 L1816.5,225.2 L1816.8,209.3 L1817.1,219.4 L1817.4,204.3 L1817.7,223.0 L1818.0,206.6 L1818.3,221.7 L1818.6,211.6 L1818.9,219.3 L1819.2,202.2 L1819.5,224.0 L1819.8,209.5 L1820.1,217.0 L1820.4,209.7 L1820.7,224.7 L1821.0,212.4 L1821.3,219.1 L1821.6,206.0 L1821.9,218.7 L1822.2,209.5 L1822.5,220.9 L1822.8,204.1 L1823.1,220.9 L1823.4,210.2 L1823.7,220.2 L1824.0,205.1 L1824.3,220.8 L1824.6,202.7 L1824.9,220.5 L1825.2,212.3 L1825.5,225.6 L1825.8,203.7 L1826.1,226.7 L1826.4,208.5 L1826.7,225.5 L1827.0,196.4 L1827.3,219.4 L1827.6,206.4 L1827.9,223.4 L1828.2,206.2 L1828.5,224.9 L1828.8,210.3 L1829.1,221.8 L1829.4,206.9 L1829.7,222.0 L1830.0,210.8 L1830.3,225.1 L1830.6,206.3 L1830.9,217.5 L1831.2,205.3 L1831.5,222.7 L1831.8,211.6 L1832.1,223.4 L1832.4,209.9 L1832.7,221.2 L1833.0,210.3 L1833.3,217.9 L1833.6,208.6 L1833.9,218.8 L1834.2,204.7 L1834.5,220.2 L1834.8,208.0 L1835.1,223.8 L1835.4,207.7 L1835.7,230.1 L1836.0,204.4 L1836.3,223.0 L1836.6,211.4 L1836.9,225.1 L1837.2,208.9 L1837.5,220.7 L1837.8,205.7 L1838.1,222.7 L1838.4,209.6 L1838.7,218.8 L1839.0,203.9 L1839.3,222.6 L1839.6,204.8 L1839.9,219.7 L1840.2,206.2 L1840.5,221.2 L1840.8,206.7 L1841.1,229.5 L1841.4,207.2 L1841.7,226.3 L1842.0,203.4 L1842.3,233.9 L1842.6,206.7 L1842.9,219.7 L1843.2,204.3 L1843.5,227.2 L1843.8,212.1 L1844.1,217.2 L1844.4,211.8 L1844.7,218.4 L1845.0,207.1 L1845.3,218.6 L1845.6,208.1 L1845.9,219.3 L1846.2,203.6 L1846.5,217.0 L1846.8,208.9 L1847.1,220.0 L1847.4,207.3 L1847.7,228.7 L1848.0,207.9 L1848.3,225.2 L1848.6,207.7 L1848.9,226.5 L1849.2,203.1 L1849.5,217.5 L1849.8,204.1 L1850.1,220.8 L1850.4,211.3 L1850.7,225.6 L1851.0,207.9 L1851.3,218.4 L1851.6,203.9 L1851.9,218.3 L1852.2,210.9 L1852.5,226.7 L1852.8,208.0 L1853.1,218.6 L1853.4,209.7 L1853.7,225.2 L1854.0,209.2 L1854.3,222.7 L1854.6,204.2 L1854.9,220.9 L1855.2,212.6 L1855.5,225.0 L1855.8,203.8 L1856.1,219.4 L1856.4,208.8 L1856.7,218.4 L1857.0,209.1 L1857.3,226.4 L1857.6,209.4 L1857.9,220.5 L1858.2,205.4 L1858.5,218.8 L1858.8,204.5 L1859.1,225.8 L1859.4,211.5 L1859.7,227.1 L1860.0,208.6 L1860.3,221.5 L1860.6,205.6 L1860.9,222.4 L1861.2,203.8 L1861.5,222.7 L1861.8,205.1 L1862.1,223.7 L1862.4,206.2 L1862.7,226.4 L1863.0,203.3 L1863.3,221.7 L1863.6,205.4 L1863.9,217.0 L1864.2,209.8 L1864.5,219.5 L1864.8,210.7 L1865.1,223.7 L1865.4,209.5 L1865.7,219.2 L1866.0,210.3 L1866.3,220.2 L1866.6,209.2 L1866.9,227.4 L1867.2,209.8 L1867.5,224.6 L1867.8,205.3 L1868.1,226.6 L1868.4,204.3 L1868.7,218.6 L1869.0,209.8 L1869.3,231.7 L1869.6,206.7 L1869.9,236.6 L1870.2,211.9 L1870.5,218.9 L1870.8,211.2 L1871.1,225.7 L1871.4,204.2 L1871.7,218.9 L1872.0,203.5 L1872.3,224.5 L1872.6,212.3 L1872.9,228.3 L1873.2,207.4 L1873.5,224.3 L1873.8,211.4 L1874.1,220.9 L1874.4,210.4 L1874.7,222.0 L1875.0,205.0 L1875.3,225.7 L1875.6,205.9 L1875.9,222.1 L1876.2,204.0 L1876.5,225.2 L1876.8,207.0 L1877.1,217.5 L1877.4,205.2 L1877.7,222.1 L1878.0,205.5 L1878.3,224.9 L1878.6,206.5 L1878.9,225.9 L1879.2,204.9 L1879.5,223.0 L1879.8,211.6 L1880.1,219.9 L1880.4,204.7 L1880.7,220.2 L1881.0,206.3 L1881.3,224.6 L1881.6,204.2 L1881.9,225.3 L1882.2,205.1 L1882.5,218.9 L1882.8,207.0 L1883.1,222.1 L1883.4,204.6 L1883.7,224.7 L1884.0,208.7 L1884.3,219.1 L1884.6,210.5 L1884.9,224.1 L1885.2,206.2 L1885.5,221.2 L1885.8,209.2 L1886.1,221.6 L1886.4,209.6 L1886.7,223.8 L1887.0,207.9 L1887.3,222.6 L1887.6,212.1 L1887.9,222.9 L1888.2,208.1 L1888.5,222.3 L1888.8,205.2 L1889.1,225.0 L1889.4,204.4 L1889.7,225.9 L1890.0,207.2 L1890.3,219.5 L1890.6,212.1 L1890.9,225.4 L1891.2,204.5 L1891.5,223.6 L1891.8,205.4 L1892.1,223.6 L1892.4,207.7 L1892.7,218.0 L1893.0,211.3 L1893.3,219.4 L1893.6,203.3 L1893.9,219.3 L1894.2,207.3 L1894.5,220.6 L1894.8,203.8 L1895.1,225.2 L1895.4,209.1 L1895.7,227.1 L1896.0,204.2 L1896.3,225.1 L1896.6,211.8 L1896.9,226.4 L1897.2,209.6 L1897.5,225.8 L1897.8,208.3 L1898.1,226.3 L1898.4,205.5 L1898.7,217.2 L1899.0,207.9 L1899.3,236.0 L1899.6,207.7 L1899.9,225.8 L1900.2,212.3 L1900.5,230.8 L1900.8,209.7 L1901.1,227.4 L1901.4,206.1 L1901.7,223.5 L1902.0,206.7 L1902.3,225.1 L1902.6,207.2 L1902.9,219.8 L1903.2,208.0 L1903.5,227.3 L1903.8,206.4 L1904.1,223.0 L1904.4,203.6 L1904.7,226.1 L1905.0,203.3 L1905.3,223.3 L1905.6,211.8 L1905.9,223.5 L1906.2,209.7 L1906.5,221.6 L1906.8,198.9 L1907.1,226.6 L1907.4,211.0 L1907.7,219.4 L1908.0,206.3 L1908.3,233.5 L1908.6,203.6 L1908.9,222.9 L1909.2,203.4 L1909.5,226.9 L1909.8,207.1 L1910.1,218.9 L1910.4,203.3 L1910.7,237.5 L1911.0,198.8 L1911.3,219.3 L1911.6,203.7 L1911.9,226.0 L1912.2,209.2 L1912.5,226.8 L1912.8,209.9 L1913.1,223.8 L1913.4,206.2 L1913.7,226.1 L1914.0,206.7 L1914.3,224.0 L1914.6,206.7 L1914.9,221.2 L1915.2,212.2 L1915.5,231.3 L1915.8,209.9 L1916.1,223.3 L1916.4,208.9 L1916.7,226.4 L1917.0,208.9 L1917.3,222.8 L1917.6,207.2 L1917.9,236.2 L1918.2,210.9 L1918.5,219.6 L1918.8,209.7 L1919.1,217.5 L1919.4,205.1 L1919.7,219.2 L1920.0,207.6 L1920.3,224.9 L1920.6,204.1 L1920.9,219.2 L1921.2,211.6 L1921.5,223.1 L1921.8,205.0 L1922.1,222.8 L1922.4,196.8 L1922.7,220.7 L1923.0,210.7 L1923.3,220.4 L1923.6,203.6 L1923.9,221.9 L1924.2,210.6 L1924.5,225.0 L1924.8,204.1 L1925.1,219.2 L1925.4,208.5 L1925.7,227.0 L1926.0,208.9 L1926.3,227.1 L1926.6,209.3 L1926.9,220.9 L1927.2,212.4 L1927.5,217.0 L1927.8,211.8 L1928.1,217.1 L1928.4,209.3 L1928.7,218.2 L1929.0,209.6 L1929.3,224.9 L1929.6,205.7 L1929.9,218.5 L1930.2,204.0 L1930.5,229.7 L1930.8,205.3 L1931.1,226.4 L1931.4,204.2 L1931.7,223.5 L1932.0,211.0 L1932.3,218.2 L1932.6,210.0 L1932.9,226.2 L1933.2,204.7 L1933.5,220.3 L1933.8,206.3 L1934.1,237.9 L1934.4,209.6 L1934.7,219.7 L1935.0,206.7 L1935.3,230.2 L1935.6,206.0 L1935.9,219.8 L1936.2,210.9 L1936.5,216.6 L1936.8,205.0 L1937.1,219.0 L1937.4,205.0 L1937.7,219.8 L1938.0,209.0 L1938.3,218.9 L1938.6,210.9 L1938.9,217.3 L1939.2,203.7 L1939.5,220.3 L1939.8,200.8 L1940.1,221.8 L1940.4,205.0 L1940.7,218.4 L1941.0,203.3 L1941.3,222.3 L1941.6,210.9 L1941.9,224.4 L1942.2,203.8 L1942.5,222.0 L1942.8,200.7 L1943.1,219.1 L1943.4,205.6 L1943.7,217.7 L1944.0,203.4 L1944.3,222.3 L1944.6,211.4 L1944.9,218.0 L1945.2,205.9 L1945.5,218.1 L1945.8,204.6 L1946.1,218.4 L1946.4,206.9 L1946.7,222.4 L1947.0,210.6 L1947.3,220.3 L1947.6,210.8 L1947.9,232.0 L1948.2,212.3 L1948.5,221.2 L1948.8,204.9 L1949.1,223.8 L1949.4,212.4 L1949.7,223.6 L1950.0,206.6 L1950.3,219.5 L1950.6,208.4 L1950.9,219.4 L1951.2,212.2 L1951.5,223.7 L1951.8,212.3 L1952.1,221.7 L1952.4,204.4 L1952.7,221.1 L1953.0,204.1 L1953.3,223.3 L1953.6,205.2 L1953.9,222.6 L1954.2,206.2 L1954.5,222.2 L1954.8,203.4 L1955.1,219.2 L1955.4,205.9 L1955.7,225.1 L1956.0,211.5 L1956.3,220.9 L1956.6,204.3 L1956.9,224.7 L1957.2,206.6 L1957.5,225.9 L1957.8,210.2 L1958.1,221.8 L1958.4,211.9 L1958.7,216.6 L1959.0,207.9 L1959.3,221.2 L1959.6,209.0 L1959.9,221.6 L1960.2,206.9 L1960.5,220.1 L1960.8,208.0 L1961.1,219.9 L1961.4,208.7 L1961.7,220.2 L1962.0,212.3 L1962.3,227.2 L1962.6,208.6 L1962.9,225.1 L1963.2,208.1 L1963.5,220.9 L1963.8,206.6 L1964.1,226.8 L1964.4,207.0 L1964.7,226.3 L1965.0,207.4 L1965.3,220.4 L1965.6,204.9 L1965.9,225.7 L1966.2,211.7 L1966.5,227.5 L1966.8,204.7 L1967.1,222.1 L1967.4,209.2 L1967.7,227.5 L1968.0,207.1 L1968.3,227.8 L1968.6,211.2 L1968.9,218.8 L1969.0,322.6" fill="none" stroke="#eded30" stroke-width="1.1"/>
<path d="M1520.0,273.5 L1525.7,363.8 L1525.9,365.9 L1527.2,363.7 L1528.6,365.1 L1529.9,363.2 L1531.2,367.2 L1532.5,369.0 L1533.8,371.3 L1535.1,371.2 L1536.4,367.1 L1537.7,370.5 L1539.1,369.7 L1540.4,368.4 L1541.7,365.6 L1543.0,363.5 L1544.3,365.1 L1545.6,364.5 L1546.9,369.9 L1548.2,370.9 L1549.6,366.5 L1550.9,369.3 L1552.2,366.4 L1553.5,367.8 L1554.8,367.9 L1556.1,366.3 L1557.4,366.8 L1558.7,361.5 L1560.1,363.8 L1561.4,365.8 L1562.7,365.8 L1564.0,366.6 L1565.3,368.7 L1566.6,363.1 L1567.9,364.3 L1569.3,360.9 L1570.6,363.1 L1571.9,361.1 L1573.2,363.0 L1574.5,364.2 L1575.8,359.0 L1577.1,360.0 L1578.4,363.8 L1579.8,360.4 L1581.1,360.7 L1582.4,363.3 L1583.7,360.4 L1585.0,357.0 L1586.3,358.8 L1587.6,355.2 L1588.9,359.2 L1590.3,358.3 L1591.6,356.7 L1592.9,360.3 L1594.2,360.1 L1595.5,356.7 L1596.8,358.8 L1598.1,356.1 L1599.4,358.4 L1600.8,357.7 L1602.1,355.5 L1603.4,355.9 L1604.7,350.8 L1606.0,355.2 L1607.3,354.0 L1608.6,357.3 L1609.9,355.0 L1611.3,355.8 L1612.6,355.2 L1613.9,356.4 L1615.2,354.9 L1616.5,349.4 L1617.8,351.4 L1619.1,351.6 L1620.5,352.0 L1621.8,351.7 L1623.1,352.6 L1624.4,354.4 L1625.7,350.7 L1627.0,352.6 L1628.3,353.1 L1629.6,348.7 L1631.0,351.5 L1632.3,349.4 L1633.6,345.1 L1634.9,349.3 L1636.2,347.5 L1637.5,345.5 L1638.8,346.2 L1640.1,350.7 L1641.5,349.6 L1642.8,346.8 L1644.1,348.1 L1645.4,343.2 L1646.7,346.7 L1648.0,341.0 L1649.3,343.1 L1650.6,344.6 L1652.0,343.3 L1653.3,345.7 L1654.6,342.5 L1655.9,345.5 L1657.2,341.4 L1658.5,342.7 L1659.8,343.1 L1661.1,342.6 L1662.5,339.1 L1663.8,340.7 L1665.1,336.0 L1666.4,340.7 L1667.7,338.5 L1669.0,338.8 L1670.3,340.9 L1671.7,337.8 L1673.0,339.9 L1674.3,337.5 L1675.6,337.0 L1676.9,337.4 L1678.2,335.7 L1679.5,336.9 L1680.8,335.9 L1682.2,331.8 L1683.5,335.5 L1684.8,333.8 L1686.1,337.7 L1687.4,334.9 L1688.7,335.7 L1690.0,334.0 L1691.3,334.2 L1692.7,334.5 L1694.0,332.0 L1695.3,332.0 L1696.6,332.5 L1697.9,329.1 L1699.2,332.3 L1700.5,332.0 L1701.8,329.1 L1703.2,329.9 L1704.5,328.6 L1705.8,327.8 L1707.1,331.3 L1708.4,329.3 L1709.7,330.1 L1711.0,325.7 L1712.3,325.8 L1713.7,328.2 L1715.0,328.4 L1716.3,327.4 L1717.6,327.3 L1718.9,329.9 L1720.2,325.5 L1721.5,327.6 L1722.8,324.7 L1724.2,326.6 L1725.5,326.4 L1726.8,321.2 L1728.1,322.5 L1729.4,323.3 L1730.7,328.2 L1732.0,328.8 L1733.4,328.2 L1734.7,327.7 L1736.0,326.4 L1737.3,325.0 L1738.6,326.3 L1739.9,323.8 L1741.2,321.5 L1742.5,324.5 L1743.9,320.8 L1745.2,323.2 L1746.5,323.0 L1747.8,326.3 L1749.1,325.3 L1750.2,204.8" fill="none" stroke="#eded30" stroke-width="1.3"/>
<path d="M2199.2,273.5 L2193.5,363.8 L2193.3,361.2 L2192.0,362.6 L2190.6,364.4 L2189.3,359.7 L2188.0,361.4 L2186.7,365.7 L2185.4,368.0 L2184.1,362.8 L2182.8,363.4 L2181.5,365.7 L2180.1,363.5 L2178.8,364.3 L2177.5,360.8 L2176.2,365.6 L2174.9,361.9 L2173.6,362.9 L2172.3,366.2 L2171.0,361.1 L2169.6,362.0 L2168.3,359.7 L2167.0,359.9 L2165.7,364.5 L2164.4,366.3 L2163.1,360.8 L2161.8,363.0 L2160.5,358.4 L2159.1,358.8 L2157.8,358.2 L2156.5,358.1 L2155.2,360.3 L2153.9,362.1 L2152.6,364.5 L2151.3,359.5 L2149.9,359.8 L2148.6,358.1 L2147.3,355.1 L2146.0,360.6 L2144.7,357.6 L2143.4,362.7 L2142.1,358.4 L2140.8,356.8 L2139.4,358.7 L2138.1,355.6 L2136.8,352.4 L2135.5,354.8 L2134.2,356.3 L2132.9,358.8 L2131.6,359.9 L2130.3,357.0 L2128.9,355.1 L2127.6,355.1 L2126.3,353.9 L2125.0,355.3 L2123.7,352.5 L2122.4,353.5 L2121.1,356.1 L2119.8,355.1 L2118.4,351.9 L2117.1,354.9 L2115.8,351.2 L2114.5,355.2 L2113.2,356.3 L2111.9,353.4 L2110.6,358.0 L2109.3,354.5 L2107.9,354.4 L2106.6,350.0 L2105.3,351.0 L2104.0,349.9 L2102.7,354.4 L2101.4,352.0 L2100.1,352.5 L2098.7,352.6 L2097.4,349.3 L2096.1,347.5 L2094.8,351.4 L2093.5,350.5 L2092.2,351.0 L2090.9,352.8 L2089.6,353.8 L2088.2,351.7 L2086.9,350.9 L2085.6,346.3 L2084.3,347.2 L2083.0,349.5 L2081.7,349.0 L2080.4,349.0 L2079.1,349.9 L2077.7,350.3 L2076.4,349.4 L2075.1,348.3 L2073.8,341.2 L2072.5,342.8 L2071.2,347.6 L2069.9,344.4 L2068.6,342.9 L2067.2,344.7 L2065.9,346.1 L2064.6,342.1 L2063.3,341.5 L2062.0,343.0 L2060.7,341.5 L2059.4,345.6 L2058.1,340.0 L2056.7,341.0 L2055.4,339.7 L2054.1,336.2 L2052.8,337.0 L2051.5,339.5 L2050.2,340.2 L2048.9,341.6 L2047.5,342.6 L2046.2,337.2 L2044.9,335.4 L2043.6,337.3 L2042.3,337.0 L2041.0,334.0 L2039.7,333.3 L2038.4,333.6 L2037.0,338.7 L2035.7,334.2 L2034.4,332.5 L2033.1,331.6 L2031.8,333.2 L2030.5,334.0 L2029.2,330.7 L2027.9,334.7 L2026.5,334.8 L2025.2,333.2 L2023.9,333.0 L2022.6,328.7 L2021.3,331.4 L2020.0,332.5 L2018.7,329.8 L2017.4,330.3 L2016.0,329.5 L2014.7,329.8 L2013.4,327.3 L2012.1,328.7 L2010.8,330.5 L2009.5,330.4 L2008.2,333.2 L2006.9,333.2 L2005.5,331.9 L2004.2,334.7 L2002.9,329.8 L2001.6,331.6 L2000.3,328.8 L1999.0,325.3 L1997.7,331.4 L1996.4,332.7 L1995.0,330.7 L1993.7,332.0 L1992.4,327.5 L1991.1,330.6 L1989.8,324.4 L1988.5,324.2 L1987.2,325.4 L1985.8,328.7 L1984.5,330.4 L1983.2,327.9 L1981.9,327.9 L1980.6,327.2 L1979.3,326.7 L1978.0,326.0 L1976.7,325.2 L1975.3,325.3 L1974.0,325.6 L1972.7,330.2 L1971.4,328.5 L1970.1,326.4 L1969.0,204.8" fill="none" stroke="#eded30" stroke-width="1.3"/>
<path d="M1517.8,318.6 L1525.7,416.8 L1526.1,418.1 L1526.5,436.2 L1526.8,413.5 L1527.1,445.9 L1527.4,408.6 L1527.7,441.7 L1528.0,413.5 L1528.3,438.2 L1528.6,423.6 L1528.9,450.1 L1529.2,419.7 L1529.5,440.6 L1529.8,422.5 L1530.1,454.2 L1530.4,420.8 L1530.7,437.3 L1531.0,421.0 L1531.4,440.1 L1531.7,414.6 L1532.0,443.8 L1532.3,415.0 L1532.6,455.2 L1532.9,418.9 L1533.2,440.3 L1533.5,412.2 L1533.8,447.5 L1534.1,420.7 L1534.4,438.6 L1534.7,413.3 L1535.0,443.4 L1535.3,419.0 L1535.6,442.8 L1536.0,414.6 L1536.3,434.1 L1536.6,416.6 L1536.9,443.7 L1537.2,420.4 L1537.5,440.2 L1537.8,421.2 L1538.1,439.4 L1538.4,418.1 L1538.7,439.1 L1539.0,408.4 L1539.3,434.8 L1539.6,411.5 L1539.9,442.0 L1540.2,416.8 L1540.5,437.3 L1540.9,421.1 L1541.2,442.7 L1541.5,419.9 L1541.8,439.1 L1542.1,421.6 L1542.4,432.9 L1542.7,421.1 L1543.0,435.5 L1543.3,418.6 L1543.6,442.9 L1543.9,415.2 L1544.2,440.8 L1544.5,417.3 L1544.8,441.8 L1545.1,417.8 L1545.4,437.7 L1545.8,415.0 L1546.1,435.7 L1546.4,415.7 L1546.7,434.5 L1547.0,420.8 L1547.3,436.7 L1547.6,416.0 L1547.9,435.1 L1548.2,410.4 L1548.5,440.8 L1548.8,414.2 L1549.1,440.0 L1549.4,419.7 L1549.7,434.4 L1550.0,418.6 L1550.3,433.7 L1550.7,413.6 L1551.0,433.4 L1551.3,405.6 L1551.6,440.7 L1551.9,418.0 L1552.2,438.0 L1552.5,416.4 L1552.8,435.4 L1553.1,419.2 L1553.4,437.7 L1553.7,413.2 L1554.0,430.9 L1554.3,402.8 L1554.6,438.6 L1554.9,417.8 L1555.2,431.5 L1555.6,413.5 L1555.9,437.6 L1556.2,411.2 L1556.5,438.7 L1556.8,410.8 L1557.1,433.3 L1557.4,413.0 L1557.7,437.3 L1558.0,408.2 L1558.3,433.1 L1558.6,418.3 L1558.9,431.9 L1559.2,417.2 L1559.5,439.9 L1559.8,410.2 L1560.2,435.2 L1560.5,409.9 L1560.8,451.0 L1561.1,417.8 L1561.4,447.8 L1561.7,413.9 L1562.0,436.3 L1562.3,415.5 L1562.6,431.5 L1562.9,415.0 L1563.2,435.4 L1563.5,408.6 L1563.8,438.1 L1564.1,412.7 L1564.4,436.5 L1564.7,411.6 L1565.1,438.6 L1565.4,408.4 L1565.7,439.7 L1566.0,416.5 L1566.3,438.7 L1566.6,416.6 L1566.9,429.6 L1567.2,409.7 L1567.5,428.8 L1567.8,404.9 L1568.1,430.9 L1568.4,417.1 L1568.7,437.9 L1569.0,415.7 L1569.3,435.7 L1569.6,411.6 L1570.0,433.5 L1570.3,414.7 L1570.6,436.0 L1570.9,413.6 L1571.2,433.5 L1571.5,406.1 L1571.8,434.9 L1572.1,409.1 L1572.4,435.6 L1572.7,412.0 L1573.0,431.8 L1573.3,399.6 L1573.6,437.6 L1573.9,412.3 L1574.2,428.6 L1574.5,399.5 L1574.9,430.8 L1575.2,412.8 L1575.5,435.4 L1575.8,409.6 L1576.1,434.0 L1576.4,408.2 L1576.7,433.7 L1577.0,409.0 L1577.3,433.6 L1577.6,410.6 L1577.9,432.0 L1578.2,405.5 L1578.5,432.5 L1578.8,413.7 L1579.1,433.6 L1579.4,402.2 L1579.8,435.6 L1580.1,413.7 L1580.4,430.3 L1580.7,410.3 L1581.0,437.2 L1581.3,410.0 L1581.6,427.8 L1581.9,409.4 L1582.2,429.8 L1582.5,412.8 L1582.8,427.9 L1583.1,411.4 L1583.4,426.9 L1583.7,412.6 L1584.0,432.5 L1584.3,409.8 L1584.7,428.9 L1585.0,405.7 L1585.3,431.9 L1585.6,403.8 L1585.9,432.8 L1586.2,406.1 L1586.5,430.8 L1586.8,414.0 L1587.1,430.3 L1587.4,409.0 L1587.7,430.5 L1588.0,406.7 L1588.3,425.5 L1588.6,405.5 L1588.9,440.2 L1589.3,412.8 L1589.6,441.7 L1589.9,406.0 L1590.2,432.3 L1590.5,402.7 L1590.8,426.2 L1591.1,413.5 L1591.4,427.4 L1591.7,404.1 L1592.0,433.8 L1592.3,403.9 L1592.6,427.2 L1592.9,407.4 L1593.2,429.6 L1593.5,404.4 L1593.8,435.2 L1594.2,407.2 L1594.5,427.6 L1594.8,409.8 L1595.1,430.4 L1595.4,408.0 L1595.7,428.6 L1596.0,397.5 L1596.3,425.7 L1596.6,403.9 L1596.9,431.0 L1597.2,403.4 L1597.5,427.3 L1597.8,403.9 L1598.1,430.7 L1598.4,404.8 L1598.7,444.1 L1599.1,409.1 L1599.4,426.7 L1599.7,402.2 L1600.0,424.8 L1600.3,404.0 L1600.6,430.1 L1600.9,411.0 L1601.2,427.6 L1601.5,402.8 L1601.8,433.8 L1602.1,408.6 L1602.4,428.2 L1602.7,406.3 L1603.0,430.8 L1603.3,408.6 L1603.6,425.0 L1604.0,404.9 L1604.3,432.8 L1604.6,407.7 L1604.9,430.5 L1605.2,402.5 L1605.5,423.3 L1605.8,404.6 L1606.1,437.9 L1606.4,409.6 L1606.7,426.1 L1607.0,409.1 L1607.3,431.2 L1607.6,409.2 L1607.9,423.1 L1608.2,409.5 L1608.5,427.6 L1608.9,408.5 L1609.2,423.0 L1609.5,405.0 L1609.8,431.9 L1610.1,404.2 L1610.4,429.6 L1610.7,410.0 L1611.0,424.5 L1611.3,403.9 L1611.6,429.8 L1611.9,407.5 L1612.2,421.6 L1612.5,401.1 L1612.8,426.1 L1613.1,399.6 L1613.4,421.9 L1613.8,402.4 L1614.1,422.3 L1614.4,406.1 L1614.7,429.4 L1615.0,401.1 L1615.3,427.6 L1615.6,400.3 L1615.9,428.4 L1616.2,398.8 L1616.5,421.9 L1616.8,399.4 L1617.1,429.1 L1617.4,400.2 L1617.7,423.5 L1618.0,398.8 L1618.4,428.7 L1618.7,406.5 L1619.0,422.6 L1619.3,401.4 L1619.6,428.5 L1619.9,398.5 L1620.2,420.7 L1620.5,405.0 L1620.8,436.1 L1621.1,408.5 L1621.4,424.2 L1621.7,404.9 L1622.0,428.8 L1622.3,407.5 L1622.6,424.2 L1622.9,407.0 L1623.3,428.3 L1623.6,397.7 L1623.9,429.0 L1624.2,403.8 L1624.5,424.6 L1624.8,398.9 L1625.1,419.0 L1625.4,402.9 L1625.7,431.4 L1626.0,398.4 L1626.3,429.0 L1626.6,406.9 L1626.9,429.2 L1627.2,400.7 L1627.5,426.0 L1627.8,403.5 L1628.2,427.6 L1628.5,402.5 L1628.8,426.4 L1629.1,403.8 L1629.4,428.1 L1629.7,397.0 L1630.0,426.4 L1630.3,398.7 L1630.6,422.7 L1630.9,398.2 L1631.2,428.5 L1631.5,403.9 L1631.8,426.9 L1632.1,405.3 L1632.4,419.5 L1632.7,400.4 L1633.1,421.9 L1633.4,404.6 L1633.7,419.7 L1634.0,405.3 L1634.3,421.7 L1634.6,404.2 L1634.9,426.6 L1635.2,402.9 L1635.5,422.4 L1635.8,397.9 L1636.1,427.2 L1636.4,399.2 L1636.7,417.5 L1637.0,402.1 L1637.3,428.2 L1637.6,397.6 L1638.0,430.5 L1638.3,398.7 L1638.6,424.4 L1638.9,395.4 L1639.2,421.0 L1639.5,403.6 L1639.8,422.3 L1640.1,404.0 L1640.4,421.0 L1640.7,398.1 L1641.0,422.7 L1641.3,396.6 L1641.6,423.6 L1641.9,395.3 L1642.2,425.2 L1642.6,403.7 L1642.9,422.8 L1643.2,398.4 L1643.5,418.3 L1643.8,397.5 L1644.1,419.8 L1644.4,395.6 L1644.7,422.7 L1645.0,404.0 L1645.3,437.5 L1645.6,403.4 L1645.9,419.3 L1646.2,402.1 L1646.5,424.7 L1646.8,404.1 L1647.1,420.9 L1647.5,397.4 L1647.8,419.6 L1648.1,401.7 L1648.4,424.0 L1648.7,388.6 L1649.0,416.5 L1649.3,396.2 L1649.6,417.0 L1649.9,401.8 L1650.2,419.7 L1650.5,401.6 L1650.8,422.4 L1651.1,393.3 L1651.4,425.8 L1651.7,403.4 L1652.0,421.5 L1652.4,401.7 L1652.7,420.5 L1653.0,399.5 L1653.3,421.0 L1653.6,401.6 L1653.9,425.1 L1654.2,397.9 L1654.5,415.3 L1654.8,400.8 L1655.1,424.0 L1655.4,392.2 L1655.7,418.1 L1656.0,399.3 L1656.3,420.3 L1656.6,393.7 L1656.9,414.2 L1657.3,401.9 L1657.6,423.3 L1657.9,400.3 L1658.2,427.0 L1658.5,401.1 L1658.8,419.8 L1659.1,390.4 L1659.4,413.9 L1659.7,394.9 L1660.0,420.4 L1660.3,400.6 L1660.6,413.8 L1660.9,399.6 L1661.2,422.1 L1661.5,401.5 L1661.8,422.5 L1662.2,399.2 L1662.5,420.2 L1662.8,391.7 L1663.1,412.9 L1663.4,391.0 L1663.7,421.5 L1664.0,400.4 L1664.3,435.9 L1664.6,395.4 L1664.9,419.2 L1665.2,395.2 L1665.5,415.5 L1665.8,384.9 L1666.1,421.1 L1666.4,394.0 L1666.7,413.3 L1667.1,397.2 L1667.4,421.3 L1667.7,396.9 L1668.0,413.5 L1668.3,391.7 L1668.6,413.0 L1668.9,395.0 L1669.2,418.4 L1669.5,392.6 L1669.8,420.8 L1670.1,393.1 L1670.4,421.1 L1670.7,395.6 L1671.0,414.7 L1671.3,399.3 L1671.7,418.5 L1672.0,391.1 L1672.3,414.2 L1672.6,399.9 L1672.9,421.2 L1673.2,391.5 L1673.5,429.8 L1673.8,396.5 L1674.1,416.8 L1674.4,394.0 L1674.7,421.1 L1675.0,392.2 L1675.3,413.0 L1675.6,399.5 L1675.9,421.5 L1676.2,392.0 L1676.6,418.8 L1676.9,399.1 L1677.2,413.2 L1677.5,392.8 L1677.8,417.9 L1678.1,395.0 L1678.4,419.5 L1678.7,388.5 L1679.0,418.5 L1679.3,395.7 L1679.6,414.9 L1679.9,388.7 L1680.2,410.2 L1680.5,389.4 L1680.8,415.8 L1681.1,388.8 L1681.5,416.1 L1681.8,397.1 L1682.1,413.8 L1682.4,395.9 L1682.7,418.8 L1683.0,394.4 L1683.3,418.0 L1683.6,392.6 L1683.9,418.0 L1684.2,389.8 L1684.5,411.6 L1684.8,391.1 L1685.1,409.6 L1685.4,391.1 L1685.7,410.2 L1686.0,396.9 L1686.4,410.8 L1686.7,393.0 L1687.0,413.9 L1687.3,396.9 L1687.6,414.8 L1687.9,388.2 L1688.2,414.3 L1688.5,388.0 L1688.8,411.4 L1689.1,384.9 L1689.4,411.9 L1689.7,393.3 L1690.0,413.6 L1690.3,390.0 L1690.6,413.3 L1690.9,394.5 L1691.3,415.2 L1691.6,386.6 L1691.9,412.0 L1692.2,394.4 L1692.5,408.8 L1692.8,392.0 L1693.1,416.0 L1693.4,392.3 L1693.7,418.1 L1694.0,391.0 L1694.3,418.5 L1694.6,387.3 L1694.9,412.5 L1695.2,392.9 L1695.5,420.6 L1695.9,394.5 L1696.2,413.9 L1696.5,390.0 L1696.8,409.8 L1697.1,394.5 L1697.4,413.4 L1697.7,393.4 L1698.0,411.9 L1698.3,388.6 L1698.6,409.8 L1698.9,395.2 L1699.2,406.9 L1699.5,385.1 L1699.8,412.5 L1700.1,388.4 L1700.4,409.2 L1700.8,386.7 L1701.1,422.6 L1701.4,389.1 L1701.7,409.1 L1702.0,389.5 L1702.3,414.4 L1702.6,387.8 L1702.9,411.4 L1703.2,388.0 L1703.5,414.7 L1703.8,384.5 L1704.1,416.5 L1704.4,386.8 L1704.7,414.3 L1705.0,392.4 L1705.3,407.2 L1705.7,393.8 L1706.0,412.0 L1706.3,389.8 L1706.6,405.7 L1706.9,390.4 L1707.2,414.6 L1707.5,386.6 L1707.8,413.7 L1708.1,385.3 L1708.4,414.8 L1708.7,394.0 L1709.0,408.2 L1709.3,392.2 L1709.6,407.5 L1709.9,382.0 L1710.2,415.2 L1710.6,390.2 L1710.9,409.4 L1711.2,393.2 L1711.5,405.7 L1711.8,390.8 L1712.1,408.4 L1712.4,383.4 L1712.7,406.2 L1713.0,385.6 L1713.3,422.4 L1713.6,391.3 L1713.9,413.0 L1714.2,386.0 L1714.5,406.3 L1714.8,386.2 L1715.1,408.8 L1715.5,392.7 L1715.8,407.2 L1716.1,386.2 L1716.4,407.3 L1716.7,391.1 L1717.0,412.9 L1717.3,384.0 L1717.6,421.2 L1717.9,386.6 L1718.2,405.3 L1718.5,387.5 L1718.8,409.1 L1719.1,384.6 L1719.4,410.6 L1719.7,387.1 L1720.0,405.7 L1720.4,384.4 L1720.7,408.1 L1721.0,385.4 L1721.3,410.1 L1721.6,381.3 L1721.9,408.1 L1722.2,391.2 L1722.5,413.9 L1722.8,390.8 L1723.1,406.0 L1723.4,389.0 L1723.7,408.5 L1724.0,389.7 L1724.3,406.3 L1724.6,380.9 L1725.0,410.6 L1725.3,386.3 L1725.6,405.6 L1725.9,383.3 L1726.2,425.6 L1726.5,387.5 L1726.8,407.3 L1727.1,381.8 L1727.4,410.3 L1727.7,386.5 L1728.0,420.3 L1728.3,384.3 L1728.6,405.5 L1728.9,387.9 L1729.2,405.7 L1729.5,388.2 L1729.9,408.7 L1730.2,388.0 L1730.5,412.5 L1730.8,381.6 L1731.1,405.7 L1731.4,384.5 L1731.7,405.2 L1732.0,380.7 L1732.3,409.5 L1732.6,389.7 L1732.9,406.2 L1733.2,381.5 L1733.5,404.8 L1733.8,378.6 L1734.1,404.5 L1734.4,381.8 L1734.8,405.3 L1735.1,386.4 L1735.4,405.9 L1735.7,386.3 L1736.0,401.8 L1736.3,383.9 L1736.6,410.2 L1736.9,385.6 L1737.2,408.1 L1737.5,389.0 L1737.8,408.3 L1738.1,383.6 L1738.4,404.2 L1738.7,380.4 L1739.0,411.1 L1739.3,381.3 L1739.7,403.4 L1740.0,387.0 L1740.3,407.3 L1740.6,377.9 L1740.9,401.9 L1741.2,380.5 L1741.5,409.9 L1741.8,383.2 L1742.1,410.2 L1742.4,382.5 L1742.7,408.4 L1743.0,385.7 L1743.3,405.1 L1743.6,388.4 L1743.9,407.6 L1744.2,382.6 L1744.6,409.2 L1744.9,380.3 L1745.2,407.0 L1745.5,368.7 L1745.8,405.0 L1746.1,379.3 L1746.4,404.0 L1746.7,384.2 L1747.0,401.0 L1747.3,381.0 L1747.6,404.2 L1747.9,384.2 L1748.2,403.9 L1748.5,382.3 L1748.8,400.7 L1749.1,378.8 L1750.0,322.6" fill="none" stroke="#eded30" stroke-width="1.1"/>
<path d="M2201.4,318.6 L2193.5,416.8 L2193.1,419.6 L2192.7,445.8 L2192.4,425.8 L2192.1,460.6 L2191.8,421.9 L2191.5,451.0 L2191.2,426.5 L2190.9,448.8 L2190.6,425.6 L2190.3,447.0 L2190.0,419.1 L2189.7,456.5 L2189.4,417.4 L2189.1,445.5 L2188.8,419.3 L2188.5,450.3 L2188.2,425.4 L2187.8,448.6 L2187.5,424.6 L2187.2,445.7 L2186.9,419.7 L2186.6,439.9 L2186.3,419.7 L2186.0,440.1 L2185.7,420.5 L2185.4,445.4 L2185.1,418.1 L2184.8,447.4 L2184.5,427.1 L2184.2,445.6 L2183.9,427.4 L2183.6,446.7 L2183.2,426.1 L2182.9,446.1 L2182.6,416.9 L2182.3,441.4 L2182.0,416.6 L2181.7,440.4 L2181.4,414.1 L2181.1,452.7 L2180.8,418.6 L2180.5,447.8 L2180.2,422.7 L2179.9,448.1 L2179.6,425.0 L2179.3,437.9 L2179.0,413.3 L2178.7,442.3 L2178.3,418.6 L2178.0,448.1 L2177.7,423.0 L2177.4,447.4 L2177.1,417.3 L2176.8,440.8 L2176.5,419.5 L2176.2,442.5 L2175.9,425.2 L2175.6,438.6 L2175.3,415.9 L2175.0,459.3 L2174.7,424.6 L2174.4,446.3 L2174.1,422.8 L2173.8,437.6 L2173.4,423.1 L2173.1,440.5 L2172.8,414.4 L2172.5,445.1 L2172.2,415.7 L2171.9,453.1 L2171.6,423.4 L2171.3,446.8 L2171.0,423.4 L2170.7,438.5 L2170.4,419.5 L2170.1,452.8 L2169.8,419.4 L2169.5,439.3 L2169.2,422.9 L2168.9,437.4 L2168.5,422.5 L2168.2,443.9 L2167.9,421.7 L2167.6,445.7 L2167.3,418.2 L2167.0,436.0 L2166.7,416.4 L2166.4,439.9 L2166.1,413.6 L2165.8,440.7 L2165.5,422.1 L2165.2,437.4 L2164.9,415.1 L2164.6,444.1 L2164.3,412.5 L2164.0,444.8 L2163.6,417.7 L2163.3,435.4 L2163.0,416.8 L2162.7,437.9 L2162.4,416.9 L2162.1,437.7 L2161.8,412.0 L2161.5,443.0 L2161.2,420.3 L2160.9,442.7 L2160.6,412.2 L2160.3,441.9 L2160.0,417.6 L2159.7,446.0 L2159.4,412.2 L2159.0,433.2 L2158.7,412.8 L2158.4,435.8 L2158.1,418.3 L2157.8,453.4 L2157.5,410.9 L2157.2,435.6 L2156.9,414.3 L2156.6,443.4 L2156.3,419.6 L2156.0,436.3 L2155.7,419.7 L2155.4,438.6 L2155.1,415.6 L2154.8,436.6 L2154.5,420.3 L2154.1,440.2 L2153.8,418.2 L2153.5,436.0 L2153.2,418.2 L2152.9,436.6 L2152.6,413.9 L2152.3,432.3 L2152.0,413.3 L2151.7,436.9 L2151.4,418.5 L2151.1,441.2 L2150.8,417.1 L2150.5,440.3 L2150.2,408.1 L2149.9,446.2 L2149.6,411.9 L2149.2,438.1 L2148.9,418.7 L2148.6,433.0 L2148.3,418.6 L2148.0,434.1 L2147.7,416.9 L2147.4,435.0 L2147.1,413.3 L2146.8,431.3 L2146.5,417.0 L2146.2,438.9 L2145.9,410.0 L2145.6,435.2 L2145.3,411.1 L2145.0,430.2 L2144.7,417.4 L2144.3,436.0 L2144.0,410.9 L2143.7,432.5 L2143.4,418.3 L2143.1,438.8 L2142.8,408.7 L2142.5,433.3 L2142.2,417.6 L2141.9,440.0 L2141.6,409.3 L2141.3,439.5 L2141.0,411.6 L2140.7,434.0 L2140.4,412.1 L2140.1,431.6 L2139.8,412.9 L2139.4,434.3 L2139.1,409.7 L2138.8,431.0 L2138.5,413.1 L2138.2,436.0 L2137.9,409.1 L2137.6,432.0 L2137.3,408.7 L2137.0,430.5 L2136.7,409.4 L2136.4,436.4 L2136.1,416.3 L2135.8,435.0 L2135.5,414.0 L2135.2,436.2 L2134.9,412.3 L2134.5,435.1 L2134.2,406.7 L2133.9,430.6 L2133.6,414.4 L2133.3,436.4 L2133.0,406.2 L2132.7,435.4 L2132.4,405.9 L2132.1,433.3 L2131.8,411.4 L2131.5,430.7 L2131.2,408.1 L2130.9,426.7 L2130.6,412.2 L2130.3,436.3 L2129.9,409.0 L2129.6,429.8 L2129.3,409.5 L2129.0,429.5 L2128.7,405.1 L2128.4,428.6 L2128.1,408.4 L2127.8,434.5 L2127.5,406.2 L2127.2,426.2 L2126.9,407.7 L2126.6,431.5 L2126.3,413.3 L2126.0,430.2 L2125.7,409.2 L2125.4,432.0 L2125.0,409.4 L2124.7,432.8 L2124.4,412.2 L2124.1,429.0 L2123.8,404.2 L2123.5,431.6 L2123.2,412.8 L2122.9,425.9 L2122.6,410.0 L2122.3,428.2 L2122.0,409.5 L2121.7,431.7 L2121.4,408.9 L2121.1,429.3 L2120.8,403.0 L2120.5,434.7 L2120.1,407.6 L2119.8,425.9 L2119.5,410.1 L2119.2,430.6 L2118.9,409.3 L2118.6,429.0 L2118.3,409.2 L2118.0,430.3 L2117.7,410.0 L2117.4,429.6 L2117.1,407.4 L2116.8,440.1 L2116.5,411.9 L2116.2,431.1 L2115.9,410.1 L2115.6,423.2 L2115.2,402.8 L2114.9,432.3 L2114.6,404.8 L2114.3,433.2 L2114.0,410.3 L2113.7,425.7 L2113.4,402.0 L2113.1,431.2 L2112.8,402.5 L2112.5,423.3 L2112.2,404.5 L2111.9,429.9 L2111.6,406.1 L2111.3,425.1 L2111.0,408.3 L2110.7,424.4 L2110.3,406.8 L2110.0,422.1 L2109.7,401.1 L2109.4,425.4 L2109.1,406.1 L2108.8,431.6 L2108.5,401.8 L2108.2,425.2 L2107.9,407.3 L2107.6,425.4 L2107.3,397.5 L2107.0,423.9 L2106.7,403.4 L2106.4,429.5 L2106.1,401.2 L2105.8,425.6 L2105.4,407.7 L2105.1,426.3 L2104.8,400.1 L2104.5,422.6 L2104.2,404.3 L2103.9,425.9 L2103.6,399.1 L2103.3,428.7 L2103.0,406.8 L2102.7,428.1 L2102.4,402.0 L2102.1,420.7 L2101.8,407.3 L2101.5,421.0 L2101.2,408.3 L2100.8,430.2 L2100.5,405.9 L2100.2,423.7 L2099.9,407.3 L2099.6,434.0 L2099.3,399.8 L2099.0,419.7 L2098.7,398.0 L2098.4,420.0 L2098.1,403.3 L2097.8,428.2 L2097.5,403.5 L2097.2,426.2 L2096.9,401.6 L2096.6,434.1 L2096.3,398.1 L2095.9,425.5 L2095.6,402.4 L2095.3,426.4 L2095.0,400.4 L2094.7,418.6 L2094.4,400.8 L2094.1,425.6 L2093.8,403.8 L2093.5,419.4 L2093.2,389.7 L2092.9,422.0 L2092.6,401.4 L2092.3,423.6 L2092.0,402.6 L2091.7,428.4 L2091.4,397.5 L2091.0,421.3 L2090.7,401.6 L2090.4,422.3 L2090.1,404.7 L2089.8,427.6 L2089.5,400.1 L2089.2,422.1 L2088.9,399.7 L2088.6,432.0 L2088.3,394.5 L2088.0,418.3 L2087.7,404.2 L2087.4,417.8 L2087.1,404.2 L2086.8,419.4 L2086.5,405.1 L2086.1,426.9 L2085.8,396.0 L2085.5,424.0 L2085.2,402.3 L2084.9,421.1 L2084.6,401.9 L2084.3,417.1 L2084.0,402.6 L2083.7,421.5 L2083.4,400.4 L2083.1,426.7 L2082.8,394.5 L2082.5,422.5 L2082.2,397.6 L2081.9,416.5 L2081.6,401.7 L2081.2,420.6 L2080.9,397.2 L2080.6,422.5 L2080.3,402.2 L2080.0,419.9 L2079.7,396.0 L2079.4,421.4 L2079.1,393.6 L2078.8,425.9 L2078.5,401.3 L2078.2,425.2 L2077.9,400.8 L2077.6,418.1 L2077.3,394.4 L2077.0,416.5 L2076.6,401.2 L2076.3,416.2 L2076.0,394.1 L2075.7,417.6 L2075.4,403.1 L2075.1,414.3 L2074.8,403.1 L2074.5,418.4 L2074.2,395.2 L2073.9,416.6 L2073.6,398.8 L2073.3,415.2 L2073.0,394.9 L2072.7,419.7 L2072.4,396.7 L2072.1,415.7 L2071.7,393.9 L2071.4,423.6 L2071.1,398.8 L2070.8,414.4 L2070.5,392.0 L2070.2,423.5 L2069.9,397.0 L2069.6,414.2 L2069.3,399.3 L2069.0,414.3 L2068.7,398.2 L2068.4,417.7 L2068.1,399.8 L2067.8,413.5 L2067.5,396.3 L2067.2,417.1 L2066.8,395.0 L2066.5,417.8 L2066.2,395.8 L2065.9,423.2 L2065.6,401.1 L2065.3,416.8 L2065.0,390.5 L2064.7,424.4 L2064.4,398.1 L2064.1,417.9 L2063.8,396.4 L2063.5,420.6 L2063.2,394.1 L2062.9,433.8 L2062.6,393.3 L2062.3,420.6 L2061.9,394.1 L2061.6,419.8 L2061.3,394.4 L2061.0,421.3 L2060.7,399.9 L2060.4,419.1 L2060.1,394.8 L2059.8,418.8 L2059.5,396.4 L2059.2,429.8 L2058.9,391.0 L2058.6,413.3 L2058.3,393.1 L2058.0,421.1 L2057.7,396.9 L2057.4,414.3 L2057.0,393.3 L2056.7,410.6 L2056.4,389.1 L2056.1,414.6 L2055.8,398.5 L2055.5,411.6 L2055.2,392.7 L2054.9,415.6 L2054.6,390.0 L2054.3,418.8 L2054.0,389.3 L2053.7,418.2 L2053.4,389.6 L2053.1,418.8 L2052.8,391.1 L2052.5,415.8 L2052.1,392.5 L2051.8,419.2 L2051.5,391.0 L2051.2,417.7 L2050.9,395.1 L2050.6,418.1 L2050.3,394.3 L2050.0,409.8 L2049.7,390.7 L2049.4,416.2 L2049.1,389.6 L2048.8,411.5 L2048.5,389.1 L2048.2,410.1 L2047.9,394.5 L2047.5,412.1 L2047.2,390.5 L2046.9,418.6 L2046.6,391.2 L2046.3,419.0 L2046.0,388.8 L2045.7,419.1 L2045.4,387.9 L2045.1,409.4 L2044.8,386.9 L2044.5,413.6 L2044.2,391.8 L2043.9,418.0 L2043.6,395.3 L2043.3,417.3 L2043.0,396.4 L2042.6,411.7 L2042.3,388.3 L2042.0,409.6 L2041.7,395.4 L2041.4,411.5 L2041.1,386.5 L2040.8,412.3 L2040.5,390.5 L2040.2,417.9 L2039.9,391.5 L2039.6,413.5 L2039.3,393.2 L2039.0,411.8 L2038.7,392.0 L2038.4,410.6 L2038.1,393.1 L2037.7,412.5 L2037.4,394.9 L2037.1,410.7 L2036.8,386.7 L2036.5,413.6 L2036.2,382.8 L2035.9,413.2 L2035.6,392.7 L2035.3,415.1 L2035.0,391.3 L2034.7,413.2 L2034.4,392.9 L2034.1,411.8 L2033.8,391.2 L2033.5,406.0 L2033.2,386.2 L2032.8,408.2 L2032.5,386.7 L2032.2,411.9 L2031.9,390.4 L2031.6,423.7 L2031.3,390.1 L2031.0,407.6 L2030.7,386.0 L2030.4,413.7 L2030.1,394.2 L2029.8,413.5 L2029.5,386.0 L2029.2,410.9 L2028.9,391.8 L2028.6,405.9 L2028.3,387.5 L2027.9,406.1 L2027.6,392.7 L2027.3,407.6 L2027.0,390.5 L2026.7,410.7 L2026.4,379.7 L2026.1,408.0 L2025.8,375.3 L2025.5,421.8 L2025.2,390.3 L2024.9,411.1 L2024.6,390.4 L2024.3,407.4 L2024.0,385.1 L2023.7,412.7 L2023.3,389.3 L2023.0,425.1 L2022.7,376.2 L2022.4,406.4 L2022.1,388.9 L2021.8,405.8 L2021.5,381.8 L2021.2,404.0 L2020.9,390.8 L2020.6,421.9 L2020.3,382.9 L2020.0,411.7 L2019.7,388.5 L2019.4,407.0 L2019.1,389.9 L2018.8,404.4 L2018.4,383.8 L2018.1,425.8 L2017.8,384.0 L2017.5,407.4 L2017.2,381.6 L2016.9,407.9 L2016.6,380.9 L2016.3,403.5 L2016.0,386.9 L2015.7,424.1 L2015.4,383.5 L2015.1,412.6 L2014.8,382.4 L2014.5,412.5 L2014.2,389.8 L2013.9,404.5 L2013.5,383.9 L2013.2,406.6 L2012.9,376.7 L2012.6,403.1 L2012.3,376.1 L2012.0,407.3 L2011.7,385.2 L2011.4,411.4 L2011.1,388.1 L2010.8,407.9 L2010.5,385.0 L2010.2,401.7 L2009.9,389.2 L2009.6,411.6 L2009.3,382.7 L2009.0,404.7 L2008.6,384.2 L2008.3,403.1 L2008.0,381.4 L2007.7,414.8 L2007.4,381.9 L2007.1,406.7 L2006.8,382.9 L2006.5,406.4 L2006.2,388.5 L2005.9,405.6 L2005.6,385.5 L2005.3,411.7 L2005.0,381.7 L2004.7,407.1 L2004.4,389.4 L2004.1,403.6 L2003.7,388.8 L2003.4,403.1 L2003.1,380.6 L2002.8,402.9 L2002.5,379.8 L2002.2,411.0 L2001.9,380.4 L2001.6,400.8 L2001.3,383.9 L2001.0,416.0 L2000.7,384.3 L2000.4,407.9 L2000.1,385.1 L1999.8,404.6 L1999.5,380.8 L1999.2,410.2 L1998.8,387.4 L1998.5,406.6 L1998.2,387.2 L1997.9,402.9 L1997.6,382.8 L1997.3,402.4 L1997.0,385.5 L1996.7,401.1 L1996.4,385.9 L1996.1,407.5 L1995.8,383.8 L1995.5,403.8 L1995.2,377.3 L1994.9,403.2 L1994.6,378.2 L1994.2,404.0 L1993.9,385.9 L1993.6,415.9 L1993.3,380.5 L1993.0,401.0 L1992.7,384.1 L1992.4,401.7 L1992.1,378.9 L1991.8,406.4 L1991.5,385.7 L1991.2,407.5 L1990.9,384.7 L1990.6,417.5 L1990.3,384.5 L1990.0,405.4 L1989.7,383.9 L1989.3,407.0 L1989.0,379.6 L1988.7,399.0 L1988.4,380.3 L1988.1,402.8 L1987.8,385.1 L1987.5,403.5 L1987.2,385.6 L1986.9,403.4 L1986.6,378.8 L1986.3,398.1 L1986.0,383.2 L1985.7,406.2 L1985.4,377.2 L1985.1,405.1 L1984.8,384.8 L1984.4,398.9 L1984.1,385.0 L1983.8,403.4 L1983.5,385.3 L1983.2,406.7 L1982.9,380.3 L1982.6,398.5 L1982.3,376.5 L1982.0,414.1 L1981.7,377.3 L1981.4,400.5 L1981.1,378.3 L1980.8,398.6 L1980.5,377.0 L1980.2,402.5 L1979.9,381.9 L1979.5,406.2 L1979.2,381.7 L1978.9,405.5 L1978.6,383.5 L1978.3,405.5 L1978.0,379.6 L1977.7,397.5 L1977.4,384.0 L1977.1,405.3 L1976.8,382.5 L1976.5,404.9 L1976.2,376.9 L1975.9,406.2 L1975.6,380.0 L1975.3,404.8 L1975.0,377.1 L1974.6,400.1 L1974.3,380.2 L1974.0,401.9 L1973.7,375.2 L1973.4,405.3 L1973.1,377.1 L1972.8,406.8 L1972.5,378.0 L1972.2,399.4 L1971.9,384.0 L1971.6,401.9 L1971.3,378.2 L1971.0,406.2 L1970.7,383.9 L1970.4,397.1 L1970.1,375.5 L1969.2,322.6" fill="none" stroke="#eded30" stroke-width="1.1"/>
<line x1="838.6" y1="641.4" x2="838.6" y2="1111.5" stroke="#686868" stroke-width="1" />
<line x1="802.0" y1="1078.7" x2="1315.8" y2="1078.7" stroke="#686868" stroke-width="1" />
<line x1="912.0" y1="641.4" x2="912.0" y2="1111.5" stroke="#686868" stroke-width="1" />
<line x1="802.0" y1="1011.3" x2="1315.8" y2="1011.3" stroke="#686868" stroke-width="1" />
<line x1="985.3" y1="641.4" x2="985.3" y2="1111.5" stroke="#686868" stroke-width="1" />
<line x1="802.0" y1="943.9" x2="1315.8" y2="943.9" stroke="#686868" stroke-width="1" />
<line x1="1058.6" y1="641.4" x2="1058.6" y2="1111.5" stroke="#686868" stroke-width="1" />
<line x1="802.0" y1="876.5" x2="1315.8" y2="876.5" stroke="#686868" stroke-width="1" />
<line x1="1131.9" y1="641.4" x2="1131.9" y2="1111.5" stroke="#686868" stroke-width="1" />
<line x1="802.0" y1="809.1" x2="1315.8" y2="809.1" stroke="#686868" stroke-width="1" />
<line x1="1205.2" y1="641.4" x2="1205.2" y2="1111.5" stroke="#686868" stroke-width="1" />
<line x1="802.0" y1="741.7" x2="1315.8" y2="741.7" stroke="#686868" stroke-width="1" />
<line x1="1278.6" y1="641.4" x2="1278.6" y2="1111.5" stroke="#686868" stroke-width="1" />
<line x1="802.0" y1="674.3" x2="1315.8" y2="674.3" stroke="#686868" stroke-width="1" />
<rect x="802" y="641.4" width="513.8" height="470.1" fill="none" stroke="#c99a4a" stroke-width="1.3"/>
<line x1="802" y1="641.4" x2="802" y2="1111.5" stroke="#c99a4a" stroke-width="2"/>
<line x1="802" y1="1111.5" x2="1315.8" y2="1111.5" stroke="#c99a4a" stroke-width="2"/>
<line x1="799.0" y1="1095.5" x2="802.0" y2="1095.5" stroke="#c99a4a" stroke-width="1" />
<line x1="820.3" y1="1111.5" x2="820.3" y2="1114.5" stroke="#c99a4a" stroke-width="1" />
<line x1="799.0" y1="1078.7" x2="802.0" y2="1078.7" stroke="#c99a4a" stroke-width="1" />
<line x1="838.6" y1="1111.5" x2="838.6" y2="1114.5" stroke="#c99a4a" stroke-width="1" />
<line x1="799.0" y1="1061.8" x2="802.0" y2="1061.8" stroke="#c99a4a" stroke-width="1" />
<line x1="857.0" y1="1111.5" x2="857.0" y2="1114.5" stroke="#c99a4a" stroke-width="1" />
<line x1="799.0" y1="1045.0" x2="802.0" y2="1045.0" stroke="#c99a4a" stroke-width="1" />
<line x1="875.3" y1="1111.5" x2="875.3" y2="1114.5" stroke="#c99a4a" stroke-width="1" />
<line x1="799.0" y1="1028.2" x2="802.0" y2="1028.2" stroke="#c99a4a" stroke-width="1" />
<line x1="893.6" y1="1111.5" x2="893.6" y2="1114.5" stroke="#c99a4a" stroke-width="1" />
<line x1="799.0" y1="1011.3" x2="802.0" y2="1011.3" stroke="#c99a4a" stroke-width="1" />
<line x1="912.0" y1="1111.5" x2="912.0" y2="1114.5" stroke="#c99a4a" stroke-width="1" />
<line x1="799.0" y1="994.5" x2="802.0" y2="994.5" stroke="#c99a4a" stroke-width="1" />
<line x1="930.3" y1="1111.5" x2="930.3" y2="1114.5" stroke="#c99a4a" stroke-width="1" />
<line x1="799.0" y1="977.6" x2="802.0" y2="977.6" stroke="#c99a4a" stroke-width="1" />
<line x1="948.6" y1="1111.5" x2="948.6" y2="1114.5" stroke="#c99a4a" stroke-width="1" />
<line x1="799.0" y1="960.8" x2="802.0" y2="960.8" stroke="#c99a4a" stroke-width="1" />
<line x1="966.9" y1="1111.5" x2="966.9" y2="1114.5" stroke="#c99a4a" stroke-width="1" />
<line x1="799.0" y1="943.9" x2="802.0" y2="943.9" stroke="#c99a4a" stroke-width="1" />
<line x1="985.3" y1="1111.5" x2="985.3" y2="1114.5" stroke="#c99a4a" stroke-width="1" />
<line x1="799.0" y1="927.0" x2="802.0" y2="927.0" stroke="#c99a4a" stroke-width="1" />
<line x1="1003.6" y1="1111.5" x2="1003.6" y2="1114.5" stroke="#c99a4a" stroke-width="1" />
<line x1="799.0" y1="910.2" x2="802.0" y2="910.2" stroke="#c99a4a" stroke-width="1" />
<line x1="1021.9" y1="1111.5" x2="1021.9" y2="1114.5" stroke="#c99a4a" stroke-width="1" />
<line x1="799.0" y1="893.4" x2="802.0" y2="893.4" stroke="#c99a4a" stroke-width="1" />
<line x1="1040.3" y1="1111.5" x2="1040.3" y2="1114.5" stroke="#c99a4a" stroke-width="1" />
<line x1="799.0" y1="876.5" x2="802.0" y2="876.5" stroke="#c99a4a" stroke-width="1" />
<line x1="1058.6" y1="1111.5" x2="1058.6" y2="1114.5" stroke="#c99a4a" stroke-width="1" />
<line x1="799.0" y1="859.6" x2="802.0" y2="859.6" stroke="#c99a4a" stroke-width="1" />
<line x1="1076.9" y1="1111.5" x2="1076.9" y2="1114.5" stroke="#c99a4a" stroke-width="1" />
<line x1="799.0" y1="842.8" x2="802.0" y2="842.8" stroke="#c99a4a" stroke-width="1" />
<line x1="1095.3" y1="1111.5" x2="1095.3" y2="1114.5" stroke="#c99a4a" stroke-width="1" />
<line x1="799.0" y1="826.0" x2="802.0" y2="826.0" stroke="#c99a4a" stroke-width="1" />
<line x1="1113.6" y1="1111.5" x2="1113.6" y2="1114.5" stroke="#c99a4a" stroke-width="1" />
<line x1="799.0" y1="809.1" x2="802.0" y2="809.1" stroke="#c99a4a" stroke-width="1" />
<line x1="1131.9" y1="1111.5" x2="1131.9" y2="1114.5" stroke="#c99a4a" stroke-width="1" />
<line x1="799.0" y1="792.2" x2="802.0" y2="792.2" stroke="#c99a4a" stroke-width="1" />
<line x1="1150.2" y1="1111.5" x2="1150.2" y2="1114.5" stroke="#c99a4a" stroke-width="1" />
<line x1="799.0" y1="775.4" x2="802.0" y2="775.4" stroke="#c99a4a" stroke-width="1" />
<line x1="1168.6" y1="1111.5" x2="1168.6" y2="1114.5" stroke="#c99a4a" stroke-width="1" />
<line x1="799.0" y1="758.5" x2="802.0" y2="758.5" stroke="#c99a4a" stroke-width="1" />
<line x1="1186.9" y1="1111.5" x2="1186.9" y2="1114.5" stroke="#c99a4a" stroke-width="1" />
<line x1="799.0" y1="741.7" x2="802.0" y2="741.7" stroke="#c99a4a" stroke-width="1" />
<line x1="1205.2" y1="1111.5" x2="1205.2" y2="1114.5" stroke="#c99a4a" stroke-width="1" />
<line x1="799.0" y1="724.9" x2="802.0" y2="724.9" stroke="#c99a4a" stroke-width="1" />
<line x1="1223.6" y1="1111.5" x2="1223.6" y2="1114.5" stroke="#c99a4a" stroke-width="1" />
<line x1="799.0" y1="708.0" x2="802.0" y2="708.0" stroke="#c99a4a" stroke-width="1" />
<line x1="1241.9" y1="1111.5" x2="1241.9" y2="1114.5" stroke="#c99a4a" stroke-width="1" />
<line x1="799.0" y1="691.1" x2="802.0" y2="691.1" stroke="#c99a4a" stroke-width="1" />
<line x1="1260.2" y1="1111.5" x2="1260.2" y2="1114.5" stroke="#c99a4a" stroke-width="1" />
<line x1="799.0" y1="674.3" x2="802.0" y2="674.3" stroke="#c99a4a" stroke-width="1" />
<line x1="1278.6" y1="1111.5" x2="1278.6" y2="1114.5" stroke="#c99a4a" stroke-width="1" />
<line x1="799.0" y1="657.5" x2="802.0" y2="657.5" stroke="#c99a4a" stroke-width="1" />
<line x1="1296.9" y1="1111.5" x2="1296.9" y2="1114.5" stroke="#c99a4a" stroke-width="1" />
<line x1="1315.2" y1="1111.5" x2="1315.2" y2="1114.5" stroke="#c99a4a" stroke-width="1" />
<text x="797.0" y="1082.2" font-size="10" fill="#d4d4d4" text-anchor="end" >-1.2</text>
<text x="838.6" y="1127.0" font-size="10" fill="#d4d4d4" text-anchor="middle" >-1.2</text>
<text x="797.0" y="1014.8" font-size="10" fill="#d4d4d4" text-anchor="end" >-0.8</text>
<text x="912.0" y="1127.0" font-size="10" fill="#d4d4d4" text-anchor="middle" >-0.8</text>
<text x="797.0" y="947.4" font-size="10" fill="#d4d4d4" text-anchor="end" >-0.4</text>
<text x="985.3" y="1127.0" font-size="10" fill="#d4d4d4" text-anchor="middle" >-0.4</text>
<text x="797.0" y="880.0" font-size="10" fill="#d4d4d4" text-anchor="end" >0</text>
<text x="1058.6" y="1127.0" font-size="10" fill="#d4d4d4" text-anchor="middle" >0</text>
<text x="797.0" y="812.6" font-size="10" fill="#d4d4d4" text-anchor="end" >0.4</text>
<text x="1131.9" y="1127.0" font-size="10" fill="#d4d4d4" text-anchor="middle" >0.4</text>
<text x="797.0" y="745.2" font-size="10" fill="#d4d4d4" text-anchor="end" >0.8</text>
<text x="1205.2" y="1127.0" font-size="10" fill="#d4d4d4" text-anchor="middle" >0.8</text>
<text x="797.0" y="677.8" font-size="10" fill="#d4d4d4" text-anchor="end" >1.2</text>
<text x="1278.6" y="1127.0" font-size="10" fill="#d4d4d4" text-anchor="middle" >1.2</text>
<text x="1058.6" y="1146.0" font-size="14" fill="#d4d4d4" text-anchor="middle" >I</text>
<text x="0" y="0" font-size="13" fill="#d4d4d4" text-anchor="middle" transform="translate(768,877) rotate(-90)">Q</text>
<g fill="#eded30"><circle cx="847.7" cy="682.7" r="3.35"/><circle cx="847.7" cy="708.5" r="3.35"/><circle cx="848.0" cy="734.6" r="3.35"/><circle cx="848.2" cy="760.7" r="3.35"/><circle cx="848.1" cy="786.2" r="3.35"/><circle cx="848.3" cy="812.4" r="3.35"/><circle cx="848.3" cy="837.9" r="3.35"/><circle cx="848.0" cy="863.5" r="3.35"/><circle cx="847.4" cy="889.5" r="3.35"/><circle cx="848.1" cy="914.9" r="3.35"/><circle cx="848.4" cy="941.6" r="3.35"/><circle cx="848.4" cy="967.3" r="3.35"/><circle cx="848.0" cy="992.3" r="3.35"/><circle cx="847.7" cy="1018.7" r="3.35"/><circle cx="848.6" cy="1043.8" r="3.35"/><circle cx="847.4" cy="1069.8" r="3.35"/><circle cx="876.0" cy="683.4" r="3.35"/><circle cx="875.7" cy="709.5" r="3.35"/><circle cx="876.0" cy="735.4" r="3.35"/><circle cx="875.9" cy="760.4" r="3.35"/><circle cx="875.8" cy="787.0" r="3.35"/><circle cx="876.3" cy="812.6" r="3.35"/><circle cx="875.6" cy="838.0" r="3.35"/><circle cx="876.4" cy="864.3" r="3.35"/><circle cx="876.7" cy="889.1" r="3.35"/><circle cx="876.0" cy="915.9" r="3.35"/><circle cx="876.2" cy="941.6" r="3.35"/><circle cx="875.9" cy="966.3" r="3.35"/><circle cx="876.7" cy="992.4" r="3.35"/><circle cx="876.2" cy="1018.3" r="3.35"/><circle cx="876.2" cy="1044.7" r="3.35"/><circle cx="876.7" cy="1070.5" r="3.35"/><circle cx="904.0" cy="683.7" r="3.35"/><circle cx="903.7" cy="709.0" r="3.35"/><circle cx="904.8" cy="734.6" r="3.35"/><circle cx="904.1" cy="760.7" r="3.35"/><circle cx="904.0" cy="786.7" r="3.35"/><circle cx="904.5" cy="811.7" r="3.35"/><circle cx="904.8" cy="837.5" r="3.35"/><circle cx="904.5" cy="863.6" r="3.35"/><circle cx="903.9" cy="889.0" r="3.35"/><circle cx="904.9" cy="915.7" r="3.35"/><circle cx="904.3" cy="941.5" r="3.35"/><circle cx="904.9" cy="967.4" r="3.35"/><circle cx="904.3" cy="992.4" r="3.35"/><circle cx="904.3" cy="1019.0" r="3.35"/><circle cx="904.6" cy="1044.4" r="3.35"/><circle cx="904.7" cy="1069.9" r="3.35"/><circle cx="932.5" cy="683.7" r="3.35"/><circle cx="932.1" cy="709.5" r="3.35"/><circle cx="931.9" cy="734.9" r="3.35"/><circle cx="932.5" cy="760.2" r="3.35"/><circle cx="933.0" cy="786.3" r="3.35"/><circle cx="932.1" cy="812.1" r="3.35"/><circle cx="932.6" cy="837.9" r="3.35"/><circle cx="931.9" cy="863.3" r="3.35"/><circle cx="932.7" cy="889.1" r="3.35"/><circle cx="932.2" cy="915.7" r="3.35"/><circle cx="932.9" cy="941.6" r="3.35"/><circle cx="932.1" cy="966.3" r="3.35"/><circle cx="932.8" cy="992.8" r="3.35"/><circle cx="932.3" cy="1017.9" r="3.35"/><circle cx="932.4" cy="1043.9" r="3.35"/><circle cx="932.6" cy="1070.6" r="3.35"/><circle cx="960.3" cy="682.8" r="3.35"/><circle cx="960.8" cy="708.6" r="3.35"/><circle cx="960.3" cy="734.8" r="3.35"/><circle cx="961.2" cy="760.4" r="3.35"/><circle cx="960.4" cy="786.4" r="3.35"/><circle cx="960.2" cy="812.1" r="3.35"/><circle cx="960.8" cy="837.8" r="3.35"/><circle cx="961.0" cy="863.4" r="3.35"/><circle cx="960.1" cy="889.7" r="3.35"/><circle cx="960.5" cy="915.8" r="3.35"/><circle cx="960.1" cy="941.4" r="3.35"/><circle cx="960.8" cy="966.7" r="3.35"/><circle cx="960.2" cy="992.8" r="3.35"/><circle cx="960.9" cy="1018.4" r="3.35"/><circle cx="960.6" cy="1044.4" r="3.35"/><circle cx="960.7" cy="1069.9" r="3.35"/><circle cx="988.4" cy="683.3" r="3.35"/><circle cx="988.8" cy="709.6" r="3.35"/><circle cx="989.3" cy="734.9" r="3.35"/><circle cx="988.5" cy="760.3" r="3.35"/><circle cx="988.9" cy="786.7" r="3.35"/><circle cx="988.4" cy="812.4" r="3.35"/><circle cx="989.3" cy="837.8" r="3.35"/><circle cx="989.3" cy="863.7" r="3.35"/><circle cx="988.9" cy="890.0" r="3.35"/><circle cx="988.4" cy="915.1" r="3.35"/><circle cx="989.3" cy="940.6" r="3.35"/><circle cx="988.5" cy="966.9" r="3.35"/><circle cx="989.0" cy="992.8" r="3.35"/><circle cx="989.3" cy="1018.6" r="3.35"/><circle cx="988.2" cy="1043.7" r="3.35"/><circle cx="988.2" cy="1069.9" r="3.35"/><circle cx="1016.3" cy="683.3" r="3.35"/><circle cx="1017.1" cy="708.7" r="3.35"/><circle cx="1017.3" cy="734.8" r="3.35"/><circle cx="1017.5" cy="760.5" r="3.35"/><circle cx="1017.0" cy="786.5" r="3.35"/><circle cx="1016.6" cy="812.5" r="3.35"/><circle cx="1016.3" cy="837.7" r="3.35"/><circle cx="1016.7" cy="864.2" r="3.35"/><circle cx="1016.9" cy="889.0" r="3.35"/><circle cx="1016.7" cy="915.5" r="3.35"/><circle cx="1017.3" cy="940.6" r="3.35"/><circle cx="1017.2" cy="966.7" r="3.35"/><circle cx="1016.9" cy="992.6" r="3.35"/><circle cx="1016.8" cy="1019.0" r="3.35"/><circle cx="1017.4" cy="1044.7" r="3.35"/><circle cx="1017.2" cy="1070.2" r="3.35"/><circle cx="1044.6" cy="682.7" r="3.35"/><circle cx="1045.4" cy="709.3" r="3.35"/><circle cx="1045.2" cy="734.6" r="3.35"/><circle cx="1044.8" cy="761.1" r="3.35"/><circle cx="1045.1" cy="785.8" r="3.35"/><circle cx="1044.9" cy="812.0" r="3.35"/><circle cx="1044.5" cy="838.6" r="3.35"/><circle cx="1045.5" cy="864.1" r="3.35"/><circle cx="1044.5" cy="889.4" r="3.35"/><circle cx="1044.6" cy="915.6" r="3.35"/><circle cx="1045.4" cy="941.4" r="3.35"/><circle cx="1045.4" cy="966.4" r="3.35"/><circle cx="1044.5" cy="992.2" r="3.35"/><circle cx="1045.5" cy="1018.8" r="3.35"/><circle cx="1045.1" cy="1043.9" r="3.35"/><circle cx="1045.5" cy="1069.5" r="3.35"/><circle cx="1073.0" cy="682.7" r="3.35"/><circle cx="1073.8" cy="709.0" r="3.35"/><circle cx="1073.5" cy="735.2" r="3.35"/><circle cx="1073.3" cy="761.2" r="3.35"/><circle cx="1073.5" cy="786.9" r="3.35"/><circle cx="1073.8" cy="811.7" r="3.35"/><circle cx="1073.5" cy="837.7" r="3.35"/><circle cx="1073.0" cy="863.6" r="3.35"/><circle cx="1073.8" cy="889.0" r="3.35"/><circle cx="1073.1" cy="914.9" r="3.35"/><circle cx="1073.8" cy="941.1" r="3.35"/><circle cx="1073.4" cy="966.9" r="3.35"/><circle cx="1073.5" cy="992.5" r="3.35"/><circle cx="1073.1" cy="1018.7" r="3.35"/><circle cx="1073.4" cy="1044.7" r="3.35"/><circle cx="1073.0" cy="1070.4" r="3.35"/><circle cx="1101.6" cy="683.4" r="3.35"/><circle cx="1101.2" cy="709.2" r="3.35"/><circle cx="1100.8" cy="734.4" r="3.35"/><circle cx="1101.1" cy="760.2" r="3.35"/><circle cx="1100.8" cy="786.7" r="3.35"/><circle cx="1101.6" cy="812.3" r="3.35"/><circle cx="1101.0" cy="838.2" r="3.35"/><circle cx="1101.7" cy="863.9" r="3.35"/><circle cx="1101.0" cy="889.6" r="3.35"/><circle cx="1101.2" cy="915.0" r="3.35"/><circle cx="1100.9" cy="941.5" r="3.35"/><circle cx="1101.5" cy="967.4" r="3.35"/><circle cx="1101.0" cy="992.4" r="3.35"/><circle cx="1101.4" cy="1017.9" r="3.35"/><circle cx="1101.1" cy="1044.3" r="3.35"/><circle cx="1101.3" cy="1070.5" r="3.35"/><circle cx="1129.6" cy="683.5" r="3.35"/><circle cx="1129.6" cy="709.4" r="3.35"/><circle cx="1129.3" cy="734.3" r="3.35"/><circle cx="1130.1" cy="761.0" r="3.35"/><circle cx="1129.1" cy="786.0" r="3.35"/><circle cx="1129.2" cy="812.4" r="3.35"/><circle cx="1129.1" cy="837.4" r="3.35"/><circle cx="1129.5" cy="863.2" r="3.35"/><circle cx="1129.2" cy="889.4" r="3.35"/><circle cx="1129.1" cy="914.7" r="3.35"/><circle cx="1129.2" cy="940.8" r="3.35"/><circle cx="1129.3" cy="966.8" r="3.35"/><circle cx="1129.3" cy="992.4" r="3.35"/><circle cx="1128.9" cy="1018.8" r="3.35"/><circle cx="1129.8" cy="1044.2" r="3.35"/><circle cx="1128.9" cy="1069.7" r="3.35"/><circle cx="1158.1" cy="683.2" r="3.35"/><circle cx="1157.3" cy="709.5" r="3.35"/><circle cx="1158.1" cy="734.4" r="3.35"/><circle cx="1157.7" cy="760.7" r="3.35"/><circle cx="1157.2" cy="786.2" r="3.35"/><circle cx="1157.8" cy="812.4" r="3.35"/><circle cx="1157.8" cy="838.1" r="3.35"/><circle cx="1157.5" cy="863.2" r="3.35"/><circle cx="1157.1" cy="889.9" r="3.35"/><circle cx="1158.1" cy="915.8" r="3.35"/><circle cx="1157.1" cy="941.4" r="3.35"/><circle cx="1157.3" cy="966.7" r="3.35"/><circle cx="1157.3" cy="993.1" r="3.35"/><circle cx="1158.0" cy="1018.8" r="3.35"/><circle cx="1157.5" cy="1044.7" r="3.35"/><circle cx="1157.4" cy="1070.1" r="3.35"/><circle cx="1186.0" cy="683.0" r="3.35"/><circle cx="1185.7" cy="708.6" r="3.35"/><circle cx="1186.2" cy="734.5" r="3.35"/><circle cx="1185.4" cy="760.4" r="3.35"/><circle cx="1186.0" cy="786.6" r="3.35"/><circle cx="1185.8" cy="812.6" r="3.35"/><circle cx="1186.1" cy="837.6" r="3.35"/><circle cx="1185.8" cy="863.4" r="3.35"/><circle cx="1185.5" cy="889.1" r="3.35"/><circle cx="1185.3" cy="915.1" r="3.35"/><circle cx="1186.3" cy="941.3" r="3.35"/><circle cx="1185.3" cy="966.5" r="3.35"/><circle cx="1185.9" cy="992.7" r="3.35"/><circle cx="1185.2" cy="1018.0" r="3.35"/><circle cx="1185.9" cy="1044.3" r="3.35"/><circle cx="1185.3" cy="1070.3" r="3.35"/><circle cx="1213.6" cy="683.4" r="3.35"/><circle cx="1214.0" cy="708.9" r="3.35"/><circle cx="1214.5" cy="734.7" r="3.35"/><circle cx="1213.9" cy="760.7" r="3.35"/><circle cx="1214.4" cy="787.0" r="3.35"/><circle cx="1214.3" cy="812.2" r="3.35"/><circle cx="1214.2" cy="838.1" r="3.35"/><circle cx="1214.5" cy="864.3" r="3.35"/><circle cx="1214.3" cy="889.2" r="3.35"/><circle cx="1214.0" cy="915.2" r="3.35"/><circle cx="1213.6" cy="941.4" r="3.35"/><circle cx="1213.6" cy="967.1" r="3.35"/><circle cx="1213.9" cy="992.6" r="3.35"/><circle cx="1214.2" cy="1018.7" r="3.35"/><circle cx="1214.5" cy="1044.8" r="3.35"/><circle cx="1214.3" cy="1069.7" r="3.35"/><circle cx="1242.3" cy="683.3" r="3.35"/><circle cx="1242.6" cy="709.0" r="3.35"/><circle cx="1241.9" cy="734.3" r="3.35"/><circle cx="1242.1" cy="760.7" r="3.35"/><circle cx="1241.9" cy="785.9" r="3.35"/><circle cx="1242.1" cy="811.7" r="3.35"/><circle cx="1241.7" cy="837.9" r="3.35"/><circle cx="1241.9" cy="863.8" r="3.35"/><circle cx="1242.1" cy="889.4" r="3.35"/><circle cx="1241.7" cy="914.7" r="3.35"/><circle cx="1242.2" cy="941.7" r="3.35"/><circle cx="1241.8" cy="966.7" r="3.35"/><circle cx="1241.9" cy="993.0" r="3.35"/><circle cx="1242.1" cy="1018.8" r="3.35"/><circle cx="1241.5" cy="1043.8" r="3.35"/><circle cx="1241.7" cy="1069.8" r="3.35"/><circle cx="1270.1" cy="683.2" r="3.35"/><circle cx="1270.8" cy="709.0" r="3.35"/><circle cx="1270.3" cy="735.4" r="3.35"/><circle cx="1270.4" cy="760.8" r="3.35"/><circle cx="1270.6" cy="786.2" r="3.35"/><circle cx="1269.7" cy="812.7" r="3.35"/><circle cx="1270.3" cy="838.1" r="3.35"/><circle cx="1269.7" cy="864.1" r="3.35"/><circle cx="1270.1" cy="889.7" r="3.35"/><circle cx="1270.0" cy="915.8" r="3.35"/><circle cx="1270.1" cy="940.8" r="3.35"/><circle cx="1270.7" cy="966.5" r="3.35"/><circle cx="1270.0" cy="992.6" r="3.35"/><circle cx="1270.8" cy="1018.0" r="3.35"/><circle cx="1269.9" cy="1044.6" r="3.35"/><circle cx="1269.7" cy="1069.9" r="3.35"/></g>
<line x1="1497.3" y1="1076.8" x2="2217.3" y2="1076.8" stroke="#686868" stroke-width="1" />
<line x1="1497.3" y1="1043.5" x2="2217.3" y2="1043.5" stroke="#686868" stroke-width="1" />
<line x1="1497.3" y1="1010.2" x2="2217.3" y2="1010.2" stroke="#686868" stroke-width="1" />
<line x1="1497.3" y1="976.8" x2="2217.3" y2="976.8" stroke="#686868" stroke-width="1" />
<line x1="1497.3" y1="943.5" x2="2217.3" y2="943.5" stroke="#686868" stroke-width="1" />
<line x1="1497.3" y1="910.2" x2="2217.3" y2="910.2" stroke="#686868" stroke-width="1" />
<line x1="1497.3" y1="876.8" x2="2217.3" y2="876.8" stroke="#686868" stroke-width="1" />
<line x1="1497.3" y1="843.5" x2="2217.3" y2="843.5" stroke="#686868" stroke-width="1" />
<line x1="1497.3" y1="810.2" x2="2217.3" y2="810.2" stroke="#686868" stroke-width="1" />
<line x1="1497.3" y1="776.8" x2="2217.3" y2="776.8" stroke="#686868" stroke-width="1" />
<line x1="1497.3" y1="743.5" x2="2217.3" y2="743.5" stroke="#686868" stroke-width="1" />
<line x1="1497.3" y1="710.2" x2="2217.3" y2="710.2" stroke="#686868" stroke-width="1" />
<line x1="1497.3" y1="676.8" x2="2217.3" y2="676.8" stroke="#686868" stroke-width="1" />
<line x1="1513.1" y1="643.5" x2="1513.1" y2="1110.2" stroke="#686868" stroke-width="1" />
<line x1="1627.9" y1="643.5" x2="1627.9" y2="1110.2" stroke="#686868" stroke-width="1" />
<line x1="1742.7" y1="643.5" x2="1742.7" y2="1110.2" stroke="#686868" stroke-width="1" />
<line x1="1857.5" y1="643.5" x2="1857.5" y2="1110.2" stroke="#686868" stroke-width="1" />
<line x1="1972.3" y1="643.5" x2="1972.3" y2="1110.2" stroke="#686868" stroke-width="1" />
<line x1="2087.1" y1="643.5" x2="2087.1" y2="1110.2" stroke="#686868" stroke-width="1" />
<line x1="2201.9" y1="643.5" x2="2201.9" y2="1110.2" stroke="#686868" stroke-width="1" />
<line x1="1494.3" y1="643.5" x2="1497.3" y2="643.5" stroke="#c99a4a" stroke-width="1" />
<line x1="1494.3" y1="650.2" x2="1497.3" y2="650.2" stroke="#c99a4a" stroke-width="1" />
<line x1="1494.3" y1="656.8" x2="1497.3" y2="656.8" stroke="#c99a4a" stroke-width="1" />
<line x1="1494.3" y1="663.5" x2="1497.3" y2="663.5" stroke="#c99a4a" stroke-width="1" />
<line x1="1494.3" y1="670.2" x2="1497.3" y2="670.2" stroke="#c99a4a" stroke-width="1" />
<line x1="1494.3" y1="676.8" x2="1497.3" y2="676.8" stroke="#c99a4a" stroke-width="1" />
<line x1="1494.3" y1="683.5" x2="1497.3" y2="683.5" stroke="#c99a4a" stroke-width="1" />
<line x1="1494.3" y1="690.2" x2="1497.3" y2="690.2" stroke="#c99a4a" stroke-width="1" />
<line x1="1494.3" y1="696.8" x2="1497.3" y2="696.8" stroke="#c99a4a" stroke-width="1" />
<line x1="1494.3" y1="703.5" x2="1497.3" y2="703.5" stroke="#c99a4a" stroke-width="1" />
<line x1="1494.3" y1="710.2" x2="1497.3" y2="710.2" stroke="#c99a4a" stroke-width="1" />
<line x1="1494.3" y1="716.8" x2="1497.3" y2="716.8" stroke="#c99a4a" stroke-width="1" />
<line x1="1494.3" y1="723.5" x2="1497.3" y2="723.5" stroke="#c99a4a" stroke-width="1" />
<line x1="1494.3" y1="730.2" x2="1497.3" y2="730.2" stroke="#c99a4a" stroke-width="1" />
<line x1="1494.3" y1="736.8" x2="1497.3" y2="736.8" stroke="#c99a4a" stroke-width="1" />
<line x1="1494.3" y1="743.5" x2="1497.3" y2="743.5" stroke="#c99a4a" stroke-width="1" />
<line x1="1494.3" y1="750.2" x2="1497.3" y2="750.2" stroke="#c99a4a" stroke-width="1" />
<line x1="1494.3" y1="756.8" x2="1497.3" y2="756.8" stroke="#c99a4a" stroke-width="1" />
<line x1="1494.3" y1="763.5" x2="1497.3" y2="763.5" stroke="#c99a4a" stroke-width="1" />
<line x1="1494.3" y1="770.2" x2="1497.3" y2="770.2" stroke="#c99a4a" stroke-width="1" />
<line x1="1494.3" y1="776.8" x2="1497.3" y2="776.8" stroke="#c99a4a" stroke-width="1" />
<line x1="1494.3" y1="783.5" x2="1497.3" y2="783.5" stroke="#c99a4a" stroke-width="1" />
<line x1="1494.3" y1="790.2" x2="1497.3" y2="790.2" stroke="#c99a4a" stroke-width="1" />
<line x1="1494.3" y1="796.8" x2="1497.3" y2="796.8" stroke="#c99a4a" stroke-width="1" />
<line x1="1494.3" y1="803.5" x2="1497.3" y2="803.5" stroke="#c99a4a" stroke-width="1" />
<line x1="1494.3" y1="810.2" x2="1497.3" y2="810.2" stroke="#c99a4a" stroke-width="1" />
<line x1="1494.3" y1="816.8" x2="1497.3" y2="816.8" stroke="#c99a4a" stroke-width="1" />
<line x1="1494.3" y1="823.5" x2="1497.3" y2="823.5" stroke="#c99a4a" stroke-width="1" />
<line x1="1494.3" y1="830.2" x2="1497.3" y2="830.2" stroke="#c99a4a" stroke-width="1" />
<line x1="1494.3" y1="836.8" x2="1497.3" y2="836.8" stroke="#c99a4a" stroke-width="1" />
<line x1="1494.3" y1="843.5" x2="1497.3" y2="843.5" stroke="#c99a4a" stroke-width="1" />
<line x1="1494.3" y1="850.2" x2="1497.3" y2="850.2" stroke="#c99a4a" stroke-width="1" />
<line x1="1494.3" y1="856.8" x2="1497.3" y2="856.8" stroke="#c99a4a" stroke-width="1" />
<line x1="1494.3" y1="863.5" x2="1497.3" y2="863.5" stroke="#c99a4a" stroke-width="1" />
<line x1="1494.3" y1="870.2" x2="1497.3" y2="870.2" stroke="#c99a4a" stroke-width="1" />
<line x1="1494.3" y1="876.8" x2="1497.3" y2="876.8" stroke="#c99a4a" stroke-width="1" />
<line x1="1494.3" y1="883.5" x2="1497.3" y2="883.5" stroke="#c99a4a" stroke-width="1" />
<line x1="1494.3" y1="890.2" x2="1497.3" y2="890.2" stroke="#c99a4a" stroke-width="1" />
<line x1="1494.3" y1="896.8" x2="1497.3" y2="896.8" stroke="#c99a4a" stroke-width="1" />
<line x1="1494.3" y1="903.5" x2="1497.3" y2="903.5" stroke="#c99a4a" stroke-width="1" />
<line x1="1494.3" y1="910.2" x2="1497.3" y2="910.2" stroke="#c99a4a" stroke-width="1" />
<line x1="1494.3" y1="916.8" x2="1497.3" y2="916.8" stroke="#c99a4a" stroke-width="1" />
<line x1="1494.3" y1="923.5" x2="1497.3" y2="923.5" stroke="#c99a4a" stroke-width="1" />
<line x1="1494.3" y1="930.2" x2="1497.3" y2="930.2" stroke="#c99a4a" stroke-width="1" />
<line x1="1494.3" y1="936.8" x2="1497.3" y2="936.8" stroke="#c99a4a" stroke-width="1" />
<line x1="1494.3" y1="943.5" x2="1497.3" y2="943.5" stroke="#c99a4a" stroke-width="1" />
<line x1="1494.3" y1="950.2" x2="1497.3" y2="950.2" stroke="#c99a4a" stroke-width="1" />
<line x1="1494.3" y1="956.8" x2="1497.3" y2="956.8" stroke="#c99a4a" stroke-width="1" />
<line x1="1494.3" y1="963.5" x2="1497.3" y2="963.5" stroke="#c99a4a" stroke-width="1" />
<line x1="1494.3" y1="970.2" x2="1497.3" y2="970.2" stroke="#c99a4a" stroke-width="1" />
<line x1="1494.3" y1="976.8" x2="1497.3" y2="976.8" stroke="#c99a4a" stroke-width="1" />
<line x1="1494.3" y1="983.5" x2="1497.3" y2="983.5" stroke="#c99a4a" stroke-width="1" />
<line x1="1494.3" y1="990.2" x2="1497.3" y2="990.2" stroke="#c99a4a" stroke-width="1" />
<line x1="1494.3" y1="996.8" x2="1497.3" y2="996.8" stroke="#c99a4a" stroke-width="1" />
<line x1="1494.3" y1="1003.5" x2="1497.3" y2="1003.5" stroke="#c99a4a" stroke-width="1" />
<line x1="1494.3" y1="1010.2" x2="1497.3" y2="1010.2" stroke="#c99a4a" stroke-width="1" />
<line x1="1494.3" y1="1016.8" x2="1497.3" y2="1016.8" stroke="#c99a4a" stroke-width="1" />
<line x1="1494.3" y1="1023.5" x2="1497.3" y2="1023.5" stroke="#c99a4a" stroke-width="1" />
<line x1="1494.3" y1="1030.2" x2="1497.3" y2="1030.2" stroke="#c99a4a" stroke-width="1" />
<line x1="1494.3" y1="1036.8" x2="1497.3" y2="1036.8" stroke="#c99a4a" stroke-width="1" />
<line x1="1494.3" y1="1043.5" x2="1497.3" y2="1043.5" stroke="#c99a4a" stroke-width="1" />
<line x1="1494.3" y1="1050.2" x2="1497.3" y2="1050.2" stroke="#c99a4a" stroke-width="1" />
<line x1="1494.3" y1="1056.8" x2="1497.3" y2="1056.8" stroke="#c99a4a" stroke-width="1" />
<line x1="1494.3" y1="1063.5" x2="1497.3" y2="1063.5" stroke="#c99a4a" stroke-width="1" />
<line x1="1494.3" y1="1070.2" x2="1497.3" y2="1070.2" stroke="#c99a4a" stroke-width="1" />
<line x1="1494.3" y1="1076.8" x2="1497.3" y2="1076.8" stroke="#c99a4a" stroke-width="1" />
<line x1="1494.3" y1="1083.5" x2="1497.3" y2="1083.5" stroke="#c99a4a" stroke-width="1" />
<line x1="1494.3" y1="1090.2" x2="1497.3" y2="1090.2" stroke="#c99a4a" stroke-width="1" />
<line x1="1494.3" y1="1096.8" x2="1497.3" y2="1096.8" stroke="#c99a4a" stroke-width="1" />
<line x1="1494.3" y1="1103.5" x2="1497.3" y2="1103.5" stroke="#c99a4a" stroke-width="1" />
<line x1="1494.3" y1="1110.2" x2="1497.3" y2="1110.2" stroke="#c99a4a" stroke-width="1" />
<line x1="1490.1" y1="1110.2" x2="1490.1" y2="1113.2" stroke="#c99a4a" stroke-width="1" />
<line x1="1513.1" y1="1110.2" x2="1513.1" y2="1113.2" stroke="#c99a4a" stroke-width="1" />
<line x1="1536.1" y1="1110.2" x2="1536.1" y2="1113.2" stroke="#c99a4a" stroke-width="1" />
<line x1="1559.0" y1="1110.2" x2="1559.0" y2="1113.2" stroke="#c99a4a" stroke-width="1" />
<line x1="1582.0" y1="1110.2" x2="1582.0" y2="1113.2" stroke="#c99a4a" stroke-width="1" />
<line x1="1604.9" y1="1110.2" x2="1604.9" y2="1113.2" stroke="#c99a4a" stroke-width="1" />
<line x1="1627.9" y1="1110.2" x2="1627.9" y2="1113.2" stroke="#c99a4a" stroke-width="1" />
<line x1="1650.9" y1="1110.2" x2="1650.9" y2="1113.2" stroke="#c99a4a" stroke-width="1" />
<line x1="1673.8" y1="1110.2" x2="1673.8" y2="1113.2" stroke="#c99a4a" stroke-width="1" />
<line x1="1696.8" y1="1110.2" x2="1696.8" y2="1113.2" stroke="#c99a4a" stroke-width="1" />
<line x1="1719.7" y1="1110.2" x2="1719.7" y2="1113.2" stroke="#c99a4a" stroke-width="1" />
<line x1="1742.7" y1="1110.2" x2="1742.7" y2="1113.2" stroke="#c99a4a" stroke-width="1" />
<line x1="1765.7" y1="1110.2" x2="1765.7" y2="1113.2" stroke="#c99a4a" stroke-width="1" />
<line x1="1788.6" y1="1110.2" x2="1788.6" y2="1113.2" stroke="#c99a4a" stroke-width="1" />
<line x1="1811.6" y1="1110.2" x2="1811.6" y2="1113.2" stroke="#c99a4a" stroke-width="1" />
<line x1="1834.5" y1="1110.2" x2="1834.5" y2="1113.2" stroke="#c99a4a" stroke-width="1" />
<line x1="1857.5" y1="1110.2" x2="1857.5" y2="1113.2" stroke="#c99a4a" stroke-width="1" />
<line x1="1880.5" y1="1110.2" x2="1880.5" y2="1113.2" stroke="#c99a4a" stroke-width="1" />
<line x1="1903.4" y1="1110.2" x2="1903.4" y2="1113.2" stroke="#c99a4a" stroke-width="1" />
<line x1="1926.4" y1="1110.2" x2="1926.4" y2="1113.2" stroke="#c99a4a" stroke-width="1" />
<line x1="1949.3" y1="1110.2" x2="1949.3" y2="1113.2" stroke="#c99a4a" stroke-width="1" />
<line x1="1972.3" y1="1110.2" x2="1972.3" y2="1113.2" stroke="#c99a4a" stroke-width="1" />
<line x1="1995.3" y1="1110.2" x2="1995.3" y2="1113.2" stroke="#c99a4a" stroke-width="1" />
<line x1="2018.2" y1="1110.2" x2="2018.2" y2="1113.2" stroke="#c99a4a" stroke-width="1" />
<line x1="2041.2" y1="1110.2" x2="2041.2" y2="1113.2" stroke="#c99a4a" stroke-width="1" />
<line x1="2064.1" y1="1110.2" x2="2064.1" y2="1113.2" stroke="#c99a4a" stroke-width="1" />
<line x1="2087.1" y1="1110.2" x2="2087.1" y2="1113.2" stroke="#c99a4a" stroke-width="1" />
<line x1="2110.1" y1="1110.2" x2="2110.1" y2="1113.2" stroke="#c99a4a" stroke-width="1" />
<line x1="2133.0" y1="1110.2" x2="2133.0" y2="1113.2" stroke="#c99a4a" stroke-width="1" />
<line x1="2156.0" y1="1110.2" x2="2156.0" y2="1113.2" stroke="#c99a4a" stroke-width="1" />
<line x1="2178.9" y1="1110.2" x2="2178.9" y2="1113.2" stroke="#c99a4a" stroke-width="1" />
<line x1="2201.9" y1="1110.2" x2="2201.9" y2="1113.2" stroke="#c99a4a" stroke-width="1" />
<line x1="2224.9" y1="1110.2" x2="2224.9" y2="1113.2" stroke="#c99a4a" stroke-width="1" />
<text x="1491.0" y="647.0" font-size="10" fill="#d4d4d4" text-anchor="end" >60</text>
<text x="1491.0" y="680.3" font-size="10" fill="#d4d4d4" text-anchor="end" >50</text>
<text x="1491.0" y="713.7" font-size="10" fill="#d4d4d4" text-anchor="end" >40</text>
<text x="1491.0" y="747.0" font-size="10" fill="#d4d4d4" text-anchor="end" >30</text>
<text x="1491.0" y="780.3" font-size="10" fill="#d4d4d4" text-anchor="end" >20</text>
<text x="1491.0" y="813.7" font-size="10" fill="#d4d4d4" text-anchor="end" >10</text>
<text x="1491.0" y="847.0" font-size="10" fill="#d4d4d4" text-anchor="end" >0</text>
<text x="1491.0" y="880.3" font-size="10" fill="#d4d4d4" text-anchor="end" >-10</text>
<text x="1491.0" y="913.7" font-size="10" fill="#d4d4d4" text-anchor="end" >-20</text>
<text x="1491.0" y="947.0" font-size="10" fill="#d4d4d4" text-anchor="end" >-30</text>
<text x="1491.0" y="980.3" font-size="10" fill="#d4d4d4" text-anchor="end" >-40</text>
<text x="1491.0" y="1013.7" font-size="10" fill="#d4d4d4" text-anchor="end" >-50</text>
<text x="1491.0" y="1047.0" font-size="10" fill="#d4d4d4" text-anchor="end" >-60</text>
<text x="1491.0" y="1080.3" font-size="10" fill="#d4d4d4" text-anchor="end" >-70</text>
<text x="1491.0" y="1113.7" font-size="10" fill="#d4d4d4" text-anchor="end" >-80</text>
<text x="1513.1" y="1125.0" font-size="10" fill="#d4d4d4" text-anchor="middle" >-150</text>
<text x="1627.9" y="1125.0" font-size="10" fill="#d4d4d4" text-anchor="middle" >-100</text>
<text x="1742.7" y="1125.0" font-size="10" fill="#d4d4d4" text-anchor="middle" >-50</text>
<text x="1857.5" y="1125.0" font-size="10" fill="#d4d4d4" text-anchor="middle" >0</text>
<text x="1972.3" y="1125.0" font-size="10" fill="#d4d4d4" text-anchor="middle" >50</text>
<text x="2087.1" y="1125.0" font-size="10" fill="#d4d4d4" text-anchor="middle" >100</text>
<text x="2201.9" y="1125.0" font-size="10" fill="#d4d4d4" text-anchor="middle" >150</text>
<text x="1857.0" y="1143.0" font-size="14" fill="#d4d4d4" text-anchor="middle" >Hz</text>
<text x="0" y="0" font-size="13" fill="#d4d4d4" text-anchor="middle" transform="translate(1465,876) rotate(-90)">dBm</text>
<rect x="1745" y="843.5" width="225" height="266.70000000000005" fill="#eded30" stroke="#2a2a20" stroke-width="1.5"/>
<rect x="1515" y="1002.4" width="226" height="107.80000000000007" fill="#eded30" stroke="#2a2a20" stroke-width="1.5"/>
<rect x="1974.3" y="1003.8" width="225.70000000000005" height="106.40000000000009" fill="#eded30" stroke="#2a2a20" stroke-width="1.5"/>
<rect x="1721" y="1037" width="9" height="73.20000000000005" fill="#f2a020" stroke="#2a2a20" stroke-width="1.5"/>
<rect x="1732.6" y="1036.3" width="9.0" height="73.90000000000009" fill="#f2a020" stroke="#2a2a20" stroke-width="1.5"/>
<rect x="1974.5" y="1039.5" width="8.5" height="70.70000000000005" fill="#f2a020" stroke="#2a2a20" stroke-width="1.5"/>
<rect x="1985.3" y="1039" width="8.700000000000045" height="71.20000000000005" fill="#f2a020" stroke="#2a2a20" stroke-width="1.5"/>
<rect x="1497.3" y="643.5" width="720.0000000000002" height="466.70000000000005" fill="none" stroke="#c99a4a" stroke-width="1.3"/>
<line x1="1497.3" y1="643.5" x2="1497.3" y2="1110.2" stroke="#c99a4a" stroke-width="2"/>
<line x1="1497.3" y1="1110.2" x2="2217.3" y2="1110.2" stroke="#c99a4a" stroke-width="2"/>
<line x1="1515.0" y1="977.0" x2="1741.0" y2="977.0" stroke="#c42828" stroke-width="2.2" />
<line x1="1974.0" y1="977.0" x2="2200.0" y2="977.0" stroke="#c42828" stroke-width="2.2" />
<line x1="1732.0" y1="987.0" x2="1741.0" y2="987.0" stroke="#c42828" stroke-width="2.2" />
<line x1="1721.0" y1="1000.0" x2="1730.0" y2="1000.0" stroke="#c42828" stroke-width="2.2" />
<line x1="1974.0" y1="987.0" x2="1983.0" y2="987.0" stroke="#c42828" stroke-width="2.2" />
<line x1="1986.0" y1="1000.0" x2="1994.0" y2="1000.0" stroke="#c42828" stroke-width="2.2" />
<circle cx="2235" cy="990" r="18" fill="#4a86d0"/>
<polyline points="2232,983.5 2226,990 2232,996.5" fill="none" stroke="#f4f4f4" stroke-width="2.2"/>
<g transform="translate(1931.87,1091.50) scale(1.658)" fill="none" stroke="rgba(150,150,110,0.55)" stroke-width="0.66" stroke-linecap="round"><path d="M0.8,1.5 L2,2.5"/><path d="M0.5,4 L1.8,5"/><path d="M0.6,9.5 L1.9,6.5"/><path d="M3.2,1 L3.2,5 L5.8,5 L5.8,1 Z"/><path d="M3.2,3 L5.8,3"/><path d="M4.5,0.2 L4.5,1"/><path d="M2.8,6.2 L6,6.2"/><path d="M3.5,6.2 L3.2,9.8"/><path d="M5.5,6.2 L5.5,9.5 L4.8,9.2"/><path d="M7.6,0.3 L6.7,4"/><path d="M7,2.2 L9.7,2.2"/><path d="M9,2.2 Q8.5,7 6.3,9.8"/><path d="M7.3,4.5 Q8,8 9.8,9.8"/></g><g transform="translate(1951.37,1091.50) scale(1.658)" fill="none" stroke="rgba(150,150,110,0.55)" stroke-width="0.66" stroke-linecap="round"><path d="M0.8,1.5 L2,2.5"/><path d="M0.5,4 L1.8,5"/><path d="M0.6,9.5 L1.9,6.5"/><path d="M8.8,0.5 Q6,1.5 3.5,1.8"/><path d="M3,4.2 L9.8,4.2"/><path d="M6.3,1.5 L6.3,6.3"/><path d="M4,6.3 L4,9.8 L8.8,9.8 L8.8,6.3 Z"/></g>
<text x="1982.5" y="1108.6" font-size="23" fill="rgba(150,150,110,0.55)" text-anchor="start" textLength="92.3" lengthAdjust="spacingAndGlyphs">Windows</text>
<g transform="translate(1930.59,1119.00) scale(1.326)" fill="none" stroke="rgba(175,175,175,0.75)" stroke-width="0.72" stroke-linecap="round"><path d="M0.3,2 L4,2"/><path d="M2,0.3 L0.8,6.5 L4,6.2"/><path d="M1.8,4 L1.8,9.8"/><path d="M0.3,8 L4.2,7.5"/><path d="M5,2 L9.8,2"/><path d="M7.3,0.3 L6.2,5"/><path d="M4.8,4.5 L9.8,4.5"/><path d="M9,4.5 L6.5,7.5 L9.5,9.8"/></g><g transform="translate(1946.19,1119.00) scale(1.326)" fill="none" stroke="rgba(175,175,175,0.75)" stroke-width="0.72" stroke-linecap="round"><path d="M0.3,0.8 L6,0.8"/><path d="M3.5,0.8 L1,4 L5.5,3.6"/><path d="M0.8,6 L5.8,6"/><path d="M3.2,4.2 L3.2,9"/><path d="M0.3,9.2 L6.2,9.2"/><path d="M7.2,1.5 L7.2,7.5"/><path d="M9.3,0.3 L9.3,9.8 L8.3,9.5"/></g><g transform="translate(1961.79,1119.00) scale(1.326)" fill="none" stroke="rgba(175,175,175,0.75)" stroke-width="0.72" stroke-linecap="round"><path d="M3,1 L2,4"/><path d="M6.5,1 L5.5,4"/></g><g transform="translate(1969.59,1119.00) scale(1.326)" fill="none" stroke="rgba(175,175,175,0.75)" stroke-width="0.72" stroke-linecap="round"><path d="M1,0.8 L2,1.8"/><path d="M0.3,4 L1.8,4 L1.8,9 L3,8"/><path d="M4.8,0.8 L4.5,4 L3.8,5"/><path d="M4.8,0.8 L7.8,0.8 L7.8,3.5 L9.6,3.8"/><path d="M4.2,5.5 L9,5.5 Q7.5,8.5 4,9.8"/><path d="M5,6.5 Q7,9 9.8,9.8"/></g><g transform="translate(1985.19,1119.00) scale(1.326)" fill="none" stroke="rgba(175,175,175,0.75)" stroke-width="0.72" stroke-linecap="round"><path d="M1,0.5 L9,0.5 L9,2.8 L1,2.8 Z"/><path d="M3.7,0.5 L3.7,2.8"/><path d="M6.3,0.5 L6.3,2.8"/><path d="M0.3,4 L9.7,4"/><path d="M5,2.8 L5,4.8"/><path d="M2.2,4.8 L2.2,9.8"/><path d="M3.5,5.2 L8,5.2 L8,9 L3.5,9 Z"/><path d="M3.5,6.5 L8,6.5"/><path d="M3.5,7.8 L8,7.8"/><path d="M0.5,9.8 L9.7,9.8"/></g><g transform="translate(2000.79,1119.00) scale(1.326)" fill="none" stroke="rgba(175,175,175,0.75)" stroke-width="0.72" stroke-linecap="round"><path d="M3.5,1 L2.5,4"/><path d="M7,1 L6,4"/></g><g transform="translate(2008.59,1119.00) scale(1.326)" fill="none" stroke="rgba(175,175,175,0.75)" stroke-width="0.72" stroke-linecap="round"><path d="M1.3,1 L1.3,8.8 L4.5,6.8"/><path d="M3.3,2.5 L4.6,4.5"/><path d="M8,0.5 Q7.8,6 4.8,9.8"/><path d="M7.5,6.5 L9.8,9.8"/></g><g transform="translate(2024.19,1119.00) scale(1.326)" fill="none" stroke="rgba(175,175,175,0.75)" stroke-width="0.72" stroke-linecap="round"><path d="M0.8,1.5 L2,2.5"/><path d="M0.5,4 L1.8,5"/><path d="M0.6,9.5 L1.9,6.5"/><path d="M3.2,1 L3.2,5 L5.8,5 L5.8,1 Z"/><path d="M3.2,3 L5.8,3"/><path d="M4.5,0.2 L4.5,1"/><path d="M2.8,6.2 L6,6.2"/><path d="M3.5,6.2 L3.2,9.8"/><path d="M5.5,6.2 L5.5,9.5 L4.8,9.2"/><path d="M7.6,0.3 L6.7,4"/><path d="M7,2.2 L9.7,2.2"/><path d="M9,2.2 Q8.5,7 6.3,9.8"/><path d="M7.3,4.5 Q8,8 9.8,9.8"/></g><g transform="translate(2039.79,1119.00) scale(1.326)" fill="none" stroke="rgba(175,175,175,0.75)" stroke-width="0.72" stroke-linecap="round"><path d="M0.8,1.5 L2,2.5"/><path d="M0.5,4 L1.8,5"/><path d="M0.6,9.5 L1.9,6.5"/><path d="M8.8,0.5 Q6,1.5 3.5,1.8"/><path d="M3,4.2 L9.8,4.2"/><path d="M6.3,1.5 L6.3,6.3"/><path d="M4,6.3 L4,9.8 L8.8,9.8 L8.8,6.3 Z"/></g>
<text x="2057.5" y="1131.2" font-size="17" fill="rgba(175,175,175,0.75)" text-anchor="start" textLength="66.8" lengthAdjust="spacingAndGlyphs">Windows</text>
<circle cx="2127" cy="1129.5" r="2" fill="none" stroke="rgba(175,175,175,0.75)" stroke-width="1"/>
</svg>
<svg style="left:0;top:0" width="2239" height="1196">
<defs><linearGradient id="sw" x1="0" y1="1" x2="0.4" y2="0"><stop offset="0" stop-color="#ee7f00"/><stop offset="1" stop-color="#f8b800"/></linearGradient></defs>
<polygon points="1869.49,544.87 1883.16,544.87 1887.71,576.76 1901.00,544.87 1913.15,544.87 1916.57,547.15 1917.71,553.98 1908.60,596.50 1902.14,568.41 1891.51,596.50 1876.32,596.50" fill="#ffffff"/>
<path d="M1908.6,596.7 C1913,575 1930,550 1963.3,527.6 C1950,542 1935,570 1926.8,596.7 Z" fill="url(#sw)"/>
<path d="M1958.71,544.87 L1993.26,544.87 L1991.59,556.26 L1963.26,556.26 Q1961.37,556.64 1960.99,560.06 L1960.38,564.23 L1989.99,564.23 L1988.32,576.00 L1960.99,576.00 Q1959.09,576.38 1958.71,580.56 L1958.33,584.73 L1986.42,584.73 L1984.68,596.50 L1953.39,596.50 Q1943.52,596.50 1944.43,586.63 L1950.36,552.46 Q1951.50,544.87 1958.71,544.87 Z" fill="#ffffff"/>
<path d="M1997.43,544.87 L2012.62,544.87 L2006.92,584.73 L2027.81,584.73 L2026.06,596.50 L2000.47,596.50 Q1992.12,596.50 1993.03,587.39 Z" fill="#ffffff"/>
<polygon points="2040.50,544.87 2084.54,544.87 2084.16,557.02 2052.65,584.73 2076.95,584.73 2075.20,596.50 2031.39,596.50 2032.53,585.11 2064.04,556.64 2038.98,556.64" fill="#ffffff"/>
<path d="M2095.93,544.87 L2132.00,544.87 L2130.25,556.26 L2103.52,556.26 Q2101.62,556.64 2101.25,560.06 L2100.64,564.23 L2128.35,564.23 L2126.68,576.00 L2099.73,576.00 Q2097.83,576.38 2097.45,580.56 L2097.07,584.73 L2124.78,584.73 L2123.04,596.50 L2092.89,596.50 Q2081.88,596.50 2083.02,585.11 L2087.58,552.46 Q2088.72,544.87 2095.93,544.87 Z" fill="#ffffff"/>
<polygon points="2137.69,544.87 2151.74,544.87 2147.56,564.99 2168.06,544.87 2185.53,544.87 2159.71,570.31 2174.14,596.50 2158.19,596.50 2146.42,576.38 2142.25,596.50 2128.58,596.50" fill="#ffffff"/>
<text x="1784.3" y="679.2" font-size="80" font-weight="bold" fill="#ffffff" textLength="45.3" lengthAdjust="spacingAndGlyphs">5</text>
<text x="1827.5" y="679.2" font-size="80" font-weight="bold" fill="#ffffff" textLength="49.2" lengthAdjust="spacingAndGlyphs">G</text>
<text x="1898.6" y="679.2" font-size="80" font-weight="bold" fill="#ffffff" textLength="44.4" lengthAdjust="spacingAndGlyphs">F</text>
<text x="1942.8" y="679.2" font-size="80" font-weight="bold" fill="#ffffff" textLength="44.2" lengthAdjust="spacingAndGlyphs">R</text>
<text x="1988.9" y="679.2" font-size="80" font-weight="bold" fill="#ffffff" textLength="34.7" lengthAdjust="spacingAndGlyphs">1</text>
<polygon points="2053.06,617.69 2064.11,624.73 2059.42,631.76 2048.04,624.06" fill="#ffffff"/>
<polygon points="2050.05,636.78 2062.10,643.48 2056.74,650.51 2045.36,642.81" fill="#ffffff"/>
<polygon points="2055.41,655.87 2062.44,660.56 2054.40,683.67 2046.03,678.98" fill="#ffffff"/>
<polygon points="2065.12,620.71 2090.57,620.71 2090.57,667.59 2083.54,667.59 2083.54,627.41 2071.48,627.41 2071.48,667.59 2065.12,667.59" fill="#ffffff"/>
<polygon points="2093.92,623.05 2100.28,623.05 2100.28,667.93 2093.92,667.93" fill="#ffffff"/>
<polygon points="2082.20,669.27 2091.57,680.32 2086.22,684.00 2077.51,674.29" fill="#ffffff"/>
<polygon points="2126.40,618.03 2137.79,628.41 2132.10,635.11 2120.71,623.39" fill="#ffffff"/>
<polygon points="2117.03,639.13 2134.11,639.13 2134.11,667.59 2140.47,663.91 2142.14,670.94 2126.40,683.00 2122.05,675.63 2125.40,671.61 2125.40,646.49 2117.03,646.49" fill="#ffffff"/>
<polygon points="2138.79,631.09 2183.00,631.09 2183.00,638.79 2138.79,638.79" fill="#ffffff"/>
<polygon points="2140.80,647.83 2160.56,647.83 2160.56,654.87 2155.20,654.87 2155.20,668.26 2162.57,665.92 2163.58,674.29 2142.48,679.98 2140.47,672.28 2146.83,670.61 2146.83,654.87 2140.80,654.87" fill="#ffffff"/>
<polygon points="2169.27,621.38 2175.97,618.03 2183.00,627.41 2176.64,630.42" fill="#ffffff"/>
<path d="M2074.16,630.75 L2080.52,630.75 L2080.52,662.90 Q2079.52,678.98 2065.45,684.34 L2062.10,678.98 Q2074.16,673.62 2074.16,662.90 Z" fill="#ffffff"/>
<path d="M2103.63,618.03 L2109.99,618.03 L2109.99,678.31 Q2109.99,684.00 2104.30,684.00 L2096.26,684.00 L2094.59,677.30 L2103.63,676.63 Z" fill="#ffffff"/>
<path d="M2161.23,618.03 L2169.60,618.03 Q2170.27,658.89 2174.96,671.28 L2176.97,662.90 L2183.67,667.26 Q2179.99,684.00 2173.96,684.00 Q2167.26,683.00 2163.24,665.58 Q2161.23,652.19 2161.23,618.03 Z" fill="#ffffff"/>
</svg>
</body></html>
